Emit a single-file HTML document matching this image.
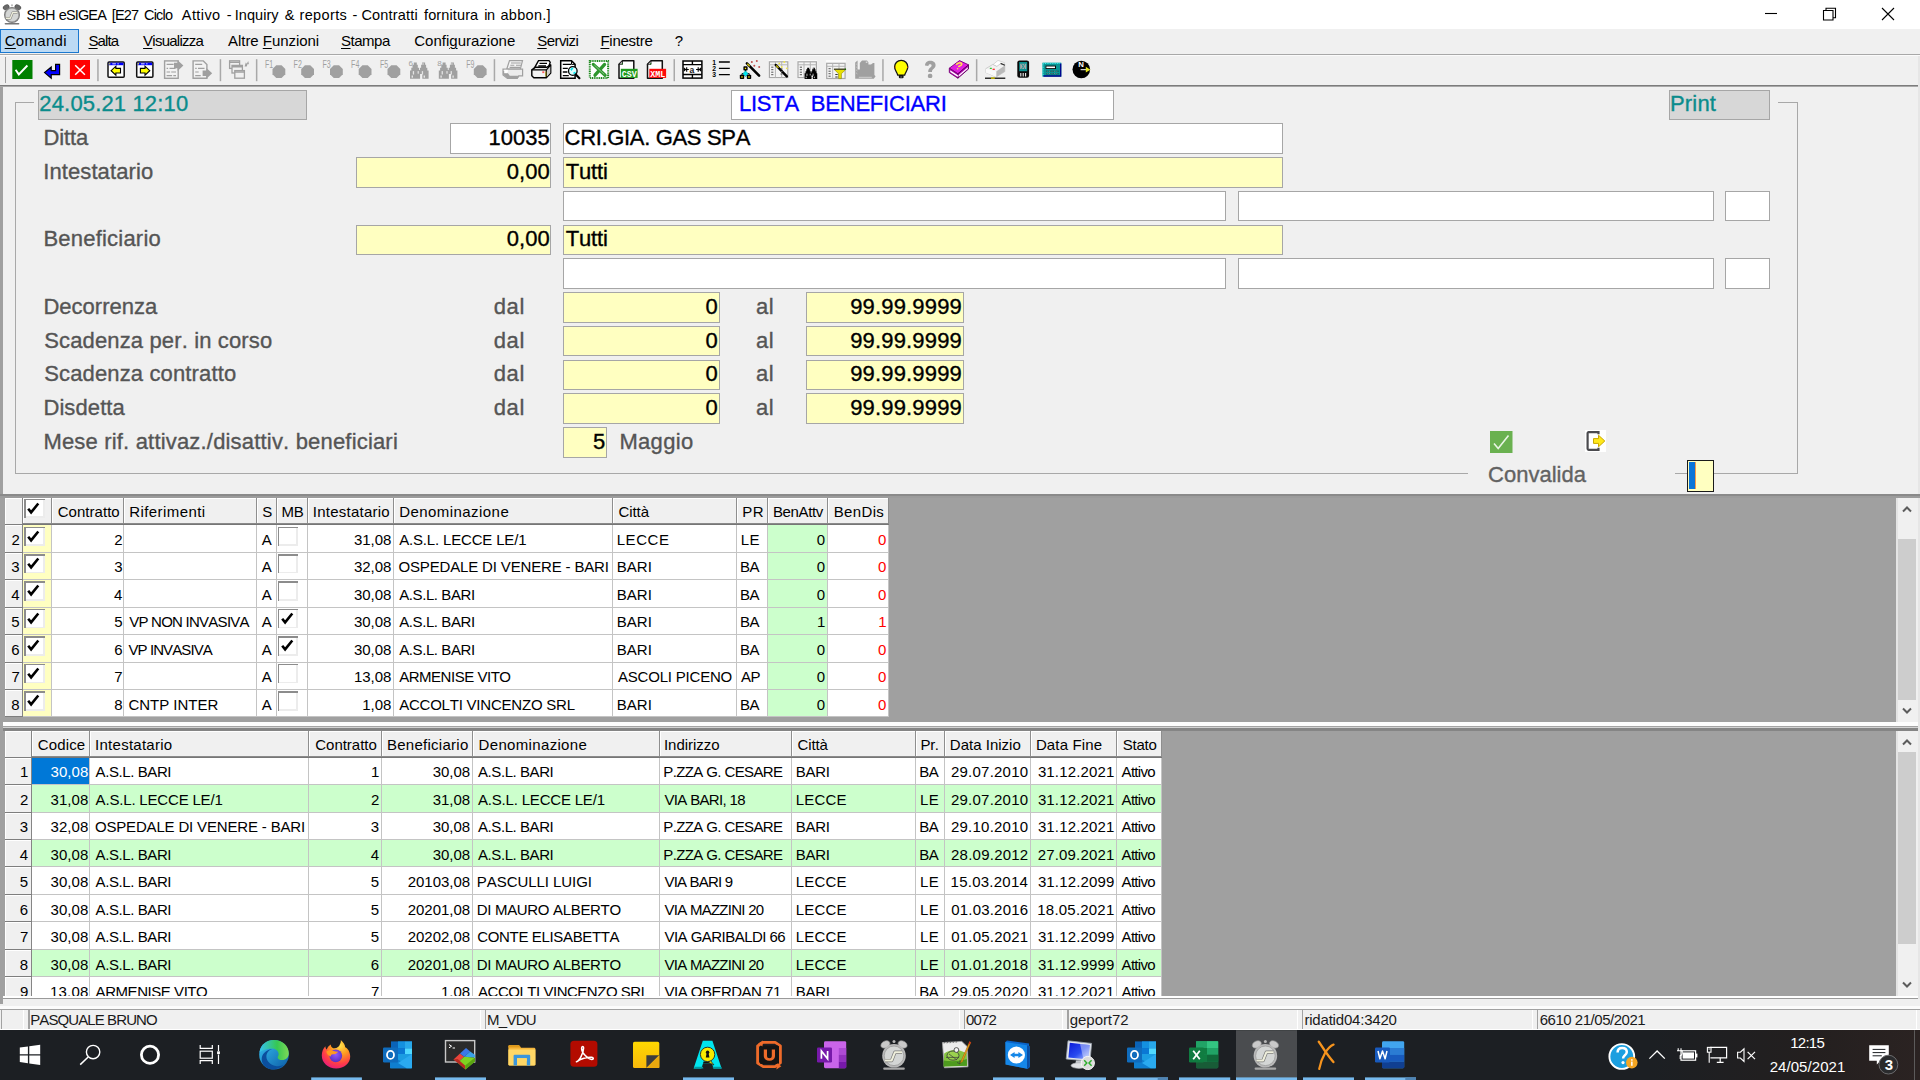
<!DOCTYPE html>
<html><head><meta charset="utf-8"><title>SBH eSIGEA</title><style>
html,body{margin:0;padding:0;}
body{width:1920px;height:1080px;overflow:hidden;background:#f0f0f0;position:relative;font-family:"Liberation Sans",sans-serif;font-kerning:none;}
.a{position:absolute;display:block;}
.t{position:absolute;white-space:pre;font-kerning:none;}
.t u{text-decoration-thickness:1px;text-underline-offset:2px;}
</style></head><body>
<div class="a" style="left:0.00px;top:0.00px;width:1920.00px;height:29.00px;background:#ffffff;"></div>
<div class="a" style="left:0.00px;top:28.60px;width:1920.00px;height:1.00px;background:#dcdcdc;"></div>
<div class="t" style="left:26.41px;top:5.68px;font-size:14.5px;line-height:19px;color:#000;letter-spacing:-0.406px;">SBH</div>
<div class="t" style="left:58.79px;top:5.68px;font-size:14.5px;line-height:19px;color:#000;letter-spacing:-0.870px;">eSIGEA</div>
<div class="t" style="left:111.84px;top:5.68px;font-size:14.5px;line-height:19px;color:#000;letter-spacing:-0.870px;">[E27</div>
<div class="t" style="left:144.01px;top:5.68px;font-size:14.5px;line-height:19px;color:#000;letter-spacing:-0.796px;">Ciclo</div>
<div class="t" style="left:181.82px;top:5.68px;font-size:14.5px;line-height:19px;color:#000;letter-spacing:0.415px;">Attivo</div>
<div class="t" style="left:226.71px;top:5.68px;font-size:14.5px;line-height:19px;color:#000;">-</div>
<div class="t" style="left:234.71px;top:5.68px;font-size:14.5px;line-height:19px;color:#000;letter-spacing:0.058px;">Inquiry</div>
<div class="t" style="left:284.64px;top:5.68px;font-size:14.5px;line-height:19px;color:#000;">&amp;</div>
<div class="t" style="left:299.49px;top:5.68px;font-size:14.5px;line-height:19px;color:#000;letter-spacing:0.360px;">reports</div>
<div class="t" style="left:352.41px;top:5.68px;font-size:14.5px;line-height:19px;color:#000;">-</div>
<div class="t" style="left:361.41px;top:5.68px;font-size:14.5px;line-height:19px;color:#000;letter-spacing:0.189px;">Contratti</div>
<div class="t" style="left:424.04px;top:5.68px;font-size:14.5px;line-height:19px;color:#000;letter-spacing:0.114px;">fornitura</div>
<div class="t" style="left:484.25px;top:5.68px;font-size:14.5px;line-height:19px;color:#000;letter-spacing:-0.406px;">in</div>
<div class="t" style="left:500.53px;top:5.68px;font-size:14.5px;line-height:19px;color:#000;letter-spacing:0.279px;">abbon.]</div>
<svg class="a" style="left:0;top:0" width="26" height="28" viewBox="0 0 26 28"><g transform="translate(2.00 -702.93) scale(0.68)"><ellipse cx="6.1" cy="1044.400" rx="4.800" ry="3.400" fill="#6a6a6a" stroke="#333" stroke-width="0.600" transform="rotate(-28 6.1 1044.400)"/><ellipse cx="23.3" cy="1044.400" rx="4.800" ry="3.400" fill="#6a6a6a" stroke="#333" stroke-width="0.600" transform="rotate(28 23.3 1044.400)"/><circle cx="14.700000000000001" cy="1041.600" r="1.500" fill="#b5b5b5"/><circle cx="14.700000000000001" cy="1055.800" r="11.800" fill="#7c7c7c"/><circle cx="14.700000000000001" cy="1055.800" r="9.800" fill="#d4d6d5" stroke="#9c9c9c" stroke-width="0.800"/><path d="M5.7 1060.600h6.600l3.400-8.400h7" stroke="#7a7a7a" stroke-width="3.400" fill="none" stroke-linejoin="round"/><path d="M5.7 1060.600h6.600l3.400-8.400h7" stroke="#efefdc" stroke-width="2" fill="none" stroke-linejoin="round"/><rect x="3.9" y="1067.400" width="21.600" height="2.400" rx="1" fill="#777"/></g></svg>
<svg class="a" style="left:1750.00px;top:0.00px;" width="170" height="29" viewBox="0 0 170 29"><path d="M15 13.5h12" stroke="#000" stroke-width="1.1" fill="none"/><path d="M73.5 10.5h9.5v9.5h-9.5zM76 10.5v-2.3h9.5v9.5h-2.3" stroke="#000" stroke-width="1.1" fill="none"/><path d="M132 8l12 12M144 8l-12 12" stroke="#000" stroke-width="1.1" fill="none"/></svg>
<div class="a" style="left:0.00px;top:29.00px;width:1920.00px;height:25.00px;background:#f0f0f0;"></div>
<div class="a" style="left:0.00px;top:54.00px;width:1920.00px;height:1.00px;background:#a8a8a8;"></div>
<div class="a" style="left:0.00px;top:55.00px;width:1920.00px;height:1.00px;background:#fbfbfb;"></div>
<div class="a" style="left:0.00px;top:29.40px;width:78.60px;height:23.20px;background:#bcdaf4;border:1px solid #1a78cf;box-sizing:border-box;"></div>
<div class="t" style="left:4.69px;top:31.05px;font-size:15px;line-height:20px;color:#000;letter-spacing:0.307px;"><u>C</u>omandi</div>
<div class="t" style="left:88.51px;top:31.05px;font-size:15px;line-height:20px;color:#000;letter-spacing:-0.900px;"><u>S</u>alta</div>
<div class="t" style="left:143.08px;top:31.05px;font-size:15px;line-height:20px;color:#000;letter-spacing:-0.751px;"><u>V</u>isualizza</div>
<div class="t" style="left:228.12px;top:31.05px;font-size:15px;line-height:20px;color:#000;letter-spacing:-0.059px;">Altre <u>F</u>unzioni</div>
<div class="t" style="left:341.02px;top:31.05px;font-size:15px;line-height:20px;color:#000;letter-spacing:-0.483px;"><u>S</u>tampa</div>
<div class="t" style="left:414.19px;top:31.05px;font-size:15px;line-height:20px;color:#000;letter-spacing:0.010px;">Confi<u>g</u>urazione</div>
<div class="t" style="left:537.27px;top:31.05px;font-size:15px;line-height:20px;color:#000;letter-spacing:-0.578px;"><u>S</u>ervizi</div>
<div class="t" style="left:600.47px;top:31.05px;font-size:15px;line-height:20px;color:#000;letter-spacing:-0.277px;"><u>F</u>inestre</div>
<div class="t" style="left:674.83px;top:31.05px;font-size:15px;line-height:20px;color:#000;">?</div>
<div class="a" style="left:0.00px;top:56.00px;width:1920.00px;height:28.50px;background:#f0f0f0;"></div>
<div class="a" style="left:0.00px;top:84.50px;width:1917.50px;height:1.50px;background:#7c7c7c;"></div>
<div class="a" style="left:0.00px;top:86.00px;width:1917.50px;height:1.00px;background:#a8a8a8;"></div>
<div class="a" style="left:4.80px;top:57.00px;width:1.20px;height:26.00px;background:#a0a0a0;"></div>
<svg class="a" style="left:0;top:56px" width="1100" height="29" viewBox="0 56 1100 29"><rect x="12.3" y="60" width="20.2" height="19" fill="#008000"/><path d="M15.6 69.8l3.2 4.6 8.6-8.9" stroke="#fff" stroke-width="1.9" fill="none"/><path d="M55.6 64.4h4v10.2h-8.4v3.6l-6.6-5.6 6.6-5.6v3.6h4.4z" fill="#0000ff" stroke="#000" stroke-width="1.2" stroke-linejoin="miter"/><rect x="69.9" y="60" width="20.1" height="19" fill="#ff0000"/><path d="M75.2 65.3l9.7 9.5M84.9 65.3l-9.7 9.5" stroke="#fff" stroke-width="1.5" fill="none"/><rect x="97.2" y="59.2" width="1.5" height="22" fill="#a9a9a9"/><rect x="108.0" y="62" width="16.2" height="15.3" rx="1" fill="#fff" stroke="#111" stroke-width="1.5"/><rect x="108.8" y="62.7" width="14.6" height="2.5" fill="#0000ff"/><rect x="112.3" y="63.4" width="3.6" height="0.9" fill="#fff"/><rect x="117.3" y="63.4" width="1.6" height="0.9" fill="#cfcfff"/><rect x="109.1" y="63.2" width="1.2" height="1.2" fill="#ffff00"/><path d="M120.5 68.4h-4.6v-2.2l-4.8 4.5 4.8 4.5v-2.2h4.6z" fill="#ffff00" stroke="#000" stroke-width="1.1"/><rect x="136.7" y="62" width="16.2" height="15.3" rx="1" fill="#fff" stroke="#111" stroke-width="1.5"/><rect x="137.5" y="62.7" width="14.6" height="2.5" fill="#0000ff"/><rect x="141" y="63.4" width="3.6" height="0.9" fill="#fff"/><rect x="146" y="63.4" width="1.6" height="0.9" fill="#cfcfff"/><rect x="137.8" y="63.2" width="1.2" height="1.2" fill="#ffff00"/><path d="M140.4 68.4h4.6v-2.2l4.8 4.5-4.8 4.5v-2.2h-4.6z" fill="#ffff00" stroke="#000" stroke-width="1.1"/><rect x="164.6" y="60.9" width="13.6" height="17.4" fill="#f3f3f3" stroke="#a0a0a0" stroke-width="1.4"/><path d="M166.6 64.3h7M166.6 68.3h1.5M169.5 68.3h6M166.6 72h3.5M171.2 72h4.8M166.6 75.7h5.5M173.3 75.7h2.7" stroke="#a0a0a0" stroke-width="1.2"/><path d="M174 62.8h3.6v-2.6l5.8 5.4-5.8 5.4v-2.7h-3.6z" fill="#a0a0a0"/><path d="M193.1 60.9h10.2l3.6 3.6v13.8h-13.8z" fill="#f3f3f3" stroke="#a0a0a0" stroke-width="1.4"/><path d="M195.2 64.3h7M195.2 68.3h1.5M198 68.3h6.5M195.2 72h3.5M195.2 75.7h5.5" stroke="#a0a0a0" stroke-width="1.2"/><path d="M202.6 70.5h3.8v-2.6l5.8 5.4-5.8 5.4v-2.7h-3.8z" fill="#a0a0a0"/><rect x="219.7" y="59.2" width="1.5" height="22" fill="#a9a9a9"/><g fill="#f0f0f0" stroke="#a0a0a0" stroke-width="1.3"><rect x="229.6" y="60.8" width="10" height="7.6"/><rect x="232" y="65.4" width="10.4" height="7.6"/><rect x="234.8" y="70.6" width="9.6" height="7.6"/></g><path d="M229.6 62.2h10M232 66.8h10.4M234.8 72h9.6" stroke="#a0a0a0" stroke-width="1.6"/><path d="M244.6 66.6l1.2-4 1 1.2 1.4-2.8.8 3.6-1.3-.8-1 2.6z" fill="#a0a0a0"/><rect x="255.89999999999998" y="59.2" width="1.5" height="22" fill="#a9a9a9"/><polygon points="276.25,65.20 281.55,65.20 285.30,68.95 285.30,74.25 281.55,78.00 276.25,78.00 272.50,74.25 272.50,68.95" fill="#a0a0a0"/><text x="264.9" y="67.6" font-family="Liberation Sans" font-size="10" fill="#a0a0a0" textLength="8.2" lengthAdjust="spacingAndGlyphs">F1</text><polygon points="304.95,65.20 310.25,65.20 314.00,68.95 314.00,74.25 310.25,78.00 304.95,78.00 301.20,74.25 301.20,68.95" fill="#a0a0a0"/><text x="293.59999999999997" y="67.6" font-family="Liberation Sans" font-size="10" fill="#a0a0a0" textLength="8.2" lengthAdjust="spacingAndGlyphs">F2</text><polygon points="333.75,65.20 339.05,65.20 342.80,68.95 342.80,74.25 339.05,78.00 333.75,78.00 330.00,74.25 330.00,68.95" fill="#a0a0a0"/><text x="322.4" y="67.6" font-family="Liberation Sans" font-size="10" fill="#a0a0a0" textLength="8.2" lengthAdjust="spacingAndGlyphs">F3</text><polygon points="362.45,65.20 367.75,65.20 371.50,68.95 371.50,74.25 367.75,78.00 362.45,78.00 358.70,74.25 358.70,68.95" fill="#a0a0a0"/><text x="351.09999999999997" y="67.6" font-family="Liberation Sans" font-size="10" fill="#a0a0a0" textLength="8.2" lengthAdjust="spacingAndGlyphs">F4</text><polygon points="391.25,65.20 396.55,65.20 400.30,68.95 400.30,74.25 396.55,78.00 391.25,78.00 387.50,74.25 387.50,68.95" fill="#a0a0a0"/><text x="379.9" y="67.6" font-family="Liberation Sans" font-size="10" fill="#a0a0a0" textLength="8.2" lengthAdjust="spacingAndGlyphs">F5</text><polygon points="477.55,65.20 482.85,65.20 486.60,68.95 486.60,74.25 482.85,78.00 477.55,78.00 473.80,74.25 473.80,68.95" fill="#a0a0a0"/><text x="466.2" y="67.6" font-family="Liberation Sans" font-size="10" fill="#a0a0a0" textLength="8.2" lengthAdjust="spacingAndGlyphs">F9</text><g transform="translate(410 62.5) scale(1.0)" fill="#a0a0a0"><path d="M3.8 0h3v2.2h1v3h1.2v2.2h0.9V5.200h1.2v-3h1V0h3v2.200h1v3h1.2v2.800h1.300v8.300h-6.300v-4.800h-2.200v4.800H0V8h1.300V5.200h1.200v-3h1.300z"/></g><g transform="translate(410 62.5) scale(1.0)" fill="#f0f0f0" opacity="0.85"><rect x="2.8" y="8.6" width="1.3" height="3.4"/><rect x="1.6" y="13" width="1.4" height="2.2"/><rect x="7.600" y="8.6" width="1.2" height="2.6"/><rect x="11.800" y="8.6" width="1.300" height="3.4"/><rect x="13.600" y="13" width="1.400" height="2.200"/><rect x="12.3" y="1" width="1.600" height="1"/></g><text x="408.4" y="66" font-family="Liberation Sans" font-size="8" fill="#a0a0a0">6</text><g transform="translate(438.8 62.5) scale(1.0)" fill="#a0a0a0"><path d="M3.8 0h3v2.2h1v3h1.2v2.2h0.9V5.200h1.2v-3h1V0h3v2.200h1v3h1.2v2.800h1.300v8.300h-6.300v-4.800h-2.200v4.800H0V8h1.300V5.200h1.200v-3h1.300z"/></g><g transform="translate(438.8 62.5) scale(1.0)" fill="#f0f0f0" opacity="0.85"><rect x="2.8" y="8.6" width="1.3" height="3.4"/><rect x="1.6" y="13" width="1.4" height="2.2"/><rect x="7.600" y="8.6" width="1.2" height="2.6"/><rect x="11.800" y="8.6" width="1.300" height="3.4"/><rect x="13.600" y="13" width="1.400" height="2.200"/><rect x="12.3" y="1" width="1.600" height="1"/></g><text x="437.2" y="66" font-family="Liberation Sans" font-size="8" fill="#a0a0a0">8</text><rect x="493.7" y="59.2" width="1.5" height="22" fill="#a9a9a9"/><path d="M509.5 60.6h13l-2.2 8.6h-13.6z" fill="#f4f4f4" stroke="#a0a0a0" stroke-width="1.2"/><path d="M511 63h9.800M510.300 65.2h4M516 65.2h5M509.600 67.400h10.500" stroke="#a0a0a0" stroke-width="1.1"/><path d="M503 69.2h19.600v6.600h-3.800l-1.600 2.600h-9.800l-4.400-3.400z" fill="#ececec" stroke="#a0a0a0" stroke-width="1.2"/><path d="M503 74.5l4.800 4h10l1.800-2.800h-9.800l-3.400-4.800h-3.400z" fill="#a0a0a0"/><rect x="504.200" y="69.800" width="3.600" height="3.400" fill="#fff"/><path d="M538.5 60.600h10.500l1.200 1.800-2.200 6h-13.800z" fill="#fff" stroke="#000" stroke-width="1.4"/><path d="M539.500 63.300h7.500M538.300 66h7.700" stroke="#000" stroke-width="1.300"/><path d="M531.800 69.800l3.800-2.600h11.500l3.600-2.400v8.200l-4.400 4.800h-12.500l-2-2z" fill="#e8e8e8" stroke="#000" stroke-width="1.400" stroke-linejoin="round"/><path d="M533 70.200h13.200v6.600h-12.200z" fill="#f4f4f4"/><path d="M546.300 70l4-3.800v6.600l-4 4.400z" fill="#cfcfcf"/><path d="M531.800 69.800h14.600l4.300-4.600M546.300 70v7.600" stroke="#000" stroke-width="1.200" fill="none"/><rect x="542.300" y="71.300" width="2" height="1.800" fill="#ff5a5a"/><rect x="545.400" y="71.500" width="1" height="5" fill="#a09000"/><path d="M560.700 60.800h10.800l3.600 3.600v13.800h-14.400z" fill="#fff" stroke="#000" stroke-width="1.500"/><path d="M571.500 60.800v3.600h3.600" fill="none" stroke="#000" stroke-width="1"/><path d="M562.800 64.400h8.200M562.800 68.300h5M562.800 72h4.600M562.800 75.700h6" stroke="#000" stroke-width="1.300"/><circle cx="572.800" cy="71" r="4.300" fill="#dff" stroke="#000" stroke-width="1.300"/><path d="M570.200 69.200a3 3 0 0 1 3.400-1.400l-2 3.300z" fill="#00e8f0"/><path d="M573.500 73.500l2-1.200" stroke="#00e8f0" stroke-width="1.600"/><path d="M575.800 74.400l3.600 3.800" stroke="#000" stroke-width="2.200" stroke-linecap="round"/><rect x="589.800" y="61" width="18.300" height="17" fill="#fff" stroke="#1f8a1f" stroke-width="2" stroke-dasharray="1.100 0.700"/><path d="M593.300 64.400l11.800 10.800M604.600 64.400l-9.600 10.800" stroke="#2d962d" stroke-width="3.300" stroke-linecap="round"/><path d="M594.300 65l10 9.400" stroke="#dff0df" stroke-width="0.500"/><path d="M622.5 60.800h11.300v17.400H619.0V64.300z" fill="#fff" stroke="#111" stroke-width="1.500" stroke-linejoin="round"/><path d="M622.5 60.800v3.500h-3.500z" fill="#d0d0d0" stroke="#111" stroke-width="0.800"/><rect x="621.6999999999999" y="63.400" width="1.100" height="1" fill="#008000"/><rect x="620.8" y="68.800" width="16.800" height="9.100" fill="#1f9a1f"/><text x="621.6999999999999" y="76.600" font-family="Liberation Mono" font-weight="bold" font-size="9.600" fill="#fff" textLength="15" lengthAdjust="spacingAndGlyphs">CSV</text><path d="M651.0 60.800h11.300v17.400H647.5V64.300z" fill="#fff" stroke="#111" stroke-width="1.500" stroke-linejoin="round"/><path d="M651.0 60.800v3.500h-3.500z" fill="#d0d0d0" stroke="#111" stroke-width="0.800"/><rect x="650.1999999999999" y="63.400" width="1.100" height="1" fill="#008000"/><rect x="649.3" y="68.800" width="16.800" height="9.100" fill="#ff0a0a"/><text x="650.1999999999999" y="76.600" font-family="Liberation Mono" font-weight="bold" font-size="9.600" fill="#fff" textLength="15" lengthAdjust="spacingAndGlyphs">XML</text><rect x="673.5" y="59.2" width="1.5" height="22" fill="#a9a9a9"/><rect x="683" y="61" width="18.900" height="17.100" fill="#fff" stroke="#000" stroke-width="1.500"/><path d="M683 64.600h18.900M683 74.500h18.900M692.400 61v3.600M692.400 74.500v3.600" stroke="#000" stroke-width="1.400"/><path d="M684.400 69.500h4.400M700.500 69.500h-4.400M686.700 67.300v4.400M698.200 67.300v4.400" stroke="#000" stroke-width="1.100"/><path d="M683.800 67.300l2.600 2.200-2.600 2.200zM701.100 67.300l-2.600 2.200 2.600 2.200z" fill="#000"/><text x="689.600" y="72.600" font-family="Liberation Sans" font-weight="bold" font-size="8.600" fill="#222">a</text><path d="M718.900 62h10.900M718.900 68.300h10.900M718.900 74.600h10.900" stroke="#000" stroke-width="1.300"/><g font-family="Liberation Sans" font-weight="bold" font-size="6.800" fill="#000"><text x="712.200" y="64.800">1</text><text x="712.200" y="71">2</text><text x="712.200" y="77.400">3</text></g><path d="M746.900 63.400l12.200 12.200" stroke="#000" stroke-width="2.600" stroke-linecap="round"/><path d="M747.300 63.800l2.400 2.400" stroke="#d8c800" stroke-width="1.300"/><g fill="#c0504d"><circle cx="751.800" cy="62" r="1"/><circle cx="756.800" cy="60.900" r="1"/><circle cx="754.300" cy="65.700" r="1"/><circle cx="759.200" cy="67" r="1"/></g><path d="M745.500 70v2M742 75.200v-1.600h7.200v1.600" stroke="#000" stroke-width="1" fill="none"/><rect x="743.400" y="66.300" width="4.200" height="4.200" rx="0.800" fill="#000"/><rect x="744.800" y="67.700" width="1.400" height="1.400" fill="#ffe800"/><path d="M745.500 70.800l2.700 2.900-2.700 2.900-2.700-2.900z" fill="#00e5ee" stroke="#008b8b" stroke-width="0.500"/><rect x="739.800" y="74.800" width="4.400" height="4.200" rx="0.800" fill="#000"/><rect x="741.200" y="76.200" width="1.500" height="1.500" fill="#d8c800"/><rect x="746.800" y="74.800" width="4.400" height="4.200" rx="0.800" fill="#000"/><rect x="748.200" y="76.200" width="1.500" height="1.500" fill="#d8c800"/><rect x="768.6" y="60" width="20.0" height="19" fill="#fbfbfb"/><rect x="769.4" y="61.8" width="18.4" height="15.8" fill="#f4f4f4" stroke="#a8a8a8" stroke-width="1.200"/><path d="M769.4 64.8h18.4M775.4 61.8v15.8M781.6999999999999 61.8v15.8" stroke="#b4b4b4" stroke-width="1"/><path d="M771.1999999999999 67.2h2.200M771.1999999999999 69.7h2.200M771.1999999999999 72.2h2.200M771.1999999999999 74.7h2.200" stroke="#555" stroke-width="1"/><path d="M775.800 65l11 11.400" stroke="#000" stroke-width="2.500" stroke-linecap="round"/><path d="M776.300 65.500l2.200 2.300" stroke="#d8c800" stroke-width="1.200"/><g fill="#f2e94e"><circle cx="779.300" cy="63.400" r="0.900"/><circle cx="784.300" cy="62" r="0.900"/><circle cx="781.800" cy="67" r="0.900"/><circle cx="786.800" cy="68.300" r="0.900"/></g><path d="M780.500 69h2M780.500 71.500h2M780.500 74h2" stroke="#555" stroke-width="1"/><rect x="797.2" y="60" width="20.0" height="19" fill="#fbfbfb"/><rect x="798.0" y="61.8" width="18.4" height="15.8" fill="#f4f4f4" stroke="#a8a8a8" stroke-width="1.200"/><path d="M798.0 64.8h18.4M804.0 61.8v15.8M810.3 61.8v15.8" stroke="#b4b4b4" stroke-width="1"/><path d="M799.8 67.2h2.200M799.8 69.7h2.200M799.8 72.2h2.200M799.8 74.7h2.200" stroke="#555" stroke-width="1"/><g transform="translate(804.6 67.8) scale(0.68)" fill="#000"><path d="M3.8 0h3v2.2h1v3h1.2v2.2h0.9V5.200h1.2v-3h1V0h3v2.200h1v3h1.2v2.800h1.300v8.300h-6.300v-4.800h-2.200v4.800H0V8h1.300V5.200h1.200v-3h1.300z"/></g><g transform="translate(804.6 67.8) scale(0.68)" fill="#f0f0f0" opacity="0.85"><rect x="2.8" y="8.6" width="1.3" height="3.4"/><rect x="1.6" y="13" width="1.4" height="2.2"/><rect x="7.600" y="8.6" width="1.2" height="2.6"/><rect x="11.800" y="8.6" width="1.300" height="3.4"/><rect x="13.600" y="13" width="1.400" height="2.200"/><rect x="12.3" y="1" width="1.600" height="1"/></g><rect x="825.9000000000001" y="60" width="20.0" height="19" fill="#fbfbfb"/><rect x="826.7" y="63.3" width="18.4" height="15.2" fill="#f4f4f4" stroke="#a8a8a8" stroke-width="1.200"/><path d="M826.7 66.3h18.4M832.7 63.3v15.2M839.0 63.3v15.2" stroke="#b4b4b4" stroke-width="1"/><path d="M828.5 68.7h2.200M828.5 71.2h2.200M828.5 73.7h2.200M828.5 76.2h2.200" stroke="#555" stroke-width="1"/><path d="M834 69.200h12l-4.600 4.600v4.800h-2.800v-4.800z" fill="#e8e000" stroke="#8a8400" stroke-width="0.600"/><path d="M834 69.200h12" stroke="#222" stroke-width="1"/><rect x="844.800" y="68.700" width="1.200" height="1" fill="#008000"/><path d="M835.300 74.500h2.400M835.300 77h2.400" stroke="#333" stroke-width="1"/><path d="M855.200 62.600l2.400-2.200v9h2.200v-6.400l2.200-2.400h5l1.400 1.600v2.400h2.600l2 -1.600h1.400v12l1.200 1.200-1.800 2.600h-18.600z" fill="#a0a0a0"/><path d="M856.300 64l1 .8M856.300 67l1 .8M856.300 70l1 .8M856.300 73l1 .8M858.800 77.300h13" stroke="#e4e4e4" stroke-width="0.700"/><rect x="865.800" y="61.600" width="1.600" height="1.200" fill="#e4e4e4"/><rect x="882.2" y="59.2" width="1.5" height="22" fill="#a9a9a9"/><path d="M901.200 60.400c3.800 0 6.600 2.800 6.600 6.600 0 3-2.200 5-3.200 8.200h-6.800c-1-3.200-3.200-5.200-3.200-8.200 0-3.800 2.800-6.600 6.600-6.600z" fill="#ffff00" stroke="#111" stroke-width="1.300"/><rect x="898.800" y="75" width="4.800" height="3.200" rx="1.200" fill="#111"/><rect x="900.300" y="76.600" width="1.800" height="0.800" fill="#9a9a9a"/><rect x="894.600" y="66.600" width="0.800" height="1.300" fill="#e04000"/><rect x="907" y="66.600" width="0.800" height="1.300" fill="#e04000"/><path d="M925 65.600c0-3 2.200-4.800 5.200-4.800 3.200 0 5.400 1.800 5.400 4.400 0 2.300-1.600 3.200-2.700 4.200-.7.600-.9 1.300-.9 2.700h-3.800c0-2.400.6-3.400 1.800-4.400.9-.8 1.600-1.300 1.600-2.200 0-.8-.6-1.300-1.500-1.300-1 0-1.700.6-1.700 1.800z" fill="#a0a0a0"/><rect x="927.900" y="73.800" width="4.400" height="4.200" rx="1.600" fill="#a0a0a0"/><path d="M949.300 68.200l10.200-7.600 9 4.200-10.600 9z" fill="#e020e0" stroke="#7a007a" stroke-width="0.900"/><path d="M949.300 68.200l8.600 5.600v4.400l-8.600-5.600z" fill="#a000a0" stroke="#7a007a" stroke-width="0.900"/><path d="M957.900 73.800l10.600-9v4.200l-10.600 9.200z" fill="#b400b4" stroke="#5a005a" stroke-width="0.900"/><path d="M950.200 70.200l7.700 5v1.800l-7.700-5zM958.600 75l9.200-7.800v1.600l-9.200 8z" fill="#fff"/><path d="M956.300 64.800c1-1.800 4-2.600 5.200-1.400 1 1-.6 2.200-2.400 2.800l-.6 1" stroke="#ffe84a" stroke-width="1.500" fill="none"/><circle cx="957.600" cy="68.800" r="0.800" fill="#ffe84a"/><rect x="975.9000000000001" y="59.2" width="1.5" height="22" fill="#a9a9a9"/><path d="M992.800 64.800l5.200-4.400 6.800 2.400-4.600 5.200z" fill="#fff" stroke="#c8c8c8" stroke-width="0.700"/><path d="M985.600 68.800l7.200-4.400 4 2 3.600-2.600 4.400 1.600v6.200l-8.600 5.400-10.600-4.600z" fill="#f2f2f2" stroke="#bdbdbd" stroke-width="0.700"/><path d="M996.200 71.400l8.600-6v6.200l-8.600 5.400z" fill="#b9b9b9"/><path d="M985.600 68.800l10.600 2.600v5.600l-10.600-4.600z" fill="#fafafa"/><path d="M1000.600 63.400l4.400 1.800" stroke="#333" stroke-width="1.200"/><rect x="989.800" y="67.800" width="2" height="1.100" fill="#22c022"/><rect x="992.600" y="68.700" width="2.200" height="1.200" fill="#ff2020"/><path d="M985 78.200h20.300" stroke="#000" stroke-width="1.200"/><rect x="991" y="77.400" width="3.800" height="1.400" fill="#d8c800"/><rect x="1017.300" y="60.400" width="11.800" height="17.400" rx="2.200" fill="#0a0a0a"/><rect x="1019.200" y="62" width="8" height="9.200" fill="#0a9090"/><path d="M1020.200 63.800h6v5.200h-6z" fill="#a8a8a8"/><path d="M1021.600 63.800l1.400 2.600-1.400 2.600M1024.800 63.800l-1.400 2.600 1.400 2.600" stroke="#0a9090" stroke-width="0.800" fill="none"/><path d="M1020.800 73v3.600M1023.200 73v3.600M1025.600 73v3.600" stroke="#f0f0f0" stroke-width="1.100"/><rect x="1042.400" y="62.700" width="18.900" height="13.900" fill="#0a9494"/><path d="M1043 76.600v-13.300h18" stroke="#3fe8e8" stroke-width="1.200" fill="none" stroke-dasharray="1 0.700"/><path d="M1043.400 76h17.300v-12.600" stroke="#000090" stroke-width="1.300" fill="none"/><rect x="1045.600" y="65.600" width="10.400" height="3.400" fill="#0a0a0a"/><rect x="1046.400" y="66.500" width="8.600" height="1.600" fill="#fff"/><path d="M1046.400 71.200h12.400M1046.400 73.700h12.400" stroke="#0a3a3a" stroke-width="1.600" stroke-dasharray="1.500 0.900"/><path d="M1046.800 71.200h12M1046.800 73.700h12" stroke="#d8f4f4" stroke-width="0.700" stroke-dasharray="0.800 1.600"/><circle cx="1081.300" cy="69.500" r="8.800" fill="#000"/><text x="1078.200" y="67.200" font-family="Liberation Sans" font-weight="bold" font-size="7.800" fill="#fff">N</text><path d="M1080.600 69.700h6" stroke="#fff" stroke-width="1"/><path d="M1085.800 66.800l4.600 2.900-4.600 2.900z" fill="#e8e820"/></svg>
<div class="a" style="left:0.00px;top:86.50px;width:1920.00px;height:407.50px;background:#f0f0f0;"></div>
<div class="a" style="left:0.00px;top:86.50px;width:2.50px;height:917.90px;background:#a0a0a0;"></div>
<div class="a" style="left:1917.50px;top:56.00px;width:2.50px;height:954.00px;background:#e6e6e6;"></div>
<div class="a" style="left:15.00px;top:101.50px;width:18.50px;height:1.20px;background:#a8a8a8;"></div>
<div class="a" style="left:15.00px;top:101.50px;width:1.20px;height:372.50px;background:#a8a8a8;"></div>
<div class="a" style="left:15.00px;top:472.80px;width:1453.40px;height:1.20px;background:#a8a8a8;"></div>
<div class="a" style="left:1675.00px;top:472.80px;width:123.00px;height:1.20px;background:#a8a8a8;"></div>
<div class="a" style="left:1796.80px;top:101.50px;width:1.20px;height:372.50px;background:#a8a8a8;"></div>
<div class="a" style="left:1777.50px;top:101.50px;width:20.50px;height:1.20px;background:#a8a8a8;"></div>
<div class="a" style="left:37.50px;top:89.50px;width:269.80px;height:30.50px;background:#d7d7d7;border:1px solid #a6a6a6;box-sizing:border-box;"></div>
<div class="t" style="left:39.34px;top:89.38px;font-size:22px;line-height:29px;color:#0a8c8c;letter-spacing:0.155px;-webkit-text-stroke:0.35px currentColor;">24.05.21 12:10</div>
<div class="a" style="left:731.30px;top:89.50px;width:382.50px;height:30.50px;background:#ffffff;border:1px solid #a6a6a6;box-sizing:border-box;"></div>
<div class="t" style="left:738.90px;top:89.38px;font-size:22px;line-height:29px;color:#0000ff;letter-spacing:-0.209px;-webkit-text-stroke:0.35px currentColor;">LISTA  BENEFICIARI</div>
<div class="a" style="left:1668.80px;top:89.50px;width:101.20px;height:30.50px;background:#d7d7d7;border:1px solid #a6a6a6;box-sizing:border-box;"></div>
<div class="t" style="left:1669.90px;top:89.38px;font-size:22px;line-height:29px;color:#0a8c8c;letter-spacing:0.208px;-webkit-text-stroke:0.35px currentColor;">Print</div>
<div class="t" style="left:43.40px;top:123.13px;font-size:22px;line-height:29px;color:#555555;letter-spacing:-0.083px;-webkit-text-stroke:0.35px currentColor;">Ditta</div>
<div class="a" style="left:450.00px;top:123.25px;width:101.30px;height:30.50px;background:#ffffff;border:1px solid #a6a6a6;box-sizing:border-box;"></div>
<div class="t" style="left:488.55px;top:123.13px;font-size:22px;line-height:29px;color:#000;-webkit-text-stroke:0.35px currentColor;">10035</div>
<div class="a" style="left:562.50px;top:123.25px;width:720.00px;height:30.50px;background:#ffffff;border:1px solid #a6a6a6;box-sizing:border-box;"></div>
<div class="t" style="left:564.58px;top:123.13px;font-size:22px;line-height:29px;color:#000;letter-spacing:-0.330px;-webkit-text-stroke:0.35px currentColor;">CRI.GIA. GAS SPA</div>
<div class="t" style="left:43.17px;top:156.88px;font-size:22px;line-height:29px;color:#555555;letter-spacing:0.110px;-webkit-text-stroke:0.35px currentColor;">Intestatario</div>
<div class="a" style="left:356.30px;top:157.00px;width:195.00px;height:30.50px;background:#ffffc1;border:1px solid #a6a6a6;box-sizing:border-box;"></div>
<div class="t" style="left:506.84px;top:156.88px;font-size:22px;line-height:29px;color:#000;-webkit-text-stroke:0.35px currentColor;">0,00</div>
<div class="a" style="left:562.50px;top:157.00px;width:720.00px;height:30.50px;background:#ffffc1;border:1px solid #a6a6a6;box-sizing:border-box;"></div>
<div class="t" style="left:565.71px;top:156.88px;font-size:22px;line-height:29px;color:#000;letter-spacing:-0.177px;-webkit-text-stroke:0.35px currentColor;">Tutti</div>
<div class="a" style="left:562.50px;top:190.75px;width:663.30px;height:30.50px;background:#ffffff;border:1px solid #a6a6a6;box-sizing:border-box;"></div>
<div class="a" style="left:1237.50px;top:190.75px;width:476.30px;height:30.50px;background:#ffffff;border:1px solid #a6a6a6;box-sizing:border-box;"></div>
<div class="a" style="left:1725.00px;top:190.75px;width:45.00px;height:30.50px;background:#ffffff;border:1px solid #a6a6a6;box-sizing:border-box;"></div>
<div class="t" style="left:43.40px;top:224.38px;font-size:22px;line-height:29px;color:#555555;letter-spacing:0.216px;-webkit-text-stroke:0.35px currentColor;">Beneficiario</div>
<div class="a" style="left:356.30px;top:224.50px;width:195.00px;height:30.50px;background:#ffffc1;border:1px solid #a6a6a6;box-sizing:border-box;"></div>
<div class="t" style="left:506.84px;top:224.38px;font-size:22px;line-height:29px;color:#000;-webkit-text-stroke:0.35px currentColor;">0,00</div>
<div class="a" style="left:562.50px;top:224.50px;width:720.00px;height:30.50px;background:#ffffc1;border:1px solid #a6a6a6;box-sizing:border-box;"></div>
<div class="t" style="left:565.71px;top:224.38px;font-size:22px;line-height:29px;color:#000;letter-spacing:-0.177px;-webkit-text-stroke:0.35px currentColor;">Tutti</div>
<div class="a" style="left:562.50px;top:258.25px;width:663.30px;height:30.50px;background:#ffffff;border:1px solid #a6a6a6;box-sizing:border-box;"></div>
<div class="a" style="left:1237.50px;top:258.25px;width:476.30px;height:30.50px;background:#ffffff;border:1px solid #a6a6a6;box-sizing:border-box;"></div>
<div class="a" style="left:1725.00px;top:258.25px;width:45.00px;height:30.50px;background:#ffffff;border:1px solid #a6a6a6;box-sizing:border-box;"></div>
<div class="t" style="left:43.40px;top:291.88px;font-size:22px;line-height:29px;color:#555555;letter-spacing:0.021px;-webkit-text-stroke:0.35px currentColor;">Decorrenza</div>
<div class="t" style="left:493.73px;top:291.88px;font-size:22px;line-height:29px;color:#555555;letter-spacing:0.616px;-webkit-text-stroke:0.35px currentColor;">dal</div>
<div class="a" style="left:562.50px;top:292.00px;width:157.50px;height:30.50px;background:#ffffc1;border:1px solid #a6a6a6;box-sizing:border-box;"></div>
<div class="t" style="left:705.42px;top:291.88px;font-size:22px;line-height:29px;color:#000;-webkit-text-stroke:0.35px currentColor;">0</div>
<div class="t" style="left:756.02px;top:291.88px;font-size:22px;line-height:29px;color:#555555;letter-spacing:0.616px;-webkit-text-stroke:0.35px currentColor;">al</div>
<div class="a" style="left:806.30px;top:292.00px;width:157.50px;height:30.50px;background:#ffffc1;border:1px solid #a6a6a6;box-sizing:border-box;"></div>
<div class="t" style="left:850.17px;top:291.88px;font-size:22px;line-height:29px;color:#000;letter-spacing:0.174px;-webkit-text-stroke:0.35px currentColor;">99.99.9999</div>
<div class="t" style="left:44.20px;top:325.63px;font-size:22px;line-height:29px;color:#555555;letter-spacing:0.143px;-webkit-text-stroke:0.35px currentColor;">Scadenza per. in corso</div>
<div class="t" style="left:493.73px;top:325.63px;font-size:22px;line-height:29px;color:#555555;letter-spacing:0.616px;-webkit-text-stroke:0.35px currentColor;">dal</div>
<div class="a" style="left:562.50px;top:325.75px;width:157.50px;height:30.50px;background:#ffffc1;border:1px solid #a6a6a6;box-sizing:border-box;"></div>
<div class="t" style="left:705.42px;top:325.63px;font-size:22px;line-height:29px;color:#000;-webkit-text-stroke:0.35px currentColor;">0</div>
<div class="t" style="left:756.02px;top:325.63px;font-size:22px;line-height:29px;color:#555555;letter-spacing:0.616px;-webkit-text-stroke:0.35px currentColor;">al</div>
<div class="a" style="left:806.30px;top:325.75px;width:157.50px;height:30.50px;background:#ffffc1;border:1px solid #a6a6a6;box-sizing:border-box;"></div>
<div class="t" style="left:850.17px;top:325.63px;font-size:22px;line-height:29px;color:#000;letter-spacing:0.174px;-webkit-text-stroke:0.35px currentColor;">99.99.9999</div>
<div class="t" style="left:44.20px;top:359.38px;font-size:22px;line-height:29px;color:#555555;letter-spacing:0.144px;-webkit-text-stroke:0.35px currentColor;">Scadenza contratto</div>
<div class="t" style="left:493.73px;top:359.38px;font-size:22px;line-height:29px;color:#555555;letter-spacing:0.616px;-webkit-text-stroke:0.35px currentColor;">dal</div>
<div class="a" style="left:562.50px;top:359.50px;width:157.50px;height:30.50px;background:#ffffc1;border:1px solid #a6a6a6;box-sizing:border-box;"></div>
<div class="t" style="left:705.42px;top:359.38px;font-size:22px;line-height:29px;color:#000;-webkit-text-stroke:0.35px currentColor;">0</div>
<div class="t" style="left:756.02px;top:359.38px;font-size:22px;line-height:29px;color:#555555;letter-spacing:0.616px;-webkit-text-stroke:0.35px currentColor;">al</div>
<div class="a" style="left:806.30px;top:359.50px;width:157.50px;height:30.50px;background:#ffffc1;border:1px solid #a6a6a6;box-sizing:border-box;"></div>
<div class="t" style="left:850.17px;top:359.38px;font-size:22px;line-height:29px;color:#000;letter-spacing:0.174px;-webkit-text-stroke:0.35px currentColor;">99.99.9999</div>
<div class="t" style="left:43.40px;top:393.13px;font-size:22px;line-height:29px;color:#555555;letter-spacing:0.100px;-webkit-text-stroke:0.35px currentColor;">Disdetta</div>
<div class="t" style="left:493.73px;top:393.13px;font-size:22px;line-height:29px;color:#555555;letter-spacing:0.616px;-webkit-text-stroke:0.35px currentColor;">dal</div>
<div class="a" style="left:562.50px;top:393.25px;width:157.50px;height:30.50px;background:#ffffc1;border:1px solid #a6a6a6;box-sizing:border-box;"></div>
<div class="t" style="left:705.42px;top:393.13px;font-size:22px;line-height:29px;color:#000;-webkit-text-stroke:0.35px currentColor;">0</div>
<div class="t" style="left:756.02px;top:393.13px;font-size:22px;line-height:29px;color:#555555;letter-spacing:0.616px;-webkit-text-stroke:0.35px currentColor;">al</div>
<div class="a" style="left:806.30px;top:393.25px;width:157.50px;height:30.50px;background:#ffffc1;border:1px solid #a6a6a6;box-sizing:border-box;"></div>
<div class="t" style="left:850.17px;top:393.13px;font-size:22px;line-height:29px;color:#000;letter-spacing:0.174px;-webkit-text-stroke:0.35px currentColor;">99.99.9999</div>
<div class="t" style="left:43.40px;top:426.88px;font-size:22px;line-height:29px;color:#555555;letter-spacing:0.183px;-webkit-text-stroke:0.35px currentColor;">Mese rif. attivaz./disattiv. beneficiari</div>
<div class="a" style="left:562.50px;top:427.00px;width:44.80px;height:30.50px;background:#ffffc1;border:1px solid #a6a6a6;box-sizing:border-box;"></div>
<div class="t" style="left:592.99px;top:426.88px;font-size:22px;line-height:29px;color:#000;-webkit-text-stroke:0.35px currentColor;">5</div>
<div class="t" style="left:619.40px;top:426.88px;font-size:22px;line-height:29px;color:#555555;letter-spacing:0.335px;-webkit-text-stroke:0.35px currentColor;">Maggio</div>
<svg class="a" style="left:1490.00px;top:430.70px;" width="22.5" height="22" viewBox="0 0 22.5 22"><rect width="22.5" height="22" fill="#6ab150"/><path d="M4 12.5l4.2 5L18.5 4.5" stroke="#e9f5e4" stroke-width="1.6" fill="none"/></svg>
<svg class="a" style="left:1584.70px;top:430.30px;" width="21.5" height="22" viewBox="0 0 21.5 22"><rect width="21.5" height="22" fill="#fff"/><path d="M13.5 4.2V2.2H3.6a1 1 0 0 0-1 1v15.6a1 1 0 0 0 1 1h9.9v-2" stroke="#4a4a4e" stroke-width="2.2" fill="none"/><path d="M8.5 8.6h5V5.2l6.3 5.8-6.3 5.8v-3.4h-5z" fill="#ffe81a" stroke="#c9a800" stroke-width="1"/></svg>
<div class="t" style="left:1488.08px;top:459.78px;font-size:22px;line-height:29px;color:#626262;-webkit-text-stroke:0.35px currentColor;">Convalida</div>
<div class="a" style="left:1687.40px;top:460.30px;width:26.80px;height:31.50px;background:#ffffc1;border:1.5px solid #1a1a1a;box-sizing:border-box;"></div>
<div class="a" style="left:1689.00px;top:462.00px;width:5.60px;height:26.50px;background:#0a74d8;"></div>
<div class="a" style="left:1694.60px;top:462.00px;width:1.20px;height:26.50px;background:#f59a4a;"></div>
<div class="a" style="left:0.00px;top:494.00px;width:1920.00px;height:2.00px;background:#8a8a8a;"></div>
<div class="a" style="left:0.00px;top:496.00px;width:1920.00px;height:1.60px;background:#9c9c9c;"></div>
<div class="a" style="left:2.50px;top:497.60px;width:1893.50px;height:224.40px;background:#a0a0a0;"></div>
<div class="a" style="left:5.00px;top:498.00px;width:18.00px;height:27.00px;background:#f0f0f0;"></div>
<div class="a" style="left:5.00px;top:498.00px;width:1.00px;height:27.00px;background:#ffffff;"></div>
<div class="a" style="left:5.00px;top:498.00px;width:18.00px;height:1.00px;background:#ffffff;"></div>
<div class="a" style="left:22.00px;top:498.00px;width:1.00px;height:27.00px;background:#858585;"></div>
<div class="a" style="left:5.00px;top:524.00px;width:18.00px;height:1.00px;background:#7e7e7e;"></div>
<div class="a" style="left:23.00px;top:498.00px;width:29.00px;height:27.00px;background:#f0f0f0;"></div>
<div class="a" style="left:23.00px;top:498.00px;width:1.00px;height:27.00px;background:#ffffff;"></div>
<div class="a" style="left:23.00px;top:498.00px;width:29.00px;height:1.00px;background:#ffffff;"></div>
<div class="a" style="left:51.00px;top:498.00px;width:1.00px;height:27.00px;background:#8e8e8e;"></div>
<div class="a" style="left:23.00px;top:523.00px;width:29.00px;height:1.00px;background:#8a8a8a;"></div>
<div class="a" style="left:23.00px;top:524.00px;width:29.00px;height:1.00px;background:#767676;"></div>
<div class="a" style="left:24.40px;top:498.60px;width:20.20px;height:19.40px;background:#ffffff;"></div>
<div class="a" style="left:24.40px;top:498.60px;width:20.20px;height:1.60px;background:#8c8c8c;"></div>
<div class="a" style="left:24.40px;top:498.60px;width:1.60px;height:19.40px;background:#8c8c8c;"></div>
<div class="a" style="left:42.80px;top:500.20px;width:1.80px;height:17.80px;background:#ececec;"></div>
<div class="a" style="left:26.00px;top:516.40px;width:18.60px;height:1.60px;background:#ececec;"></div>
<svg class="a" style="left:24.40px;top:498.60px;" width="21" height="20" viewBox="0 0 21 20"><path d="M4.2 9.8l2.9 3.6 7.2-8.9" stroke="#000" stroke-width="2.6" fill="none" stroke-linejoin="miter"/></svg>
<div class="a" style="left:52.00px;top:498.00px;width:72.00px;height:27.00px;background:#f0f0f0;"></div>
<div class="a" style="left:52.00px;top:498.00px;width:1.00px;height:27.00px;background:#ffffff;"></div>
<div class="a" style="left:52.00px;top:498.00px;width:72.00px;height:1.00px;background:#ffffff;"></div>
<div class="a" style="left:123.00px;top:498.00px;width:1.00px;height:27.00px;background:#8e8e8e;"></div>
<div class="a" style="left:52.00px;top:523.00px;width:72.00px;height:1.00px;background:#8a8a8a;"></div>
<div class="a" style="left:52.00px;top:524.00px;width:72.00px;height:1.00px;background:#767676;"></div>
<div class="t" style="left:57.69px;top:502.40px;font-size:15px;line-height:20px;color:#000;letter-spacing:0.037px;">Contratto</div>
<div class="a" style="left:124.00px;top:498.00px;width:133.00px;height:27.00px;background:#f0f0f0;"></div>
<div class="a" style="left:124.00px;top:498.00px;width:1.00px;height:27.00px;background:#ffffff;"></div>
<div class="a" style="left:124.00px;top:498.00px;width:133.00px;height:1.00px;background:#ffffff;"></div>
<div class="a" style="left:256.00px;top:498.00px;width:1.00px;height:27.00px;background:#8e8e8e;"></div>
<div class="a" style="left:124.00px;top:523.00px;width:133.00px;height:1.00px;background:#8a8a8a;"></div>
<div class="a" style="left:124.00px;top:524.00px;width:133.00px;height:1.00px;background:#767676;"></div>
<div class="t" style="left:129.22px;top:502.40px;font-size:15px;line-height:20px;color:#000;letter-spacing:0.416px;">Riferimenti</div>
<div class="a" style="left:257.00px;top:498.00px;width:20.00px;height:27.00px;background:#f0f0f0;"></div>
<div class="a" style="left:257.00px;top:498.00px;width:1.00px;height:27.00px;background:#ffffff;"></div>
<div class="a" style="left:257.00px;top:498.00px;width:20.00px;height:1.00px;background:#ffffff;"></div>
<div class="a" style="left:276.00px;top:498.00px;width:1.00px;height:27.00px;background:#8e8e8e;"></div>
<div class="a" style="left:257.00px;top:523.00px;width:20.00px;height:1.00px;background:#8a8a8a;"></div>
<div class="a" style="left:257.00px;top:524.00px;width:20.00px;height:1.00px;background:#767676;"></div>
<div class="t" style="left:262.27px;top:502.40px;font-size:15px;line-height:20px;color:#000;">S</div>
<div class="a" style="left:277.00px;top:498.00px;width:31.00px;height:27.00px;background:#f0f0f0;"></div>
<div class="a" style="left:277.00px;top:498.00px;width:1.00px;height:27.00px;background:#ffffff;"></div>
<div class="a" style="left:277.00px;top:498.00px;width:31.00px;height:1.00px;background:#ffffff;"></div>
<div class="a" style="left:307.00px;top:498.00px;width:1.00px;height:27.00px;background:#8e8e8e;"></div>
<div class="a" style="left:277.00px;top:523.00px;width:31.00px;height:1.00px;background:#8a8a8a;"></div>
<div class="a" style="left:277.00px;top:524.00px;width:31.00px;height:1.00px;background:#767676;"></div>
<div class="t" style="left:281.62px;top:502.40px;font-size:15px;line-height:20px;color:#000;letter-spacing:-0.420px;">MB</div>
<div class="a" style="left:308.00px;top:498.00px;width:86.00px;height:27.00px;background:#f0f0f0;"></div>
<div class="a" style="left:308.00px;top:498.00px;width:1.00px;height:27.00px;background:#ffffff;"></div>
<div class="a" style="left:308.00px;top:498.00px;width:86.00px;height:1.00px;background:#ffffff;"></div>
<div class="a" style="left:393.00px;top:498.00px;width:1.00px;height:27.00px;background:#8e8e8e;"></div>
<div class="a" style="left:308.00px;top:523.00px;width:86.00px;height:1.00px;background:#8a8a8a;"></div>
<div class="a" style="left:308.00px;top:524.00px;width:86.00px;height:1.00px;background:#767676;"></div>
<div class="t" style="left:312.82px;top:502.40px;font-size:15px;line-height:20px;color:#000;letter-spacing:0.241px;">Intestatario</div>
<div class="a" style="left:394.00px;top:498.00px;width:219.00px;height:27.00px;background:#f0f0f0;"></div>
<div class="a" style="left:394.00px;top:498.00px;width:1.00px;height:27.00px;background:#ffffff;"></div>
<div class="a" style="left:394.00px;top:498.00px;width:219.00px;height:1.00px;background:#ffffff;"></div>
<div class="a" style="left:612.00px;top:498.00px;width:1.00px;height:27.00px;background:#8e8e8e;"></div>
<div class="a" style="left:394.00px;top:523.00px;width:219.00px;height:1.00px;background:#8a8a8a;"></div>
<div class="a" style="left:394.00px;top:524.00px;width:219.00px;height:1.00px;background:#767676;"></div>
<div class="t" style="left:399.22px;top:502.40px;font-size:15px;line-height:20px;color:#000;letter-spacing:0.439px;">Denominazione</div>
<div class="a" style="left:613.00px;top:498.00px;width:124.00px;height:27.00px;background:#f0f0f0;"></div>
<div class="a" style="left:613.00px;top:498.00px;width:1.00px;height:27.00px;background:#ffffff;"></div>
<div class="a" style="left:613.00px;top:498.00px;width:124.00px;height:1.00px;background:#ffffff;"></div>
<div class="a" style="left:736.00px;top:498.00px;width:1.00px;height:27.00px;background:#8e8e8e;"></div>
<div class="a" style="left:613.00px;top:523.00px;width:124.00px;height:1.00px;background:#8a8a8a;"></div>
<div class="a" style="left:613.00px;top:524.00px;width:124.00px;height:1.00px;background:#767676;"></div>
<div class="t" style="left:618.44px;top:502.40px;font-size:15px;line-height:20px;color:#000;letter-spacing:-0.058px;">Città</div>
<div class="a" style="left:737.00px;top:498.00px;width:31.00px;height:27.00px;background:#f0f0f0;"></div>
<div class="a" style="left:737.00px;top:498.00px;width:1.00px;height:27.00px;background:#ffffff;"></div>
<div class="a" style="left:737.00px;top:498.00px;width:31.00px;height:1.00px;background:#ffffff;"></div>
<div class="a" style="left:767.00px;top:498.00px;width:1.00px;height:27.00px;background:#8e8e8e;"></div>
<div class="a" style="left:737.00px;top:523.00px;width:31.00px;height:1.00px;background:#8a8a8a;"></div>
<div class="a" style="left:737.00px;top:524.00px;width:31.00px;height:1.00px;background:#767676;"></div>
<div class="t" style="left:742.23px;top:502.40px;font-size:15px;line-height:20px;color:#000;letter-spacing:0.420px;">PR</div>
<div class="a" style="left:768.00px;top:498.00px;width:60.00px;height:27.00px;background:#f0f0f0;"></div>
<div class="a" style="left:768.00px;top:498.00px;width:1.00px;height:27.00px;background:#ffffff;"></div>
<div class="a" style="left:768.00px;top:498.00px;width:60.00px;height:1.00px;background:#ffffff;"></div>
<div class="a" style="left:827.00px;top:498.00px;width:1.00px;height:27.00px;background:#8e8e8e;"></div>
<div class="a" style="left:768.00px;top:523.00px;width:60.00px;height:1.00px;background:#8a8a8a;"></div>
<div class="a" style="left:768.00px;top:524.00px;width:60.00px;height:1.00px;background:#767676;"></div>
<div class="t" style="left:772.97px;top:502.40px;font-size:15px;line-height:20px;color:#000;letter-spacing:-0.358px;">BenAttv</div>
<div class="a" style="left:828.00px;top:498.00px;width:61.00px;height:27.00px;background:#f0f0f0;"></div>
<div class="a" style="left:828.00px;top:498.00px;width:1.00px;height:27.00px;background:#ffffff;"></div>
<div class="a" style="left:828.00px;top:498.00px;width:61.00px;height:1.00px;background:#ffffff;"></div>
<div class="a" style="left:888.00px;top:498.00px;width:1.00px;height:27.00px;background:#8e8e8e;"></div>
<div class="a" style="left:828.00px;top:523.00px;width:61.00px;height:1.00px;background:#8a8a8a;"></div>
<div class="a" style="left:828.00px;top:524.00px;width:61.00px;height:1.00px;background:#767676;"></div>
<div class="t" style="left:833.72px;top:502.40px;font-size:15px;line-height:20px;color:#000;letter-spacing:0.354px;">BenDis</div>
<div class="a" style="left:5.00px;top:525.00px;width:18.00px;height:28.00px;background:#f0f0f0;"></div>
<div class="a" style="left:5.00px;top:525.00px;width:1.00px;height:28.00px;background:#ffffff;"></div>
<div class="a" style="left:5.00px;top:525.00px;width:18.00px;height:1.00px;background:#ffffff;"></div>
<div class="a" style="left:22.00px;top:525.00px;width:1.00px;height:28.00px;background:#858585;"></div>
<div class="a" style="left:5.00px;top:552.00px;width:18.00px;height:1.00px;background:#7e7e7e;"></div>
<div class="t" style="left:11.46px;top:529.90px;font-size:15px;line-height:20px;color:#000;">2</div>
<div class="a" style="left:23.00px;top:525.00px;width:29.00px;height:28.00px;background:#ffffc1;"></div>
<div class="a" style="left:51.00px;top:525.00px;width:1.00px;height:28.00px;background:#c4c4c4;"></div>
<div class="a" style="left:23.00px;top:552.00px;width:29.00px;height:1.00px;background:#c4c4c4;"></div>
<div class="a" style="left:24.40px;top:526.50px;width:20.20px;height:19.40px;background:#ffffff;"></div>
<div class="a" style="left:24.40px;top:526.50px;width:20.20px;height:1.60px;background:#8c8c8c;"></div>
<div class="a" style="left:24.40px;top:526.50px;width:1.60px;height:19.40px;background:#8c8c8c;"></div>
<div class="a" style="left:42.80px;top:528.10px;width:1.80px;height:17.80px;background:#ececec;"></div>
<div class="a" style="left:26.00px;top:544.30px;width:18.60px;height:1.60px;background:#ececec;"></div>
<svg class="a" style="left:24.40px;top:526.50px;" width="21" height="20" viewBox="0 0 21 20"><path d="M4.2 9.8l2.9 3.6 7.2-8.9" stroke="#000" stroke-width="2.6" fill="none" stroke-linejoin="miter"/></svg>
<div class="a" style="left:52.00px;top:525.00px;width:72.00px;height:28.00px;background:#ffffff;"></div>
<div class="a" style="left:123.00px;top:525.00px;width:1.00px;height:28.00px;background:#c4c4c4;"></div>
<div class="a" style="left:52.00px;top:552.00px;width:72.00px;height:1.00px;background:#c4c4c4;"></div>
<div class="t" style="left:114.26px;top:529.90px;font-size:15px;line-height:20px;color:#000;">2</div>
<div class="a" style="left:124.00px;top:525.00px;width:133.00px;height:28.00px;background:#ffffff;"></div>
<div class="a" style="left:256.00px;top:525.00px;width:1.00px;height:28.00px;background:#c4c4c4;"></div>
<div class="a" style="left:124.00px;top:552.00px;width:133.00px;height:1.00px;background:#c4c4c4;"></div>
<div class="a" style="left:257.00px;top:525.00px;width:20.00px;height:28.00px;background:#ffffff;"></div>
<div class="a" style="left:276.00px;top:525.00px;width:1.00px;height:28.00px;background:#c4c4c4;"></div>
<div class="a" style="left:257.00px;top:552.00px;width:20.00px;height:1.00px;background:#c4c4c4;"></div>
<div class="t" style="left:261.67px;top:529.90px;font-size:15px;line-height:20px;color:#000;">A</div>
<div class="a" style="left:277.00px;top:525.00px;width:31.00px;height:28.00px;background:#ffffff;"></div>
<div class="a" style="left:307.00px;top:525.00px;width:1.00px;height:28.00px;background:#c4c4c4;"></div>
<div class="a" style="left:277.00px;top:552.00px;width:31.00px;height:1.00px;background:#c4c4c4;"></div>
<div class="a" style="left:277.60px;top:526.50px;width:20.20px;height:19.40px;background:#ffffff;"></div>
<div class="a" style="left:277.60px;top:526.50px;width:20.20px;height:1.60px;background:#8c8c8c;"></div>
<div class="a" style="left:277.60px;top:526.50px;width:1.60px;height:19.40px;background:#8c8c8c;"></div>
<div class="a" style="left:296.00px;top:528.10px;width:1.80px;height:17.80px;background:#ececec;"></div>
<div class="a" style="left:279.20px;top:544.30px;width:18.60px;height:1.60px;background:#ececec;"></div>
<div class="a" style="left:308.00px;top:525.00px;width:86.00px;height:28.00px;background:#ffffff;"></div>
<div class="a" style="left:393.00px;top:525.00px;width:1.00px;height:28.00px;background:#c4c4c4;"></div>
<div class="a" style="left:308.00px;top:552.00px;width:86.00px;height:1.00px;background:#c4c4c4;"></div>
<div class="t" style="left:353.92px;top:529.90px;font-size:15px;line-height:20px;color:#000;">31,08</div>
<div class="a" style="left:394.00px;top:525.00px;width:219.00px;height:28.00px;background:#ffffff;"></div>
<div class="a" style="left:612.00px;top:525.00px;width:1.00px;height:28.00px;background:#c4c4c4;"></div>
<div class="a" style="left:394.00px;top:552.00px;width:219.00px;height:1.00px;background:#c4c4c4;"></div>
<div class="t" style="left:399.17px;top:529.90px;font-size:15px;line-height:20px;color:#000;letter-spacing:-0.169px;">A.S.L. LECCE LE/1</div>
<div class="a" style="left:613.00px;top:525.00px;width:124.00px;height:28.00px;background:#ffffff;"></div>
<div class="a" style="left:736.00px;top:525.00px;width:1.00px;height:28.00px;background:#c4c4c4;"></div>
<div class="a" style="left:613.00px;top:552.00px;width:124.00px;height:1.00px;background:#c4c4c4;"></div>
<div class="t" style="left:616.72px;top:529.90px;font-size:15px;line-height:20px;color:#000;letter-spacing:0.552px;">LECCE</div>
<div class="a" style="left:737.00px;top:525.00px;width:31.00px;height:28.00px;background:#ffffff;"></div>
<div class="a" style="left:767.00px;top:525.00px;width:1.00px;height:28.00px;background:#c4c4c4;"></div>
<div class="a" style="left:737.00px;top:552.00px;width:31.00px;height:1.00px;background:#c4c4c4;"></div>
<div class="t" style="left:740.70px;top:529.90px;font-size:15px;line-height:20px;color:#000;letter-spacing:0.420px;">LE</div>
<div class="a" style="left:768.00px;top:525.00px;width:60.00px;height:28.00px;background:#ccffcc;"></div>
<div class="a" style="left:827.00px;top:525.00px;width:1.00px;height:28.00px;background:#c4c4c4;"></div>
<div class="a" style="left:768.00px;top:552.00px;width:60.00px;height:1.00px;background:#c4c4c4;"></div>
<div class="t" style="left:816.79px;top:529.90px;font-size:15px;line-height:20px;color:#000;">0</div>
<div class="a" style="left:828.00px;top:525.00px;width:61.00px;height:28.00px;background:#ffffff;"></div>
<div class="a" style="left:888.00px;top:525.00px;width:1.00px;height:28.00px;background:#c4c4c4;"></div>
<div class="a" style="left:828.00px;top:552.00px;width:61.00px;height:1.00px;background:#c4c4c4;"></div>
<div class="t" style="left:878.04px;top:529.90px;font-size:15px;line-height:20px;color:#ff0000;">0</div>
<div class="a" style="left:5.00px;top:553.00px;width:18.00px;height:27.00px;background:#f0f0f0;"></div>
<div class="a" style="left:5.00px;top:553.00px;width:1.00px;height:27.00px;background:#ffffff;"></div>
<div class="a" style="left:5.00px;top:553.00px;width:18.00px;height:1.00px;background:#ffffff;"></div>
<div class="a" style="left:22.00px;top:553.00px;width:1.00px;height:27.00px;background:#858585;"></div>
<div class="a" style="left:5.00px;top:579.00px;width:18.00px;height:1.00px;background:#7e7e7e;"></div>
<div class="t" style="left:11.37px;top:557.35px;font-size:15px;line-height:20px;color:#000;">3</div>
<div class="a" style="left:23.00px;top:553.00px;width:29.00px;height:27.00px;background:#ffffc1;"></div>
<div class="a" style="left:51.00px;top:553.00px;width:1.00px;height:27.00px;background:#c4c4c4;"></div>
<div class="a" style="left:23.00px;top:579.00px;width:29.00px;height:1.00px;background:#c4c4c4;"></div>
<div class="a" style="left:24.40px;top:553.95px;width:20.20px;height:19.40px;background:#ffffff;"></div>
<div class="a" style="left:24.40px;top:553.95px;width:20.20px;height:1.60px;background:#8c8c8c;"></div>
<div class="a" style="left:24.40px;top:553.95px;width:1.60px;height:19.40px;background:#8c8c8c;"></div>
<div class="a" style="left:42.80px;top:555.55px;width:1.80px;height:17.80px;background:#ececec;"></div>
<div class="a" style="left:26.00px;top:571.75px;width:18.60px;height:1.60px;background:#ececec;"></div>
<svg class="a" style="left:24.40px;top:553.95px;" width="21" height="20" viewBox="0 0 21 20"><path d="M4.2 9.8l2.9 3.6 7.2-8.9" stroke="#000" stroke-width="2.6" fill="none" stroke-linejoin="miter"/></svg>
<div class="a" style="left:52.00px;top:553.00px;width:72.00px;height:27.00px;background:#ffffff;"></div>
<div class="a" style="left:123.00px;top:553.00px;width:1.00px;height:27.00px;background:#c4c4c4;"></div>
<div class="a" style="left:52.00px;top:579.00px;width:72.00px;height:1.00px;background:#c4c4c4;"></div>
<div class="t" style="left:114.17px;top:557.35px;font-size:15px;line-height:20px;color:#000;">3</div>
<div class="a" style="left:124.00px;top:553.00px;width:133.00px;height:27.00px;background:#ffffff;"></div>
<div class="a" style="left:256.00px;top:553.00px;width:1.00px;height:27.00px;background:#c4c4c4;"></div>
<div class="a" style="left:124.00px;top:579.00px;width:133.00px;height:1.00px;background:#c4c4c4;"></div>
<div class="a" style="left:257.00px;top:553.00px;width:20.00px;height:27.00px;background:#ffffff;"></div>
<div class="a" style="left:276.00px;top:553.00px;width:1.00px;height:27.00px;background:#c4c4c4;"></div>
<div class="a" style="left:257.00px;top:579.00px;width:20.00px;height:1.00px;background:#c4c4c4;"></div>
<div class="t" style="left:261.67px;top:557.35px;font-size:15px;line-height:20px;color:#000;">A</div>
<div class="a" style="left:277.00px;top:553.00px;width:31.00px;height:27.00px;background:#ffffff;"></div>
<div class="a" style="left:307.00px;top:553.00px;width:1.00px;height:27.00px;background:#c4c4c4;"></div>
<div class="a" style="left:277.00px;top:579.00px;width:31.00px;height:1.00px;background:#c4c4c4;"></div>
<div class="a" style="left:277.60px;top:553.95px;width:20.20px;height:19.40px;background:#ffffff;"></div>
<div class="a" style="left:277.60px;top:553.95px;width:20.20px;height:1.60px;background:#8c8c8c;"></div>
<div class="a" style="left:277.60px;top:553.95px;width:1.60px;height:19.40px;background:#8c8c8c;"></div>
<div class="a" style="left:296.00px;top:555.55px;width:1.80px;height:17.80px;background:#ececec;"></div>
<div class="a" style="left:279.20px;top:571.75px;width:18.60px;height:1.60px;background:#ececec;"></div>
<div class="a" style="left:308.00px;top:553.00px;width:86.00px;height:27.00px;background:#ffffff;"></div>
<div class="a" style="left:393.00px;top:553.00px;width:1.00px;height:27.00px;background:#c4c4c4;"></div>
<div class="a" style="left:308.00px;top:579.00px;width:86.00px;height:1.00px;background:#c4c4c4;"></div>
<div class="t" style="left:353.92px;top:557.35px;font-size:15px;line-height:20px;color:#000;">32,08</div>
<div class="a" style="left:394.00px;top:553.00px;width:219.00px;height:27.00px;background:#ffffff;"></div>
<div class="a" style="left:612.00px;top:553.00px;width:1.00px;height:27.00px;background:#c4c4c4;"></div>
<div class="a" style="left:394.00px;top:579.00px;width:219.00px;height:1.00px;background:#c4c4c4;"></div>
<div class="t" style="left:398.49px;top:557.35px;font-size:15px;line-height:20px;color:#000;letter-spacing:-0.158px;">OSPEDALE DI VENERE - BARI</div>
<div class="a" style="left:613.00px;top:553.00px;width:124.00px;height:27.00px;background:#ffffff;"></div>
<div class="a" style="left:736.00px;top:553.00px;width:1.00px;height:27.00px;background:#c4c4c4;"></div>
<div class="a" style="left:613.00px;top:579.00px;width:124.00px;height:1.00px;background:#c4c4c4;"></div>
<div class="t" style="left:616.72px;top:557.35px;font-size:15px;line-height:20px;color:#000;letter-spacing:0.068px;">BARI</div>
<div class="a" style="left:737.00px;top:553.00px;width:31.00px;height:27.00px;background:#ffffff;"></div>
<div class="a" style="left:767.00px;top:553.00px;width:1.00px;height:27.00px;background:#c4c4c4;"></div>
<div class="a" style="left:737.00px;top:579.00px;width:31.00px;height:1.00px;background:#c4c4c4;"></div>
<div class="t" style="left:739.98px;top:557.35px;font-size:15px;line-height:20px;color:#000;letter-spacing:-0.420px;">BA</div>
<div class="a" style="left:768.00px;top:553.00px;width:60.00px;height:27.00px;background:#ccffcc;"></div>
<div class="a" style="left:827.00px;top:553.00px;width:1.00px;height:27.00px;background:#c4c4c4;"></div>
<div class="a" style="left:768.00px;top:579.00px;width:60.00px;height:1.00px;background:#c4c4c4;"></div>
<div class="t" style="left:816.79px;top:557.35px;font-size:15px;line-height:20px;color:#000;">0</div>
<div class="a" style="left:828.00px;top:553.00px;width:61.00px;height:27.00px;background:#ffffff;"></div>
<div class="a" style="left:888.00px;top:553.00px;width:1.00px;height:27.00px;background:#c4c4c4;"></div>
<div class="a" style="left:828.00px;top:579.00px;width:61.00px;height:1.00px;background:#c4c4c4;"></div>
<div class="t" style="left:878.04px;top:557.35px;font-size:15px;line-height:20px;color:#ff0000;">0</div>
<div class="a" style="left:5.00px;top:580.00px;width:18.00px;height:28.00px;background:#f0f0f0;"></div>
<div class="a" style="left:5.00px;top:580.00px;width:1.00px;height:28.00px;background:#ffffff;"></div>
<div class="a" style="left:5.00px;top:580.00px;width:18.00px;height:1.00px;background:#ffffff;"></div>
<div class="a" style="left:22.00px;top:580.00px;width:1.00px;height:28.00px;background:#858585;"></div>
<div class="a" style="left:5.00px;top:607.00px;width:18.00px;height:1.00px;background:#7e7e7e;"></div>
<div class="t" style="left:11.15px;top:584.80px;font-size:15px;line-height:20px;color:#000;">4</div>
<div class="a" style="left:23.00px;top:580.00px;width:29.00px;height:28.00px;background:#ffffc1;"></div>
<div class="a" style="left:51.00px;top:580.00px;width:1.00px;height:28.00px;background:#c4c4c4;"></div>
<div class="a" style="left:23.00px;top:607.00px;width:29.00px;height:1.00px;background:#c4c4c4;"></div>
<div class="a" style="left:24.40px;top:581.40px;width:20.20px;height:19.40px;background:#ffffff;"></div>
<div class="a" style="left:24.40px;top:581.40px;width:20.20px;height:1.60px;background:#8c8c8c;"></div>
<div class="a" style="left:24.40px;top:581.40px;width:1.60px;height:19.40px;background:#8c8c8c;"></div>
<div class="a" style="left:42.80px;top:583.00px;width:1.80px;height:17.80px;background:#ececec;"></div>
<div class="a" style="left:26.00px;top:599.20px;width:18.60px;height:1.60px;background:#ececec;"></div>
<svg class="a" style="left:24.40px;top:581.40px;" width="21" height="20" viewBox="0 0 21 20"><path d="M4.2 9.8l2.9 3.6 7.2-8.9" stroke="#000" stroke-width="2.6" fill="none" stroke-linejoin="miter"/></svg>
<div class="a" style="left:52.00px;top:580.00px;width:72.00px;height:28.00px;background:#ffffff;"></div>
<div class="a" style="left:123.00px;top:580.00px;width:1.00px;height:28.00px;background:#c4c4c4;"></div>
<div class="a" style="left:52.00px;top:607.00px;width:72.00px;height:1.00px;background:#c4c4c4;"></div>
<div class="t" style="left:113.95px;top:584.80px;font-size:15px;line-height:20px;color:#000;">4</div>
<div class="a" style="left:124.00px;top:580.00px;width:133.00px;height:28.00px;background:#ffffff;"></div>
<div class="a" style="left:256.00px;top:580.00px;width:1.00px;height:28.00px;background:#c4c4c4;"></div>
<div class="a" style="left:124.00px;top:607.00px;width:133.00px;height:1.00px;background:#c4c4c4;"></div>
<div class="a" style="left:257.00px;top:580.00px;width:20.00px;height:28.00px;background:#ffffff;"></div>
<div class="a" style="left:276.00px;top:580.00px;width:1.00px;height:28.00px;background:#c4c4c4;"></div>
<div class="a" style="left:257.00px;top:607.00px;width:20.00px;height:1.00px;background:#c4c4c4;"></div>
<div class="t" style="left:261.67px;top:584.80px;font-size:15px;line-height:20px;color:#000;">A</div>
<div class="a" style="left:277.00px;top:580.00px;width:31.00px;height:28.00px;background:#ffffff;"></div>
<div class="a" style="left:307.00px;top:580.00px;width:1.00px;height:28.00px;background:#c4c4c4;"></div>
<div class="a" style="left:277.00px;top:607.00px;width:31.00px;height:1.00px;background:#c4c4c4;"></div>
<div class="a" style="left:277.60px;top:581.40px;width:20.20px;height:19.40px;background:#ffffff;"></div>
<div class="a" style="left:277.60px;top:581.40px;width:20.20px;height:1.60px;background:#8c8c8c;"></div>
<div class="a" style="left:277.60px;top:581.40px;width:1.60px;height:19.40px;background:#8c8c8c;"></div>
<div class="a" style="left:296.00px;top:583.00px;width:1.80px;height:17.80px;background:#ececec;"></div>
<div class="a" style="left:279.20px;top:599.20px;width:18.60px;height:1.60px;background:#ececec;"></div>
<div class="a" style="left:308.00px;top:580.00px;width:86.00px;height:28.00px;background:#ffffff;"></div>
<div class="a" style="left:393.00px;top:580.00px;width:1.00px;height:28.00px;background:#c4c4c4;"></div>
<div class="a" style="left:308.00px;top:607.00px;width:86.00px;height:1.00px;background:#c4c4c4;"></div>
<div class="t" style="left:353.92px;top:584.80px;font-size:15px;line-height:20px;color:#000;">30,08</div>
<div class="a" style="left:394.00px;top:580.00px;width:219.00px;height:28.00px;background:#ffffff;"></div>
<div class="a" style="left:612.00px;top:580.00px;width:1.00px;height:28.00px;background:#c4c4c4;"></div>
<div class="a" style="left:394.00px;top:607.00px;width:219.00px;height:1.00px;background:#c4c4c4;"></div>
<div class="t" style="left:399.17px;top:584.80px;font-size:15px;line-height:20px;color:#000;letter-spacing:-0.402px;">A.S.L. BARI</div>
<div class="a" style="left:613.00px;top:580.00px;width:124.00px;height:28.00px;background:#ffffff;"></div>
<div class="a" style="left:736.00px;top:580.00px;width:1.00px;height:28.00px;background:#c4c4c4;"></div>
<div class="a" style="left:613.00px;top:607.00px;width:124.00px;height:1.00px;background:#c4c4c4;"></div>
<div class="t" style="left:616.72px;top:584.80px;font-size:15px;line-height:20px;color:#000;letter-spacing:0.068px;">BARI</div>
<div class="a" style="left:737.00px;top:580.00px;width:31.00px;height:28.00px;background:#ffffff;"></div>
<div class="a" style="left:767.00px;top:580.00px;width:1.00px;height:28.00px;background:#c4c4c4;"></div>
<div class="a" style="left:737.00px;top:607.00px;width:31.00px;height:1.00px;background:#c4c4c4;"></div>
<div class="t" style="left:739.98px;top:584.80px;font-size:15px;line-height:20px;color:#000;letter-spacing:-0.420px;">BA</div>
<div class="a" style="left:768.00px;top:580.00px;width:60.00px;height:28.00px;background:#ccffcc;"></div>
<div class="a" style="left:827.00px;top:580.00px;width:1.00px;height:28.00px;background:#c4c4c4;"></div>
<div class="a" style="left:768.00px;top:607.00px;width:60.00px;height:1.00px;background:#c4c4c4;"></div>
<div class="t" style="left:816.79px;top:584.80px;font-size:15px;line-height:20px;color:#000;">0</div>
<div class="a" style="left:828.00px;top:580.00px;width:61.00px;height:28.00px;background:#ffffff;"></div>
<div class="a" style="left:888.00px;top:580.00px;width:1.00px;height:28.00px;background:#c4c4c4;"></div>
<div class="a" style="left:828.00px;top:607.00px;width:61.00px;height:1.00px;background:#c4c4c4;"></div>
<div class="t" style="left:878.04px;top:584.80px;font-size:15px;line-height:20px;color:#ff0000;">0</div>
<div class="a" style="left:5.00px;top:608.00px;width:18.00px;height:27.00px;background:#f0f0f0;"></div>
<div class="a" style="left:5.00px;top:608.00px;width:1.00px;height:27.00px;background:#ffffff;"></div>
<div class="a" style="left:5.00px;top:608.00px;width:18.00px;height:1.00px;background:#ffffff;"></div>
<div class="a" style="left:22.00px;top:608.00px;width:1.00px;height:27.00px;background:#858585;"></div>
<div class="a" style="left:5.00px;top:634.00px;width:18.00px;height:1.00px;background:#7e7e7e;"></div>
<div class="t" style="left:11.34px;top:612.25px;font-size:15px;line-height:20px;color:#000;">5</div>
<div class="a" style="left:23.00px;top:608.00px;width:29.00px;height:27.00px;background:#ffffc1;"></div>
<div class="a" style="left:51.00px;top:608.00px;width:1.00px;height:27.00px;background:#c4c4c4;"></div>
<div class="a" style="left:23.00px;top:634.00px;width:29.00px;height:1.00px;background:#c4c4c4;"></div>
<div class="a" style="left:24.40px;top:608.85px;width:20.20px;height:19.40px;background:#ffffff;"></div>
<div class="a" style="left:24.40px;top:608.85px;width:20.20px;height:1.60px;background:#8c8c8c;"></div>
<div class="a" style="left:24.40px;top:608.85px;width:1.60px;height:19.40px;background:#8c8c8c;"></div>
<div class="a" style="left:42.80px;top:610.45px;width:1.80px;height:17.80px;background:#ececec;"></div>
<div class="a" style="left:26.00px;top:626.65px;width:18.60px;height:1.60px;background:#ececec;"></div>
<svg class="a" style="left:24.40px;top:608.85px;" width="21" height="20" viewBox="0 0 21 20"><path d="M4.2 9.8l2.9 3.6 7.2-8.9" stroke="#000" stroke-width="2.6" fill="none" stroke-linejoin="miter"/></svg>
<div class="a" style="left:52.00px;top:608.00px;width:72.00px;height:27.00px;background:#ffffff;"></div>
<div class="a" style="left:123.00px;top:608.00px;width:1.00px;height:27.00px;background:#c4c4c4;"></div>
<div class="a" style="left:52.00px;top:634.00px;width:72.00px;height:1.00px;background:#c4c4c4;"></div>
<div class="t" style="left:114.14px;top:612.25px;font-size:15px;line-height:20px;color:#000;">5</div>
<div class="a" style="left:124.00px;top:608.00px;width:133.00px;height:27.00px;background:#ffffff;"></div>
<div class="a" style="left:256.00px;top:608.00px;width:1.00px;height:27.00px;background:#c4c4c4;"></div>
<div class="a" style="left:124.00px;top:634.00px;width:133.00px;height:1.00px;background:#c4c4c4;"></div>
<div class="t" style="left:129.13px;top:612.25px;font-size:15px;line-height:20px;color:#000;letter-spacing:-0.745px;">VP NON INVASIVA</div>
<div class="a" style="left:257.00px;top:608.00px;width:20.00px;height:27.00px;background:#ffffff;"></div>
<div class="a" style="left:276.00px;top:608.00px;width:1.00px;height:27.00px;background:#c4c4c4;"></div>
<div class="a" style="left:257.00px;top:634.00px;width:20.00px;height:1.00px;background:#c4c4c4;"></div>
<div class="t" style="left:261.67px;top:612.25px;font-size:15px;line-height:20px;color:#000;">A</div>
<div class="a" style="left:277.00px;top:608.00px;width:31.00px;height:27.00px;background:#ffffff;"></div>
<div class="a" style="left:307.00px;top:608.00px;width:1.00px;height:27.00px;background:#c4c4c4;"></div>
<div class="a" style="left:277.00px;top:634.00px;width:31.00px;height:1.00px;background:#c4c4c4;"></div>
<div class="a" style="left:277.60px;top:608.85px;width:20.20px;height:19.40px;background:#ffffff;"></div>
<div class="a" style="left:277.60px;top:608.85px;width:20.20px;height:1.60px;background:#8c8c8c;"></div>
<div class="a" style="left:277.60px;top:608.85px;width:1.60px;height:19.40px;background:#8c8c8c;"></div>
<div class="a" style="left:296.00px;top:610.45px;width:1.80px;height:17.80px;background:#ececec;"></div>
<div class="a" style="left:279.20px;top:626.65px;width:18.60px;height:1.60px;background:#ececec;"></div>
<svg class="a" style="left:277.60px;top:608.85px;" width="21" height="20" viewBox="0 0 21 20"><path d="M4.2 9.8l2.9 3.6 7.2-8.9" stroke="#000" stroke-width="2.6" fill="none" stroke-linejoin="miter"/></svg>
<div class="a" style="left:308.00px;top:608.00px;width:86.00px;height:27.00px;background:#ffffff;"></div>
<div class="a" style="left:393.00px;top:608.00px;width:1.00px;height:27.00px;background:#c4c4c4;"></div>
<div class="a" style="left:308.00px;top:634.00px;width:86.00px;height:1.00px;background:#c4c4c4;"></div>
<div class="t" style="left:353.92px;top:612.25px;font-size:15px;line-height:20px;color:#000;">30,08</div>
<div class="a" style="left:394.00px;top:608.00px;width:219.00px;height:27.00px;background:#ffffff;"></div>
<div class="a" style="left:612.00px;top:608.00px;width:1.00px;height:27.00px;background:#c4c4c4;"></div>
<div class="a" style="left:394.00px;top:634.00px;width:219.00px;height:1.00px;background:#c4c4c4;"></div>
<div class="t" style="left:399.17px;top:612.25px;font-size:15px;line-height:20px;color:#000;letter-spacing:-0.402px;">A.S.L. BARI</div>
<div class="a" style="left:613.00px;top:608.00px;width:124.00px;height:27.00px;background:#ffffff;"></div>
<div class="a" style="left:736.00px;top:608.00px;width:1.00px;height:27.00px;background:#c4c4c4;"></div>
<div class="a" style="left:613.00px;top:634.00px;width:124.00px;height:1.00px;background:#c4c4c4;"></div>
<div class="t" style="left:616.72px;top:612.25px;font-size:15px;line-height:20px;color:#000;letter-spacing:0.068px;">BARI</div>
<div class="a" style="left:737.00px;top:608.00px;width:31.00px;height:27.00px;background:#ffffff;"></div>
<div class="a" style="left:767.00px;top:608.00px;width:1.00px;height:27.00px;background:#c4c4c4;"></div>
<div class="a" style="left:737.00px;top:634.00px;width:31.00px;height:1.00px;background:#c4c4c4;"></div>
<div class="t" style="left:739.98px;top:612.25px;font-size:15px;line-height:20px;color:#000;letter-spacing:-0.420px;">BA</div>
<div class="a" style="left:768.00px;top:608.00px;width:60.00px;height:27.00px;background:#ccffcc;"></div>
<div class="a" style="left:827.00px;top:608.00px;width:1.00px;height:27.00px;background:#c4c4c4;"></div>
<div class="a" style="left:768.00px;top:634.00px;width:60.00px;height:1.00px;background:#c4c4c4;"></div>
<div class="t" style="left:816.94px;top:612.25px;font-size:15px;line-height:20px;color:#000;">1</div>
<div class="a" style="left:828.00px;top:608.00px;width:61.00px;height:27.00px;background:#ffffff;"></div>
<div class="a" style="left:888.00px;top:608.00px;width:1.00px;height:27.00px;background:#c4c4c4;"></div>
<div class="a" style="left:828.00px;top:634.00px;width:61.00px;height:1.00px;background:#c4c4c4;"></div>
<div class="t" style="left:878.19px;top:612.25px;font-size:15px;line-height:20px;color:#ff0000;">1</div>
<div class="a" style="left:5.00px;top:635.00px;width:18.00px;height:28.00px;background:#f0f0f0;"></div>
<div class="a" style="left:5.00px;top:635.00px;width:1.00px;height:28.00px;background:#ffffff;"></div>
<div class="a" style="left:5.00px;top:635.00px;width:18.00px;height:1.00px;background:#ffffff;"></div>
<div class="a" style="left:22.00px;top:635.00px;width:1.00px;height:28.00px;background:#858585;"></div>
<div class="a" style="left:5.00px;top:662.00px;width:18.00px;height:1.00px;background:#7e7e7e;"></div>
<div class="t" style="left:11.37px;top:639.70px;font-size:15px;line-height:20px;color:#000;">6</div>
<div class="a" style="left:23.00px;top:635.00px;width:29.00px;height:28.00px;background:#ffffc1;"></div>
<div class="a" style="left:51.00px;top:635.00px;width:1.00px;height:28.00px;background:#c4c4c4;"></div>
<div class="a" style="left:23.00px;top:662.00px;width:29.00px;height:1.00px;background:#c4c4c4;"></div>
<div class="a" style="left:24.40px;top:636.30px;width:20.20px;height:19.40px;background:#ffffff;"></div>
<div class="a" style="left:24.40px;top:636.30px;width:20.20px;height:1.60px;background:#8c8c8c;"></div>
<div class="a" style="left:24.40px;top:636.30px;width:1.60px;height:19.40px;background:#8c8c8c;"></div>
<div class="a" style="left:42.80px;top:637.90px;width:1.80px;height:17.80px;background:#ececec;"></div>
<div class="a" style="left:26.00px;top:654.10px;width:18.60px;height:1.60px;background:#ececec;"></div>
<svg class="a" style="left:24.40px;top:636.30px;" width="21" height="20" viewBox="0 0 21 20"><path d="M4.2 9.8l2.9 3.6 7.2-8.9" stroke="#000" stroke-width="2.6" fill="none" stroke-linejoin="miter"/></svg>
<div class="a" style="left:52.00px;top:635.00px;width:72.00px;height:28.00px;background:#ffffff;"></div>
<div class="a" style="left:123.00px;top:635.00px;width:1.00px;height:28.00px;background:#c4c4c4;"></div>
<div class="a" style="left:52.00px;top:662.00px;width:72.00px;height:1.00px;background:#c4c4c4;"></div>
<div class="t" style="left:114.17px;top:639.70px;font-size:15px;line-height:20px;color:#000;">6</div>
<div class="a" style="left:124.00px;top:635.00px;width:133.00px;height:28.00px;background:#ffffff;"></div>
<div class="a" style="left:256.00px;top:635.00px;width:1.00px;height:28.00px;background:#c4c4c4;"></div>
<div class="a" style="left:124.00px;top:662.00px;width:133.00px;height:1.00px;background:#c4c4c4;"></div>
<div class="t" style="left:128.42px;top:639.70px;font-size:15px;line-height:20px;color:#000;letter-spacing:-0.900px;">VP INVASIVA</div>
<div class="a" style="left:257.00px;top:635.00px;width:20.00px;height:28.00px;background:#ffffff;"></div>
<div class="a" style="left:276.00px;top:635.00px;width:1.00px;height:28.00px;background:#c4c4c4;"></div>
<div class="a" style="left:257.00px;top:662.00px;width:20.00px;height:1.00px;background:#c4c4c4;"></div>
<div class="t" style="left:261.67px;top:639.70px;font-size:15px;line-height:20px;color:#000;">A</div>
<div class="a" style="left:277.00px;top:635.00px;width:31.00px;height:28.00px;background:#ffffff;"></div>
<div class="a" style="left:307.00px;top:635.00px;width:1.00px;height:28.00px;background:#c4c4c4;"></div>
<div class="a" style="left:277.00px;top:662.00px;width:31.00px;height:1.00px;background:#c4c4c4;"></div>
<div class="a" style="left:277.60px;top:636.30px;width:20.20px;height:19.40px;background:#ffffff;"></div>
<div class="a" style="left:277.60px;top:636.30px;width:20.20px;height:1.60px;background:#8c8c8c;"></div>
<div class="a" style="left:277.60px;top:636.30px;width:1.60px;height:19.40px;background:#8c8c8c;"></div>
<div class="a" style="left:296.00px;top:637.90px;width:1.80px;height:17.80px;background:#ececec;"></div>
<div class="a" style="left:279.20px;top:654.10px;width:18.60px;height:1.60px;background:#ececec;"></div>
<svg class="a" style="left:277.60px;top:636.30px;" width="21" height="20" viewBox="0 0 21 20"><path d="M4.2 9.8l2.9 3.6 7.2-8.9" stroke="#000" stroke-width="2.6" fill="none" stroke-linejoin="miter"/></svg>
<div class="a" style="left:308.00px;top:635.00px;width:86.00px;height:28.00px;background:#ffffff;"></div>
<div class="a" style="left:393.00px;top:635.00px;width:1.00px;height:28.00px;background:#c4c4c4;"></div>
<div class="a" style="left:308.00px;top:662.00px;width:86.00px;height:1.00px;background:#c4c4c4;"></div>
<div class="t" style="left:353.92px;top:639.70px;font-size:15px;line-height:20px;color:#000;">30,08</div>
<div class="a" style="left:394.00px;top:635.00px;width:219.00px;height:28.00px;background:#ffffff;"></div>
<div class="a" style="left:612.00px;top:635.00px;width:1.00px;height:28.00px;background:#c4c4c4;"></div>
<div class="a" style="left:394.00px;top:662.00px;width:219.00px;height:1.00px;background:#c4c4c4;"></div>
<div class="t" style="left:399.17px;top:639.70px;font-size:15px;line-height:20px;color:#000;letter-spacing:-0.402px;">A.S.L. BARI</div>
<div class="a" style="left:613.00px;top:635.00px;width:124.00px;height:28.00px;background:#ffffff;"></div>
<div class="a" style="left:736.00px;top:635.00px;width:1.00px;height:28.00px;background:#c4c4c4;"></div>
<div class="a" style="left:613.00px;top:662.00px;width:124.00px;height:1.00px;background:#c4c4c4;"></div>
<div class="t" style="left:616.72px;top:639.70px;font-size:15px;line-height:20px;color:#000;letter-spacing:0.068px;">BARI</div>
<div class="a" style="left:737.00px;top:635.00px;width:31.00px;height:28.00px;background:#ffffff;"></div>
<div class="a" style="left:767.00px;top:635.00px;width:1.00px;height:28.00px;background:#c4c4c4;"></div>
<div class="a" style="left:737.00px;top:662.00px;width:31.00px;height:1.00px;background:#c4c4c4;"></div>
<div class="t" style="left:739.98px;top:639.70px;font-size:15px;line-height:20px;color:#000;letter-spacing:-0.420px;">BA</div>
<div class="a" style="left:768.00px;top:635.00px;width:60.00px;height:28.00px;background:#ccffcc;"></div>
<div class="a" style="left:827.00px;top:635.00px;width:1.00px;height:28.00px;background:#c4c4c4;"></div>
<div class="a" style="left:768.00px;top:662.00px;width:60.00px;height:1.00px;background:#c4c4c4;"></div>
<div class="t" style="left:816.79px;top:639.70px;font-size:15px;line-height:20px;color:#000;">0</div>
<div class="a" style="left:828.00px;top:635.00px;width:61.00px;height:28.00px;background:#ffffff;"></div>
<div class="a" style="left:888.00px;top:635.00px;width:1.00px;height:28.00px;background:#c4c4c4;"></div>
<div class="a" style="left:828.00px;top:662.00px;width:61.00px;height:1.00px;background:#c4c4c4;"></div>
<div class="t" style="left:878.04px;top:639.70px;font-size:15px;line-height:20px;color:#ff0000;">0</div>
<div class="a" style="left:5.00px;top:663.00px;width:18.00px;height:27.00px;background:#f0f0f0;"></div>
<div class="a" style="left:5.00px;top:663.00px;width:1.00px;height:27.00px;background:#ffffff;"></div>
<div class="a" style="left:5.00px;top:663.00px;width:18.00px;height:1.00px;background:#ffffff;"></div>
<div class="a" style="left:22.00px;top:663.00px;width:1.00px;height:27.00px;background:#858585;"></div>
<div class="a" style="left:5.00px;top:689.00px;width:18.00px;height:1.00px;background:#7e7e7e;"></div>
<div class="t" style="left:11.46px;top:667.15px;font-size:15px;line-height:20px;color:#000;">7</div>
<div class="a" style="left:23.00px;top:663.00px;width:29.00px;height:27.00px;background:#ffffc1;"></div>
<div class="a" style="left:51.00px;top:663.00px;width:1.00px;height:27.00px;background:#c4c4c4;"></div>
<div class="a" style="left:23.00px;top:689.00px;width:29.00px;height:1.00px;background:#c4c4c4;"></div>
<div class="a" style="left:24.40px;top:663.75px;width:20.20px;height:19.40px;background:#ffffff;"></div>
<div class="a" style="left:24.40px;top:663.75px;width:20.20px;height:1.60px;background:#8c8c8c;"></div>
<div class="a" style="left:24.40px;top:663.75px;width:1.60px;height:19.40px;background:#8c8c8c;"></div>
<div class="a" style="left:42.80px;top:665.35px;width:1.80px;height:17.80px;background:#ececec;"></div>
<div class="a" style="left:26.00px;top:681.55px;width:18.60px;height:1.60px;background:#ececec;"></div>
<svg class="a" style="left:24.40px;top:663.75px;" width="21" height="20" viewBox="0 0 21 20"><path d="M4.2 9.8l2.9 3.6 7.2-8.9" stroke="#000" stroke-width="2.6" fill="none" stroke-linejoin="miter"/></svg>
<div class="a" style="left:52.00px;top:663.00px;width:72.00px;height:27.00px;background:#ffffff;"></div>
<div class="a" style="left:123.00px;top:663.00px;width:1.00px;height:27.00px;background:#c4c4c4;"></div>
<div class="a" style="left:52.00px;top:689.00px;width:72.00px;height:1.00px;background:#c4c4c4;"></div>
<div class="t" style="left:114.26px;top:667.15px;font-size:15px;line-height:20px;color:#000;">7</div>
<div class="a" style="left:124.00px;top:663.00px;width:133.00px;height:27.00px;background:#ffffff;"></div>
<div class="a" style="left:256.00px;top:663.00px;width:1.00px;height:27.00px;background:#c4c4c4;"></div>
<div class="a" style="left:124.00px;top:689.00px;width:133.00px;height:1.00px;background:#c4c4c4;"></div>
<div class="a" style="left:257.00px;top:663.00px;width:20.00px;height:27.00px;background:#ffffff;"></div>
<div class="a" style="left:276.00px;top:663.00px;width:1.00px;height:27.00px;background:#c4c4c4;"></div>
<div class="a" style="left:257.00px;top:689.00px;width:20.00px;height:1.00px;background:#c4c4c4;"></div>
<div class="t" style="left:261.67px;top:667.15px;font-size:15px;line-height:20px;color:#000;">A</div>
<div class="a" style="left:277.00px;top:663.00px;width:31.00px;height:27.00px;background:#ffffff;"></div>
<div class="a" style="left:307.00px;top:663.00px;width:1.00px;height:27.00px;background:#c4c4c4;"></div>
<div class="a" style="left:277.00px;top:689.00px;width:31.00px;height:1.00px;background:#c4c4c4;"></div>
<div class="a" style="left:277.60px;top:663.75px;width:20.20px;height:19.40px;background:#ffffff;"></div>
<div class="a" style="left:277.60px;top:663.75px;width:20.20px;height:1.60px;background:#8c8c8c;"></div>
<div class="a" style="left:277.60px;top:663.75px;width:1.60px;height:19.40px;background:#8c8c8c;"></div>
<div class="a" style="left:296.00px;top:665.35px;width:1.80px;height:17.80px;background:#ececec;"></div>
<div class="a" style="left:279.20px;top:681.55px;width:18.60px;height:1.60px;background:#ececec;"></div>
<div class="a" style="left:308.00px;top:663.00px;width:86.00px;height:27.00px;background:#ffffff;"></div>
<div class="a" style="left:393.00px;top:663.00px;width:1.00px;height:27.00px;background:#c4c4c4;"></div>
<div class="a" style="left:308.00px;top:689.00px;width:86.00px;height:1.00px;background:#c4c4c4;"></div>
<div class="t" style="left:353.92px;top:667.15px;font-size:15px;line-height:20px;color:#000;">13,08</div>
<div class="a" style="left:394.00px;top:663.00px;width:219.00px;height:27.00px;background:#ffffff;"></div>
<div class="a" style="left:612.00px;top:663.00px;width:1.00px;height:27.00px;background:#c4c4c4;"></div>
<div class="a" style="left:394.00px;top:689.00px;width:219.00px;height:1.00px;background:#c4c4c4;"></div>
<div class="t" style="left:399.17px;top:667.15px;font-size:15px;line-height:20px;color:#000;letter-spacing:-0.473px;">ARMENISE VITO</div>
<div class="a" style="left:613.00px;top:663.00px;width:124.00px;height:27.00px;background:#ffffff;"></div>
<div class="a" style="left:736.00px;top:663.00px;width:1.00px;height:27.00px;background:#c4c4c4;"></div>
<div class="a" style="left:613.00px;top:689.00px;width:124.00px;height:1.00px;background:#c4c4c4;"></div>
<div class="t" style="left:617.92px;top:667.15px;font-size:15px;line-height:20px;color:#000;letter-spacing:-0.196px;">ASCOLI PICENO</div>
<div class="a" style="left:737.00px;top:663.00px;width:31.00px;height:27.00px;background:#ffffff;"></div>
<div class="a" style="left:767.00px;top:663.00px;width:1.00px;height:27.00px;background:#c4c4c4;"></div>
<div class="a" style="left:737.00px;top:689.00px;width:31.00px;height:1.00px;background:#c4c4c4;"></div>
<div class="t" style="left:740.96px;top:667.15px;font-size:15px;line-height:20px;color:#000;letter-spacing:-0.420px;">AP</div>
<div class="a" style="left:768.00px;top:663.00px;width:60.00px;height:27.00px;background:#ccffcc;"></div>
<div class="a" style="left:827.00px;top:663.00px;width:1.00px;height:27.00px;background:#c4c4c4;"></div>
<div class="a" style="left:768.00px;top:689.00px;width:60.00px;height:1.00px;background:#c4c4c4;"></div>
<div class="t" style="left:816.79px;top:667.15px;font-size:15px;line-height:20px;color:#000;">0</div>
<div class="a" style="left:828.00px;top:663.00px;width:61.00px;height:27.00px;background:#ffffff;"></div>
<div class="a" style="left:888.00px;top:663.00px;width:1.00px;height:27.00px;background:#c4c4c4;"></div>
<div class="a" style="left:828.00px;top:689.00px;width:61.00px;height:1.00px;background:#c4c4c4;"></div>
<div class="t" style="left:878.04px;top:667.15px;font-size:15px;line-height:20px;color:#ff0000;">0</div>
<div class="a" style="left:5.00px;top:690.00px;width:18.00px;height:27.00px;background:#f0f0f0;"></div>
<div class="a" style="left:5.00px;top:690.00px;width:1.00px;height:27.00px;background:#ffffff;"></div>
<div class="a" style="left:5.00px;top:690.00px;width:18.00px;height:1.00px;background:#ffffff;"></div>
<div class="a" style="left:22.00px;top:690.00px;width:1.00px;height:27.00px;background:#858585;"></div>
<div class="a" style="left:5.00px;top:716.00px;width:18.00px;height:1.00px;background:#7e7e7e;"></div>
<div class="t" style="left:11.36px;top:694.60px;font-size:15px;line-height:20px;color:#000;">8</div>
<div class="a" style="left:23.00px;top:690.00px;width:29.00px;height:27.00px;background:#ffffc1;"></div>
<div class="a" style="left:51.00px;top:690.00px;width:1.00px;height:27.00px;background:#c4c4c4;"></div>
<div class="a" style="left:23.00px;top:716.00px;width:29.00px;height:1.00px;background:#c4c4c4;"></div>
<div class="a" style="left:24.40px;top:691.20px;width:20.20px;height:19.40px;background:#ffffff;"></div>
<div class="a" style="left:24.40px;top:691.20px;width:20.20px;height:1.60px;background:#8c8c8c;"></div>
<div class="a" style="left:24.40px;top:691.20px;width:1.60px;height:19.40px;background:#8c8c8c;"></div>
<div class="a" style="left:42.80px;top:692.80px;width:1.80px;height:17.80px;background:#ececec;"></div>
<div class="a" style="left:26.00px;top:709.00px;width:18.60px;height:1.60px;background:#ececec;"></div>
<svg class="a" style="left:24.40px;top:691.20px;" width="21" height="20" viewBox="0 0 21 20"><path d="M4.2 9.8l2.9 3.6 7.2-8.9" stroke="#000" stroke-width="2.6" fill="none" stroke-linejoin="miter"/></svg>
<div class="a" style="left:52.00px;top:690.00px;width:72.00px;height:27.00px;background:#ffffff;"></div>
<div class="a" style="left:123.00px;top:690.00px;width:1.00px;height:27.00px;background:#c4c4c4;"></div>
<div class="a" style="left:52.00px;top:716.00px;width:72.00px;height:1.00px;background:#c4c4c4;"></div>
<div class="t" style="left:114.16px;top:694.60px;font-size:15px;line-height:20px;color:#000;">8</div>
<div class="a" style="left:124.00px;top:690.00px;width:133.00px;height:27.00px;background:#ffffff;"></div>
<div class="a" style="left:256.00px;top:690.00px;width:1.00px;height:27.00px;background:#c4c4c4;"></div>
<div class="a" style="left:124.00px;top:716.00px;width:133.00px;height:1.00px;background:#c4c4c4;"></div>
<div class="t" style="left:128.44px;top:694.60px;font-size:15px;line-height:20px;color:#000;letter-spacing:-0.021px;">CNTP INTER</div>
<div class="a" style="left:257.00px;top:690.00px;width:20.00px;height:27.00px;background:#ffffff;"></div>
<div class="a" style="left:276.00px;top:690.00px;width:1.00px;height:27.00px;background:#c4c4c4;"></div>
<div class="a" style="left:257.00px;top:716.00px;width:20.00px;height:1.00px;background:#c4c4c4;"></div>
<div class="t" style="left:261.67px;top:694.60px;font-size:15px;line-height:20px;color:#000;">A</div>
<div class="a" style="left:277.00px;top:690.00px;width:31.00px;height:27.00px;background:#ffffff;"></div>
<div class="a" style="left:307.00px;top:690.00px;width:1.00px;height:27.00px;background:#c4c4c4;"></div>
<div class="a" style="left:277.00px;top:716.00px;width:31.00px;height:1.00px;background:#c4c4c4;"></div>
<div class="a" style="left:277.60px;top:691.20px;width:20.20px;height:19.40px;background:#ffffff;"></div>
<div class="a" style="left:277.60px;top:691.20px;width:20.20px;height:1.60px;background:#8c8c8c;"></div>
<div class="a" style="left:277.60px;top:691.20px;width:1.60px;height:19.40px;background:#8c8c8c;"></div>
<div class="a" style="left:296.00px;top:692.80px;width:1.80px;height:17.80px;background:#ececec;"></div>
<div class="a" style="left:279.20px;top:709.00px;width:18.60px;height:1.60px;background:#ececec;"></div>
<div class="a" style="left:308.00px;top:690.00px;width:86.00px;height:27.00px;background:#ffffff;"></div>
<div class="a" style="left:393.00px;top:690.00px;width:1.00px;height:27.00px;background:#c4c4c4;"></div>
<div class="a" style="left:308.00px;top:716.00px;width:86.00px;height:1.00px;background:#c4c4c4;"></div>
<div class="t" style="left:362.26px;top:694.60px;font-size:15px;line-height:20px;color:#000;">1,08</div>
<div class="a" style="left:394.00px;top:690.00px;width:219.00px;height:27.00px;background:#ffffff;"></div>
<div class="a" style="left:612.00px;top:690.00px;width:1.00px;height:27.00px;background:#c4c4c4;"></div>
<div class="a" style="left:394.00px;top:716.00px;width:219.00px;height:1.00px;background:#c4c4c4;"></div>
<div class="t" style="left:399.17px;top:694.60px;font-size:15px;line-height:20px;color:#000;letter-spacing:-0.219px;">ACCOLTI VINCENZO SRL</div>
<div class="a" style="left:613.00px;top:690.00px;width:124.00px;height:27.00px;background:#ffffff;"></div>
<div class="a" style="left:736.00px;top:690.00px;width:1.00px;height:27.00px;background:#c4c4c4;"></div>
<div class="a" style="left:613.00px;top:716.00px;width:124.00px;height:1.00px;background:#c4c4c4;"></div>
<div class="t" style="left:616.72px;top:694.60px;font-size:15px;line-height:20px;color:#000;letter-spacing:0.068px;">BARI</div>
<div class="a" style="left:737.00px;top:690.00px;width:31.00px;height:27.00px;background:#ffffff;"></div>
<div class="a" style="left:767.00px;top:690.00px;width:1.00px;height:27.00px;background:#c4c4c4;"></div>
<div class="a" style="left:737.00px;top:716.00px;width:31.00px;height:1.00px;background:#c4c4c4;"></div>
<div class="t" style="left:739.98px;top:694.60px;font-size:15px;line-height:20px;color:#000;letter-spacing:-0.420px;">BA</div>
<div class="a" style="left:768.00px;top:690.00px;width:60.00px;height:27.00px;background:#ccffcc;"></div>
<div class="a" style="left:827.00px;top:690.00px;width:1.00px;height:27.00px;background:#c4c4c4;"></div>
<div class="a" style="left:768.00px;top:716.00px;width:60.00px;height:1.00px;background:#c4c4c4;"></div>
<div class="t" style="left:816.79px;top:694.60px;font-size:15px;line-height:20px;color:#000;">0</div>
<div class="a" style="left:828.00px;top:690.00px;width:61.00px;height:27.00px;background:#ffffff;"></div>
<div class="a" style="left:888.00px;top:690.00px;width:1.00px;height:27.00px;background:#c4c4c4;"></div>
<div class="a" style="left:828.00px;top:716.00px;width:61.00px;height:1.00px;background:#c4c4c4;"></div>
<div class="t" style="left:878.04px;top:694.60px;font-size:15px;line-height:20px;color:#ff0000;">0</div>
<div class="a" style="left:1896.00px;top:497.60px;width:2.00px;height:224.40px;background:#e4e4e4;"></div>
<div class="a" style="left:1898.00px;top:497.60px;width:19.50px;height:224.40px;background:#f0f0f0;"></div>
<div class="a" style="left:1898.00px;top:539.00px;width:18.00px;height:161.00px;background:#cdcdcd;"></div>
<svg class="a" style="left:1902.00px;top:505.10px;" width="10" height="8" viewBox="0 0 10 8"><path d="M1 6.5l4-4 4 4" stroke="#5c5c5c" stroke-width="2" fill="none"/></svg>
<svg class="a" style="left:1902.00px;top:707.00px;" width="10" height="8" viewBox="0 0 10 8"><path d="M1 1.5l4 4 4-4" stroke="#5c5c5c" stroke-width="2" fill="none"/></svg>
<div class="a" style="left:2.50px;top:722.00px;width:1915.00px;height:3.50px;background:#fdfdfd;"></div>
<div class="a" style="left:2.50px;top:725.50px;width:1915.00px;height:1.50px;background:#a4a4a4;"></div>
<div class="a" style="left:2.50px;top:727.00px;width:1915.00px;height:1.00px;background:#d4d4d4;"></div>
<div class="a" style="left:2.50px;top:728.00px;width:1915.00px;height:2.60px;background:#858585;"></div>
<div class="a" style="left:0.00px;top:717.50px;width:2.50px;height:4.50px;background:#a0a0a0;"></div>
<div class="a" style="left:0;top:730.6px;width:1920px;height:265.20px;overflow:hidden;"><div class="a" style="left:0;top:-730.6px;width:1920px;height:1080px;">
<div class="a" style="left:0.00px;top:730.60px;width:2.50px;height:265.20px;background:#a0a0a0;"></div>
<div class="a" style="left:2.50px;top:730.60px;width:1893.50px;height:265.20px;background:#a0a0a0;"></div>
<div class="a" style="left:5.00px;top:731.00px;width:27.00px;height:27.00px;background:#f0f0f0;"></div>
<div class="a" style="left:5.00px;top:731.00px;width:1.00px;height:27.00px;background:#ffffff;"></div>
<div class="a" style="left:5.00px;top:731.00px;width:27.00px;height:1.00px;background:#ffffff;"></div>
<div class="a" style="left:31.00px;top:731.00px;width:1.00px;height:27.00px;background:#858585;"></div>
<div class="a" style="left:5.00px;top:757.00px;width:27.00px;height:1.00px;background:#7e7e7e;"></div>
<div class="a" style="left:32.00px;top:731.00px;width:58.00px;height:27.00px;background:#f0f0f0;"></div>
<div class="a" style="left:32.00px;top:731.00px;width:1.00px;height:27.00px;background:#ffffff;"></div>
<div class="a" style="left:32.00px;top:731.00px;width:58.00px;height:1.00px;background:#ffffff;"></div>
<div class="a" style="left:89.00px;top:731.00px;width:1.00px;height:27.00px;background:#8e8e8e;"></div>
<div class="a" style="left:32.00px;top:756.00px;width:58.00px;height:1.00px;background:#8a8a8a;"></div>
<div class="a" style="left:32.00px;top:757.00px;width:58.00px;height:1.00px;background:#767676;"></div>
<div class="t" style="left:37.79px;top:735.40px;font-size:15px;line-height:20px;color:#000;letter-spacing:0.147px;">Codice</div>
<div class="a" style="left:90.00px;top:731.00px;width:219.00px;height:27.00px;background:#f0f0f0;"></div>
<div class="a" style="left:90.00px;top:731.00px;width:1.00px;height:27.00px;background:#ffffff;"></div>
<div class="a" style="left:90.00px;top:731.00px;width:219.00px;height:1.00px;background:#ffffff;"></div>
<div class="a" style="left:308.00px;top:731.00px;width:1.00px;height:27.00px;background:#8e8e8e;"></div>
<div class="a" style="left:90.00px;top:756.00px;width:219.00px;height:1.00px;background:#8a8a8a;"></div>
<div class="a" style="left:90.00px;top:757.00px;width:219.00px;height:1.00px;background:#767676;"></div>
<div class="t" style="left:95.07px;top:735.40px;font-size:15px;line-height:20px;color:#000;letter-spacing:0.264px;">Intestatario</div>
<div class="a" style="left:309.00px;top:731.00px;width:73.00px;height:27.00px;background:#f0f0f0;"></div>
<div class="a" style="left:309.00px;top:731.00px;width:1.00px;height:27.00px;background:#ffffff;"></div>
<div class="a" style="left:309.00px;top:731.00px;width:73.00px;height:1.00px;background:#ffffff;"></div>
<div class="a" style="left:381.00px;top:731.00px;width:1.00px;height:27.00px;background:#8e8e8e;"></div>
<div class="a" style="left:309.00px;top:756.00px;width:73.00px;height:1.00px;background:#8a8a8a;"></div>
<div class="a" style="left:309.00px;top:757.00px;width:73.00px;height:1.00px;background:#767676;"></div>
<div class="t" style="left:315.29px;top:735.40px;font-size:15px;line-height:20px;color:#000;letter-spacing:-0.026px;">Contratto</div>
<div class="a" style="left:382.00px;top:731.00px;width:91.00px;height:27.00px;background:#f0f0f0;"></div>
<div class="a" style="left:382.00px;top:731.00px;width:1.00px;height:27.00px;background:#ffffff;"></div>
<div class="a" style="left:382.00px;top:731.00px;width:91.00px;height:1.00px;background:#ffffff;"></div>
<div class="a" style="left:472.00px;top:731.00px;width:1.00px;height:27.00px;background:#8e8e8e;"></div>
<div class="a" style="left:382.00px;top:756.00px;width:91.00px;height:1.00px;background:#8a8a8a;"></div>
<div class="a" style="left:382.00px;top:757.00px;width:91.00px;height:1.00px;background:#767676;"></div>
<div class="t" style="left:386.92px;top:735.40px;font-size:15px;line-height:20px;color:#000;letter-spacing:0.271px;">Beneficiario</div>
<div class="a" style="left:473.00px;top:731.00px;width:187.00px;height:27.00px;background:#f0f0f0;"></div>
<div class="a" style="left:473.00px;top:731.00px;width:1.00px;height:27.00px;background:#ffffff;"></div>
<div class="a" style="left:473.00px;top:731.00px;width:187.00px;height:1.00px;background:#ffffff;"></div>
<div class="a" style="left:659.00px;top:731.00px;width:1.00px;height:27.00px;background:#8e8e8e;"></div>
<div class="a" style="left:473.00px;top:756.00px;width:187.00px;height:1.00px;background:#8a8a8a;"></div>
<div class="a" style="left:473.00px;top:757.00px;width:187.00px;height:1.00px;background:#767676;"></div>
<div class="t" style="left:478.62px;top:735.40px;font-size:15px;line-height:20px;color:#000;letter-spacing:0.331px;">Denominazione</div>
<div class="a" style="left:660.00px;top:731.00px;width:132.00px;height:27.00px;background:#f0f0f0;"></div>
<div class="a" style="left:660.00px;top:731.00px;width:1.00px;height:27.00px;background:#ffffff;"></div>
<div class="a" style="left:660.00px;top:731.00px;width:132.00px;height:1.00px;background:#ffffff;"></div>
<div class="a" style="left:791.00px;top:731.00px;width:1.00px;height:27.00px;background:#8e8e8e;"></div>
<div class="a" style="left:660.00px;top:756.00px;width:132.00px;height:1.00px;background:#8a8a8a;"></div>
<div class="a" style="left:660.00px;top:757.00px;width:132.00px;height:1.00px;background:#767676;"></div>
<div class="t" style="left:663.97px;top:735.40px;font-size:15px;line-height:20px;color:#000;letter-spacing:-0.043px;">Indirizzo</div>
<div class="a" style="left:792.00px;top:731.00px;width:124.00px;height:27.00px;background:#f0f0f0;"></div>
<div class="a" style="left:792.00px;top:731.00px;width:1.00px;height:27.00px;background:#ffffff;"></div>
<div class="a" style="left:792.00px;top:731.00px;width:124.00px;height:1.00px;background:#ffffff;"></div>
<div class="a" style="left:915.00px;top:731.00px;width:1.00px;height:27.00px;background:#8e8e8e;"></div>
<div class="a" style="left:792.00px;top:756.00px;width:124.00px;height:1.00px;background:#8a8a8a;"></div>
<div class="a" style="left:792.00px;top:757.00px;width:124.00px;height:1.00px;background:#767676;"></div>
<div class="t" style="left:797.59px;top:735.40px;font-size:15px;line-height:20px;color:#000;letter-spacing:-0.145px;">Città</div>
<div class="a" style="left:916.00px;top:731.00px;width:29.00px;height:27.00px;background:#f0f0f0;"></div>
<div class="a" style="left:916.00px;top:731.00px;width:1.00px;height:27.00px;background:#ffffff;"></div>
<div class="a" style="left:916.00px;top:731.00px;width:29.00px;height:1.00px;background:#ffffff;"></div>
<div class="a" style="left:944.00px;top:731.00px;width:1.00px;height:27.00px;background:#8e8e8e;"></div>
<div class="a" style="left:916.00px;top:756.00px;width:29.00px;height:1.00px;background:#8a8a8a;"></div>
<div class="a" style="left:916.00px;top:757.00px;width:29.00px;height:1.00px;background:#767676;"></div>
<div class="t" style="left:920.52px;top:735.40px;font-size:15px;line-height:20px;color:#000;letter-spacing:-0.384px;">Pr.</div>
<div class="a" style="left:945.00px;top:731.00px;width:86.00px;height:27.00px;background:#f0f0f0;"></div>
<div class="a" style="left:945.00px;top:731.00px;width:1.00px;height:27.00px;background:#ffffff;"></div>
<div class="a" style="left:945.00px;top:731.00px;width:86.00px;height:1.00px;background:#ffffff;"></div>
<div class="a" style="left:1030.00px;top:731.00px;width:1.00px;height:27.00px;background:#8e8e8e;"></div>
<div class="a" style="left:945.00px;top:756.00px;width:86.00px;height:1.00px;background:#8a8a8a;"></div>
<div class="a" style="left:945.00px;top:757.00px;width:86.00px;height:1.00px;background:#767676;"></div>
<div class="t" style="left:949.82px;top:735.40px;font-size:15px;line-height:20px;color:#000;letter-spacing:0.009px;">Data Inizio</div>
<div class="a" style="left:1031.00px;top:731.00px;width:86.00px;height:27.00px;background:#f0f0f0;"></div>
<div class="a" style="left:1031.00px;top:731.00px;width:1.00px;height:27.00px;background:#ffffff;"></div>
<div class="a" style="left:1031.00px;top:731.00px;width:86.00px;height:1.00px;background:#ffffff;"></div>
<div class="a" style="left:1116.00px;top:731.00px;width:1.00px;height:27.00px;background:#8e8e8e;"></div>
<div class="a" style="left:1031.00px;top:756.00px;width:86.00px;height:1.00px;background:#8a8a8a;"></div>
<div class="a" style="left:1031.00px;top:757.00px;width:86.00px;height:1.00px;background:#767676;"></div>
<div class="t" style="left:1035.92px;top:735.40px;font-size:15px;line-height:20px;color:#000;letter-spacing:0.133px;">Data Fine</div>
<div class="a" style="left:1117.00px;top:731.00px;width:45.00px;height:27.00px;background:#f0f0f0;"></div>
<div class="a" style="left:1117.00px;top:731.00px;width:1.00px;height:27.00px;background:#ffffff;"></div>
<div class="a" style="left:1117.00px;top:731.00px;width:45.00px;height:1.00px;background:#ffffff;"></div>
<div class="a" style="left:1161.00px;top:731.00px;width:1.00px;height:27.00px;background:#8e8e8e;"></div>
<div class="a" style="left:1117.00px;top:756.00px;width:45.00px;height:1.00px;background:#8a8a8a;"></div>
<div class="a" style="left:1117.00px;top:757.00px;width:45.00px;height:1.00px;background:#767676;"></div>
<div class="t" style="left:1122.77px;top:735.40px;font-size:15px;line-height:20px;color:#000;letter-spacing:-0.228px;">Stato</div>
<div class="a" style="left:5.00px;top:758.00px;width:27.00px;height:27.00px;background:#f0f0f0;"></div>
<div class="a" style="left:5.00px;top:758.00px;width:1.00px;height:27.00px;background:#ffffff;"></div>
<div class="a" style="left:5.00px;top:758.00px;width:27.00px;height:1.00px;background:#ffffff;"></div>
<div class="a" style="left:31.00px;top:758.00px;width:1.00px;height:27.00px;background:#858585;"></div>
<div class="a" style="left:5.00px;top:784.00px;width:27.00px;height:1.00px;background:#7e7e7e;"></div>
<div class="t" style="left:19.94px;top:762.30px;font-size:15px;line-height:20px;color:#000;">1</div>
<div class="a" style="left:32.00px;top:758.00px;width:58.00px;height:27.00px;background:#0078d7;"></div>
<div class="a" style="left:89.00px;top:758.00px;width:1.00px;height:27.00px;background:#c4c4c4;"></div>
<div class="a" style="left:32.00px;top:784.00px;width:58.00px;height:1.00px;background:#c4c4c4;"></div>
<div class="t" style="left:50.48px;top:762.30px;font-size:15px;line-height:20px;color:#fff;letter-spacing:0.097px;">30,08</div>
<div class="a" style="left:90.00px;top:758.00px;width:219.00px;height:27.00px;background:#ffffff;"></div>
<div class="a" style="left:308.00px;top:758.00px;width:1.00px;height:27.00px;background:#c4c4c4;"></div>
<div class="a" style="left:90.00px;top:784.00px;width:219.00px;height:1.00px;background:#c4c4c4;"></div>
<div class="t" style="left:95.62px;top:762.30px;font-size:15px;line-height:20px;color:#000;letter-spacing:-0.412px;">A.S.L. BARI</div>
<div class="a" style="left:309.00px;top:758.00px;width:73.00px;height:27.00px;background:#ffffff;"></div>
<div class="a" style="left:381.00px;top:758.00px;width:1.00px;height:27.00px;background:#c4c4c4;"></div>
<div class="a" style="left:309.00px;top:784.00px;width:73.00px;height:1.00px;background:#c4c4c4;"></div>
<div class="t" style="left:370.94px;top:762.30px;font-size:15px;line-height:20px;color:#000;">1</div>
<div class="a" style="left:382.00px;top:758.00px;width:91.00px;height:27.00px;background:#ffffff;"></div>
<div class="a" style="left:472.00px;top:758.00px;width:1.00px;height:27.00px;background:#c4c4c4;"></div>
<div class="a" style="left:382.00px;top:784.00px;width:91.00px;height:1.00px;background:#c4c4c4;"></div>
<div class="t" style="left:432.67px;top:762.30px;font-size:15px;line-height:20px;color:#000;">30,08</div>
<div class="a" style="left:473.00px;top:758.00px;width:187.00px;height:27.00px;background:#ffffff;"></div>
<div class="a" style="left:659.00px;top:758.00px;width:1.00px;height:27.00px;background:#c4c4c4;"></div>
<div class="a" style="left:473.00px;top:784.00px;width:187.00px;height:1.00px;background:#c4c4c4;"></div>
<div class="t" style="left:478.02px;top:762.30px;font-size:15px;line-height:20px;color:#000;letter-spacing:-0.432px;">A.S.L. BARI</div>
<div class="a" style="left:660.00px;top:758.00px;width:132.00px;height:27.00px;background:#ffffff;"></div>
<div class="a" style="left:791.00px;top:758.00px;width:1.00px;height:27.00px;background:#c4c4c4;"></div>
<div class="a" style="left:660.00px;top:784.00px;width:132.00px;height:1.00px;background:#c4c4c4;"></div>
<div class="t" style="left:663.32px;top:762.30px;font-size:15px;line-height:20px;color:#000;letter-spacing:-0.613px;">P.ZZA G. CESARE</div>
<div class="a" style="left:792.00px;top:758.00px;width:124.00px;height:27.00px;background:#ffffff;"></div>
<div class="a" style="left:915.00px;top:758.00px;width:1.00px;height:27.00px;background:#c4c4c4;"></div>
<div class="a" style="left:792.00px;top:784.00px;width:124.00px;height:1.00px;background:#c4c4c4;"></div>
<div class="t" style="left:795.82px;top:762.30px;font-size:15px;line-height:20px;color:#000;letter-spacing:-0.298px;">BARI</div>
<div class="a" style="left:916.00px;top:758.00px;width:29.00px;height:27.00px;background:#ffffff;"></div>
<div class="a" style="left:944.00px;top:758.00px;width:1.00px;height:27.00px;background:#c4c4c4;"></div>
<div class="a" style="left:916.00px;top:784.00px;width:29.00px;height:1.00px;background:#c4c4c4;"></div>
<div class="t" style="left:919.20px;top:762.30px;font-size:15px;line-height:20px;color:#000;letter-spacing:-0.420px;">BA</div>
<div class="a" style="left:945.00px;top:758.00px;width:86.00px;height:27.00px;background:#ffffff;"></div>
<div class="a" style="left:1030.00px;top:758.00px;width:1.00px;height:27.00px;background:#c4c4c4;"></div>
<div class="a" style="left:945.00px;top:784.00px;width:86.00px;height:1.00px;background:#c4c4c4;"></div>
<div class="t" style="left:951.00px;top:762.30px;font-size:15px;line-height:20px;color:#000;letter-spacing:0.219px;">29.07.2010</div>
<div class="a" style="left:1031.00px;top:758.00px;width:86.00px;height:27.00px;background:#ffffff;"></div>
<div class="a" style="left:1116.00px;top:758.00px;width:1.00px;height:27.00px;background:#c4c4c4;"></div>
<div class="a" style="left:1031.00px;top:784.00px;width:86.00px;height:1.00px;background:#c4c4c4;"></div>
<div class="t" style="left:1037.88px;top:762.30px;font-size:15px;line-height:20px;color:#000;letter-spacing:0.148px;">31.12.2021</div>
<div class="a" style="left:1117.00px;top:758.00px;width:45.00px;height:27.00px;background:#ffffff;"></div>
<div class="a" style="left:1161.00px;top:758.00px;width:1.00px;height:27.00px;background:#c4c4c4;"></div>
<div class="a" style="left:1117.00px;top:784.00px;width:45.00px;height:1.00px;background:#c4c4c4;"></div>
<div class="t" style="left:1121.62px;top:762.30px;font-size:15px;line-height:20px;color:#000;letter-spacing:-0.711px;">Attivo</div>
<div class="a" style="left:5.00px;top:785.00px;width:27.00px;height:28.00px;background:#f0f0f0;"></div>
<div class="a" style="left:5.00px;top:785.00px;width:1.00px;height:28.00px;background:#ffffff;"></div>
<div class="a" style="left:5.00px;top:785.00px;width:27.00px;height:1.00px;background:#ffffff;"></div>
<div class="a" style="left:31.00px;top:785.00px;width:1.00px;height:28.00px;background:#858585;"></div>
<div class="a" style="left:5.00px;top:812.00px;width:27.00px;height:1.00px;background:#7e7e7e;"></div>
<div class="t" style="left:19.96px;top:789.77px;font-size:15px;line-height:20px;color:#000;">2</div>
<div class="a" style="left:32.00px;top:785.00px;width:58.00px;height:28.00px;background:#ccffcc;"></div>
<div class="a" style="left:89.00px;top:785.00px;width:1.00px;height:28.00px;background:#c4c4c4;"></div>
<div class="a" style="left:32.00px;top:812.00px;width:58.00px;height:1.00px;background:#c4c4c4;"></div>
<div class="t" style="left:50.48px;top:789.77px;font-size:15px;line-height:20px;color:#000;letter-spacing:0.097px;">31,08</div>
<div class="a" style="left:90.00px;top:785.00px;width:219.00px;height:28.00px;background:#ccffcc;"></div>
<div class="a" style="left:308.00px;top:785.00px;width:1.00px;height:28.00px;background:#c4c4c4;"></div>
<div class="a" style="left:90.00px;top:812.00px;width:219.00px;height:1.00px;background:#c4c4c4;"></div>
<div class="t" style="left:95.62px;top:789.77px;font-size:15px;line-height:20px;color:#000;letter-spacing:-0.181px;">A.S.L. LECCE LE/1</div>
<div class="a" style="left:309.00px;top:785.00px;width:73.00px;height:28.00px;background:#ccffcc;"></div>
<div class="a" style="left:381.00px;top:785.00px;width:1.00px;height:28.00px;background:#c4c4c4;"></div>
<div class="a" style="left:309.00px;top:812.00px;width:73.00px;height:1.00px;background:#c4c4c4;"></div>
<div class="t" style="left:370.96px;top:789.77px;font-size:15px;line-height:20px;color:#000;">2</div>
<div class="a" style="left:382.00px;top:785.00px;width:91.00px;height:28.00px;background:#ccffcc;"></div>
<div class="a" style="left:472.00px;top:785.00px;width:1.00px;height:28.00px;background:#c4c4c4;"></div>
<div class="a" style="left:382.00px;top:812.00px;width:91.00px;height:1.00px;background:#c4c4c4;"></div>
<div class="t" style="left:432.67px;top:789.77px;font-size:15px;line-height:20px;color:#000;">31,08</div>
<div class="a" style="left:473.00px;top:785.00px;width:187.00px;height:28.00px;background:#ccffcc;"></div>
<div class="a" style="left:659.00px;top:785.00px;width:1.00px;height:28.00px;background:#c4c4c4;"></div>
<div class="a" style="left:473.00px;top:812.00px;width:187.00px;height:1.00px;background:#c4c4c4;"></div>
<div class="t" style="left:478.02px;top:789.77px;font-size:15px;line-height:20px;color:#000;letter-spacing:-0.194px;">A.S.L. LECCE LE/1</div>
<div class="a" style="left:660.00px;top:785.00px;width:132.00px;height:28.00px;background:#ccffcc;"></div>
<div class="a" style="left:791.00px;top:785.00px;width:1.00px;height:28.00px;background:#c4c4c4;"></div>
<div class="a" style="left:660.00px;top:812.00px;width:132.00px;height:1.00px;background:#c4c4c4;"></div>
<div class="t" style="left:664.48px;top:789.77px;font-size:15px;line-height:20px;color:#000;letter-spacing:-0.669px;">VIA BARI, 18</div>
<div class="a" style="left:792.00px;top:785.00px;width:124.00px;height:28.00px;background:#ccffcc;"></div>
<div class="a" style="left:915.00px;top:785.00px;width:1.00px;height:28.00px;background:#c4c4c4;"></div>
<div class="a" style="left:792.00px;top:812.00px;width:124.00px;height:1.00px;background:#c4c4c4;"></div>
<div class="t" style="left:795.82px;top:789.77px;font-size:15px;line-height:20px;color:#000;letter-spacing:0.189px;">LECCE</div>
<div class="a" style="left:916.00px;top:785.00px;width:29.00px;height:28.00px;background:#ccffcc;"></div>
<div class="a" style="left:944.00px;top:785.00px;width:1.00px;height:28.00px;background:#c4c4c4;"></div>
<div class="a" style="left:916.00px;top:812.00px;width:29.00px;height:1.00px;background:#c4c4c4;"></div>
<div class="t" style="left:919.92px;top:789.77px;font-size:15px;line-height:20px;color:#000;letter-spacing:0.420px;">LE</div>
<div class="a" style="left:945.00px;top:785.00px;width:86.00px;height:28.00px;background:#ccffcc;"></div>
<div class="a" style="left:1030.00px;top:785.00px;width:1.00px;height:28.00px;background:#c4c4c4;"></div>
<div class="a" style="left:945.00px;top:812.00px;width:86.00px;height:1.00px;background:#c4c4c4;"></div>
<div class="t" style="left:951.00px;top:789.77px;font-size:15px;line-height:20px;color:#000;letter-spacing:0.219px;">29.07.2010</div>
<div class="a" style="left:1031.00px;top:785.00px;width:86.00px;height:28.00px;background:#ccffcc;"></div>
<div class="a" style="left:1116.00px;top:785.00px;width:1.00px;height:28.00px;background:#c4c4c4;"></div>
<div class="a" style="left:1031.00px;top:812.00px;width:86.00px;height:1.00px;background:#c4c4c4;"></div>
<div class="t" style="left:1037.88px;top:789.77px;font-size:15px;line-height:20px;color:#000;letter-spacing:0.148px;">31.12.2021</div>
<div class="a" style="left:1117.00px;top:785.00px;width:45.00px;height:28.00px;background:#ccffcc;"></div>
<div class="a" style="left:1161.00px;top:785.00px;width:1.00px;height:28.00px;background:#c4c4c4;"></div>
<div class="a" style="left:1117.00px;top:812.00px;width:45.00px;height:1.00px;background:#c4c4c4;"></div>
<div class="t" style="left:1121.62px;top:789.77px;font-size:15px;line-height:20px;color:#000;letter-spacing:-0.711px;">Attivo</div>
<div class="a" style="left:5.00px;top:813.00px;width:27.00px;height:27.00px;background:#f0f0f0;"></div>
<div class="a" style="left:5.00px;top:813.00px;width:1.00px;height:27.00px;background:#ffffff;"></div>
<div class="a" style="left:5.00px;top:813.00px;width:27.00px;height:1.00px;background:#ffffff;"></div>
<div class="a" style="left:31.00px;top:813.00px;width:1.00px;height:27.00px;background:#858585;"></div>
<div class="a" style="left:5.00px;top:839.00px;width:27.00px;height:1.00px;background:#7e7e7e;"></div>
<div class="t" style="left:19.87px;top:817.24px;font-size:15px;line-height:20px;color:#000;">3</div>
<div class="a" style="left:32.00px;top:813.00px;width:58.00px;height:27.00px;background:#ffffff;"></div>
<div class="a" style="left:89.00px;top:813.00px;width:1.00px;height:27.00px;background:#c4c4c4;"></div>
<div class="a" style="left:32.00px;top:839.00px;width:58.00px;height:1.00px;background:#c4c4c4;"></div>
<div class="t" style="left:50.48px;top:817.24px;font-size:15px;line-height:20px;color:#000;letter-spacing:0.097px;">32,08</div>
<div class="a" style="left:90.00px;top:813.00px;width:219.00px;height:27.00px;background:#ffffff;"></div>
<div class="a" style="left:308.00px;top:813.00px;width:1.00px;height:27.00px;background:#c4c4c4;"></div>
<div class="a" style="left:90.00px;top:839.00px;width:219.00px;height:1.00px;background:#c4c4c4;"></div>
<div class="t" style="left:94.94px;top:817.24px;font-size:15px;line-height:20px;color:#000;letter-spacing:-0.168px;">OSPEDALE DI VENERE - BARI</div>
<div class="a" style="left:309.00px;top:813.00px;width:73.00px;height:27.00px;background:#ffffff;"></div>
<div class="a" style="left:381.00px;top:813.00px;width:1.00px;height:27.00px;background:#c4c4c4;"></div>
<div class="a" style="left:309.00px;top:839.00px;width:73.00px;height:1.00px;background:#c4c4c4;"></div>
<div class="t" style="left:370.87px;top:817.24px;font-size:15px;line-height:20px;color:#000;">3</div>
<div class="a" style="left:382.00px;top:813.00px;width:91.00px;height:27.00px;background:#ffffff;"></div>
<div class="a" style="left:472.00px;top:813.00px;width:1.00px;height:27.00px;background:#c4c4c4;"></div>
<div class="a" style="left:382.00px;top:839.00px;width:91.00px;height:1.00px;background:#c4c4c4;"></div>
<div class="t" style="left:432.67px;top:817.24px;font-size:15px;line-height:20px;color:#000;">30,08</div>
<div class="a" style="left:473.00px;top:813.00px;width:187.00px;height:27.00px;background:#ffffff;"></div>
<div class="a" style="left:659.00px;top:813.00px;width:1.00px;height:27.00px;background:#c4c4c4;"></div>
<div class="a" style="left:473.00px;top:839.00px;width:187.00px;height:1.00px;background:#c4c4c4;"></div>
<div class="t" style="left:478.02px;top:817.24px;font-size:15px;line-height:20px;color:#000;letter-spacing:-0.432px;">A.S.L. BARI</div>
<div class="a" style="left:660.00px;top:813.00px;width:132.00px;height:27.00px;background:#ffffff;"></div>
<div class="a" style="left:791.00px;top:813.00px;width:1.00px;height:27.00px;background:#c4c4c4;"></div>
<div class="a" style="left:660.00px;top:839.00px;width:132.00px;height:1.00px;background:#c4c4c4;"></div>
<div class="t" style="left:663.32px;top:817.24px;font-size:15px;line-height:20px;color:#000;letter-spacing:-0.613px;">P.ZZA G. CESARE</div>
<div class="a" style="left:792.00px;top:813.00px;width:124.00px;height:27.00px;background:#ffffff;"></div>
<div class="a" style="left:915.00px;top:813.00px;width:1.00px;height:27.00px;background:#c4c4c4;"></div>
<div class="a" style="left:792.00px;top:839.00px;width:124.00px;height:1.00px;background:#c4c4c4;"></div>
<div class="t" style="left:795.82px;top:817.24px;font-size:15px;line-height:20px;color:#000;letter-spacing:-0.298px;">BARI</div>
<div class="a" style="left:916.00px;top:813.00px;width:29.00px;height:27.00px;background:#ffffff;"></div>
<div class="a" style="left:944.00px;top:813.00px;width:1.00px;height:27.00px;background:#c4c4c4;"></div>
<div class="a" style="left:916.00px;top:839.00px;width:29.00px;height:1.00px;background:#c4c4c4;"></div>
<div class="t" style="left:919.20px;top:817.24px;font-size:15px;line-height:20px;color:#000;letter-spacing:-0.420px;">BA</div>
<div class="a" style="left:945.00px;top:813.00px;width:86.00px;height:27.00px;background:#ffffff;"></div>
<div class="a" style="left:1030.00px;top:813.00px;width:1.00px;height:27.00px;background:#c4c4c4;"></div>
<div class="a" style="left:945.00px;top:839.00px;width:86.00px;height:1.00px;background:#c4c4c4;"></div>
<div class="t" style="left:951.00px;top:817.24px;font-size:15px;line-height:20px;color:#000;letter-spacing:0.219px;">29.10.2010</div>
<div class="a" style="left:1031.00px;top:813.00px;width:86.00px;height:27.00px;background:#ffffff;"></div>
<div class="a" style="left:1116.00px;top:813.00px;width:1.00px;height:27.00px;background:#c4c4c4;"></div>
<div class="a" style="left:1031.00px;top:839.00px;width:86.00px;height:1.00px;background:#c4c4c4;"></div>
<div class="t" style="left:1037.88px;top:817.24px;font-size:15px;line-height:20px;color:#000;letter-spacing:0.148px;">31.12.2021</div>
<div class="a" style="left:1117.00px;top:813.00px;width:45.00px;height:27.00px;background:#ffffff;"></div>
<div class="a" style="left:1161.00px;top:813.00px;width:1.00px;height:27.00px;background:#c4c4c4;"></div>
<div class="a" style="left:1117.00px;top:839.00px;width:45.00px;height:1.00px;background:#c4c4c4;"></div>
<div class="t" style="left:1121.62px;top:817.24px;font-size:15px;line-height:20px;color:#000;letter-spacing:-0.711px;">Attivo</div>
<div class="a" style="left:5.00px;top:840.00px;width:27.00px;height:27.00px;background:#f0f0f0;"></div>
<div class="a" style="left:5.00px;top:840.00px;width:1.00px;height:27.00px;background:#ffffff;"></div>
<div class="a" style="left:5.00px;top:840.00px;width:27.00px;height:1.00px;background:#ffffff;"></div>
<div class="a" style="left:31.00px;top:840.00px;width:1.00px;height:27.00px;background:#858585;"></div>
<div class="a" style="left:5.00px;top:866.00px;width:27.00px;height:1.00px;background:#7e7e7e;"></div>
<div class="t" style="left:19.65px;top:844.71px;font-size:15px;line-height:20px;color:#000;">4</div>
<div class="a" style="left:32.00px;top:840.00px;width:58.00px;height:27.00px;background:#ccffcc;"></div>
<div class="a" style="left:89.00px;top:840.00px;width:1.00px;height:27.00px;background:#c4c4c4;"></div>
<div class="a" style="left:32.00px;top:866.00px;width:58.00px;height:1.00px;background:#c4c4c4;"></div>
<div class="t" style="left:50.48px;top:844.71px;font-size:15px;line-height:20px;color:#000;letter-spacing:0.097px;">30,08</div>
<div class="a" style="left:90.00px;top:840.00px;width:219.00px;height:27.00px;background:#ccffcc;"></div>
<div class="a" style="left:308.00px;top:840.00px;width:1.00px;height:27.00px;background:#c4c4c4;"></div>
<div class="a" style="left:90.00px;top:866.00px;width:219.00px;height:1.00px;background:#c4c4c4;"></div>
<div class="t" style="left:95.62px;top:844.71px;font-size:15px;line-height:20px;color:#000;letter-spacing:-0.412px;">A.S.L. BARI</div>
<div class="a" style="left:309.00px;top:840.00px;width:73.00px;height:27.00px;background:#ccffcc;"></div>
<div class="a" style="left:381.00px;top:840.00px;width:1.00px;height:27.00px;background:#c4c4c4;"></div>
<div class="a" style="left:309.00px;top:866.00px;width:73.00px;height:1.00px;background:#c4c4c4;"></div>
<div class="t" style="left:370.65px;top:844.71px;font-size:15px;line-height:20px;color:#000;">4</div>
<div class="a" style="left:382.00px;top:840.00px;width:91.00px;height:27.00px;background:#ccffcc;"></div>
<div class="a" style="left:472.00px;top:840.00px;width:1.00px;height:27.00px;background:#c4c4c4;"></div>
<div class="a" style="left:382.00px;top:866.00px;width:91.00px;height:1.00px;background:#c4c4c4;"></div>
<div class="t" style="left:432.67px;top:844.71px;font-size:15px;line-height:20px;color:#000;">30,08</div>
<div class="a" style="left:473.00px;top:840.00px;width:187.00px;height:27.00px;background:#ccffcc;"></div>
<div class="a" style="left:659.00px;top:840.00px;width:1.00px;height:27.00px;background:#c4c4c4;"></div>
<div class="a" style="left:473.00px;top:866.00px;width:187.00px;height:1.00px;background:#c4c4c4;"></div>
<div class="t" style="left:478.02px;top:844.71px;font-size:15px;line-height:20px;color:#000;letter-spacing:-0.432px;">A.S.L. BARI</div>
<div class="a" style="left:660.00px;top:840.00px;width:132.00px;height:27.00px;background:#ccffcc;"></div>
<div class="a" style="left:791.00px;top:840.00px;width:1.00px;height:27.00px;background:#c4c4c4;"></div>
<div class="a" style="left:660.00px;top:866.00px;width:132.00px;height:1.00px;background:#c4c4c4;"></div>
<div class="t" style="left:663.32px;top:844.71px;font-size:15px;line-height:20px;color:#000;letter-spacing:-0.613px;">P.ZZA G. CESARE</div>
<div class="a" style="left:792.00px;top:840.00px;width:124.00px;height:27.00px;background:#ccffcc;"></div>
<div class="a" style="left:915.00px;top:840.00px;width:1.00px;height:27.00px;background:#c4c4c4;"></div>
<div class="a" style="left:792.00px;top:866.00px;width:124.00px;height:1.00px;background:#c4c4c4;"></div>
<div class="t" style="left:795.82px;top:844.71px;font-size:15px;line-height:20px;color:#000;letter-spacing:-0.298px;">BARI</div>
<div class="a" style="left:916.00px;top:840.00px;width:29.00px;height:27.00px;background:#ccffcc;"></div>
<div class="a" style="left:944.00px;top:840.00px;width:1.00px;height:27.00px;background:#c4c4c4;"></div>
<div class="a" style="left:916.00px;top:866.00px;width:29.00px;height:1.00px;background:#c4c4c4;"></div>
<div class="t" style="left:919.20px;top:844.71px;font-size:15px;line-height:20px;color:#000;letter-spacing:-0.420px;">BA</div>
<div class="a" style="left:945.00px;top:840.00px;width:86.00px;height:27.00px;background:#ccffcc;"></div>
<div class="a" style="left:1030.00px;top:840.00px;width:1.00px;height:27.00px;background:#c4c4c4;"></div>
<div class="a" style="left:945.00px;top:866.00px;width:86.00px;height:1.00px;background:#c4c4c4;"></div>
<div class="t" style="left:951.00px;top:844.71px;font-size:15px;line-height:20px;color:#000;letter-spacing:0.237px;">28.09.2012</div>
<div class="a" style="left:1031.00px;top:840.00px;width:86.00px;height:27.00px;background:#ccffcc;"></div>
<div class="a" style="left:1116.00px;top:840.00px;width:1.00px;height:27.00px;background:#c4c4c4;"></div>
<div class="a" style="left:1031.00px;top:866.00px;width:86.00px;height:1.00px;background:#c4c4c4;"></div>
<div class="t" style="left:1037.70px;top:844.71px;font-size:15px;line-height:20px;color:#000;letter-spacing:0.168px;">27.09.2021</div>
<div class="a" style="left:1117.00px;top:840.00px;width:45.00px;height:27.00px;background:#ccffcc;"></div>
<div class="a" style="left:1161.00px;top:840.00px;width:1.00px;height:27.00px;background:#c4c4c4;"></div>
<div class="a" style="left:1117.00px;top:866.00px;width:45.00px;height:1.00px;background:#c4c4c4;"></div>
<div class="t" style="left:1121.62px;top:844.71px;font-size:15px;line-height:20px;color:#000;letter-spacing:-0.711px;">Attivo</div>
<div class="a" style="left:5.00px;top:867.00px;width:27.00px;height:28.00px;background:#f0f0f0;"></div>
<div class="a" style="left:5.00px;top:867.00px;width:1.00px;height:28.00px;background:#ffffff;"></div>
<div class="a" style="left:5.00px;top:867.00px;width:27.00px;height:1.00px;background:#ffffff;"></div>
<div class="a" style="left:31.00px;top:867.00px;width:1.00px;height:28.00px;background:#858585;"></div>
<div class="a" style="left:5.00px;top:894.00px;width:27.00px;height:1.00px;background:#7e7e7e;"></div>
<div class="t" style="left:19.84px;top:872.18px;font-size:15px;line-height:20px;color:#000;">5</div>
<div class="a" style="left:32.00px;top:867.00px;width:58.00px;height:28.00px;background:#ffffff;"></div>
<div class="a" style="left:89.00px;top:867.00px;width:1.00px;height:28.00px;background:#c4c4c4;"></div>
<div class="a" style="left:32.00px;top:894.00px;width:58.00px;height:1.00px;background:#c4c4c4;"></div>
<div class="t" style="left:50.48px;top:872.18px;font-size:15px;line-height:20px;color:#000;letter-spacing:0.097px;">30,08</div>
<div class="a" style="left:90.00px;top:867.00px;width:219.00px;height:28.00px;background:#ffffff;"></div>
<div class="a" style="left:308.00px;top:867.00px;width:1.00px;height:28.00px;background:#c4c4c4;"></div>
<div class="a" style="left:90.00px;top:894.00px;width:219.00px;height:1.00px;background:#c4c4c4;"></div>
<div class="t" style="left:95.62px;top:872.18px;font-size:15px;line-height:20px;color:#000;letter-spacing:-0.412px;">A.S.L. BARI</div>
<div class="a" style="left:309.00px;top:867.00px;width:73.00px;height:28.00px;background:#ffffff;"></div>
<div class="a" style="left:381.00px;top:867.00px;width:1.00px;height:28.00px;background:#c4c4c4;"></div>
<div class="a" style="left:309.00px;top:894.00px;width:73.00px;height:1.00px;background:#c4c4c4;"></div>
<div class="t" style="left:370.84px;top:872.18px;font-size:15px;line-height:20px;color:#000;">5</div>
<div class="a" style="left:382.00px;top:867.00px;width:91.00px;height:28.00px;background:#ffffff;"></div>
<div class="a" style="left:472.00px;top:867.00px;width:1.00px;height:28.00px;background:#c4c4c4;"></div>
<div class="a" style="left:382.00px;top:894.00px;width:91.00px;height:1.00px;background:#c4c4c4;"></div>
<div class="t" style="left:407.64px;top:872.18px;font-size:15px;line-height:20px;color:#000;">20103,08</div>
<div class="a" style="left:473.00px;top:867.00px;width:187.00px;height:28.00px;background:#ffffff;"></div>
<div class="a" style="left:659.00px;top:867.00px;width:1.00px;height:28.00px;background:#c4c4c4;"></div>
<div class="a" style="left:473.00px;top:894.00px;width:187.00px;height:1.00px;background:#c4c4c4;"></div>
<div class="t" style="left:476.82px;top:872.18px;font-size:15px;line-height:20px;color:#000;letter-spacing:-0.059px;">PASCULLI LUIGI</div>
<div class="a" style="left:660.00px;top:867.00px;width:132.00px;height:28.00px;background:#ffffff;"></div>
<div class="a" style="left:791.00px;top:867.00px;width:1.00px;height:28.00px;background:#c4c4c4;"></div>
<div class="a" style="left:660.00px;top:894.00px;width:132.00px;height:1.00px;background:#c4c4c4;"></div>
<div class="t" style="left:664.48px;top:872.18px;font-size:15px;line-height:20px;color:#000;letter-spacing:-0.810px;">VIA BARI 9</div>
<div class="a" style="left:792.00px;top:867.00px;width:124.00px;height:28.00px;background:#ffffff;"></div>
<div class="a" style="left:915.00px;top:867.00px;width:1.00px;height:28.00px;background:#c4c4c4;"></div>
<div class="a" style="left:792.00px;top:894.00px;width:124.00px;height:1.00px;background:#c4c4c4;"></div>
<div class="t" style="left:795.82px;top:872.18px;font-size:15px;line-height:20px;color:#000;letter-spacing:0.189px;">LECCE</div>
<div class="a" style="left:916.00px;top:867.00px;width:29.00px;height:28.00px;background:#ffffff;"></div>
<div class="a" style="left:944.00px;top:867.00px;width:1.00px;height:28.00px;background:#c4c4c4;"></div>
<div class="a" style="left:916.00px;top:894.00px;width:29.00px;height:1.00px;background:#c4c4c4;"></div>
<div class="t" style="left:919.92px;top:872.18px;font-size:15px;line-height:20px;color:#000;letter-spacing:0.420px;">LE</div>
<div class="a" style="left:945.00px;top:867.00px;width:86.00px;height:28.00px;background:#ffffff;"></div>
<div class="a" style="left:1030.00px;top:867.00px;width:1.00px;height:28.00px;background:#c4c4c4;"></div>
<div class="a" style="left:945.00px;top:894.00px;width:86.00px;height:1.00px;background:#c4c4c4;"></div>
<div class="t" style="left:950.61px;top:872.18px;font-size:15px;line-height:20px;color:#000;letter-spacing:0.245px;">15.03.2014</div>
<div class="a" style="left:1031.00px;top:867.00px;width:86.00px;height:28.00px;background:#ffffff;"></div>
<div class="a" style="left:1116.00px;top:867.00px;width:1.00px;height:28.00px;background:#c4c4c4;"></div>
<div class="a" style="left:1031.00px;top:894.00px;width:86.00px;height:1.00px;background:#c4c4c4;"></div>
<div class="t" style="left:1037.88px;top:872.18px;font-size:15px;line-height:20px;color:#000;letter-spacing:0.145px;">31.12.2099</div>
<div class="a" style="left:1117.00px;top:867.00px;width:45.00px;height:28.00px;background:#ffffff;"></div>
<div class="a" style="left:1161.00px;top:867.00px;width:1.00px;height:28.00px;background:#c4c4c4;"></div>
<div class="a" style="left:1117.00px;top:894.00px;width:45.00px;height:1.00px;background:#c4c4c4;"></div>
<div class="t" style="left:1121.62px;top:872.18px;font-size:15px;line-height:20px;color:#000;letter-spacing:-0.711px;">Attivo</div>
<div class="a" style="left:5.00px;top:895.00px;width:27.00px;height:27.00px;background:#f0f0f0;"></div>
<div class="a" style="left:5.00px;top:895.00px;width:1.00px;height:27.00px;background:#ffffff;"></div>
<div class="a" style="left:5.00px;top:895.00px;width:27.00px;height:1.00px;background:#ffffff;"></div>
<div class="a" style="left:31.00px;top:895.00px;width:1.00px;height:27.00px;background:#858585;"></div>
<div class="a" style="left:5.00px;top:921.00px;width:27.00px;height:1.00px;background:#7e7e7e;"></div>
<div class="t" style="left:19.87px;top:899.65px;font-size:15px;line-height:20px;color:#000;">6</div>
<div class="a" style="left:32.00px;top:895.00px;width:58.00px;height:27.00px;background:#ffffff;"></div>
<div class="a" style="left:89.00px;top:895.00px;width:1.00px;height:27.00px;background:#c4c4c4;"></div>
<div class="a" style="left:32.00px;top:921.00px;width:58.00px;height:1.00px;background:#c4c4c4;"></div>
<div class="t" style="left:50.48px;top:899.65px;font-size:15px;line-height:20px;color:#000;letter-spacing:0.097px;">30,08</div>
<div class="a" style="left:90.00px;top:895.00px;width:219.00px;height:27.00px;background:#ffffff;"></div>
<div class="a" style="left:308.00px;top:895.00px;width:1.00px;height:27.00px;background:#c4c4c4;"></div>
<div class="a" style="left:90.00px;top:921.00px;width:219.00px;height:1.00px;background:#c4c4c4;"></div>
<div class="t" style="left:95.62px;top:899.65px;font-size:15px;line-height:20px;color:#000;letter-spacing:-0.412px;">A.S.L. BARI</div>
<div class="a" style="left:309.00px;top:895.00px;width:73.00px;height:27.00px;background:#ffffff;"></div>
<div class="a" style="left:381.00px;top:895.00px;width:1.00px;height:27.00px;background:#c4c4c4;"></div>
<div class="a" style="left:309.00px;top:921.00px;width:73.00px;height:1.00px;background:#c4c4c4;"></div>
<div class="t" style="left:370.84px;top:899.65px;font-size:15px;line-height:20px;color:#000;">5</div>
<div class="a" style="left:382.00px;top:895.00px;width:91.00px;height:27.00px;background:#ffffff;"></div>
<div class="a" style="left:472.00px;top:895.00px;width:1.00px;height:27.00px;background:#c4c4c4;"></div>
<div class="a" style="left:382.00px;top:921.00px;width:91.00px;height:1.00px;background:#c4c4c4;"></div>
<div class="t" style="left:407.64px;top:899.65px;font-size:15px;line-height:20px;color:#000;">20201,08</div>
<div class="a" style="left:473.00px;top:895.00px;width:187.00px;height:27.00px;background:#ffffff;"></div>
<div class="a" style="left:659.00px;top:895.00px;width:1.00px;height:27.00px;background:#c4c4c4;"></div>
<div class="a" style="left:473.00px;top:921.00px;width:187.00px;height:1.00px;background:#c4c4c4;"></div>
<div class="t" style="left:476.82px;top:899.65px;font-size:15px;line-height:20px;color:#000;letter-spacing:-0.329px;">DI MAURO ALBERTO</div>
<div class="a" style="left:660.00px;top:895.00px;width:132.00px;height:27.00px;background:#ffffff;"></div>
<div class="a" style="left:791.00px;top:895.00px;width:1.00px;height:27.00px;background:#c4c4c4;"></div>
<div class="a" style="left:660.00px;top:921.00px;width:132.00px;height:1.00px;background:#c4c4c4;"></div>
<div class="t" style="left:664.48px;top:899.65px;font-size:15px;line-height:20px;color:#000;letter-spacing:-0.734px;">VIA MAZZINI 20</div>
<div class="a" style="left:792.00px;top:895.00px;width:124.00px;height:27.00px;background:#ffffff;"></div>
<div class="a" style="left:915.00px;top:895.00px;width:1.00px;height:27.00px;background:#c4c4c4;"></div>
<div class="a" style="left:792.00px;top:921.00px;width:124.00px;height:1.00px;background:#c4c4c4;"></div>
<div class="t" style="left:795.82px;top:899.65px;font-size:15px;line-height:20px;color:#000;letter-spacing:0.189px;">LECCE</div>
<div class="a" style="left:916.00px;top:895.00px;width:29.00px;height:27.00px;background:#ffffff;"></div>
<div class="a" style="left:944.00px;top:895.00px;width:1.00px;height:27.00px;background:#c4c4c4;"></div>
<div class="a" style="left:916.00px;top:921.00px;width:29.00px;height:1.00px;background:#c4c4c4;"></div>
<div class="t" style="left:919.92px;top:899.65px;font-size:15px;line-height:20px;color:#000;letter-spacing:0.420px;">LE</div>
<div class="a" style="left:945.00px;top:895.00px;width:86.00px;height:27.00px;background:#ffffff;"></div>
<div class="a" style="left:1030.00px;top:895.00px;width:1.00px;height:27.00px;background:#c4c4c4;"></div>
<div class="a" style="left:945.00px;top:921.00px;width:86.00px;height:1.00px;background:#c4c4c4;"></div>
<div class="t" style="left:951.16px;top:899.65px;font-size:15px;line-height:20px;color:#000;letter-spacing:0.208px;">01.03.2016</div>
<div class="a" style="left:1031.00px;top:895.00px;width:86.00px;height:27.00px;background:#ffffff;"></div>
<div class="a" style="left:1116.00px;top:895.00px;width:1.00px;height:27.00px;background:#c4c4c4;"></div>
<div class="a" style="left:1031.00px;top:921.00px;width:86.00px;height:1.00px;background:#c4c4c4;"></div>
<div class="t" style="left:1037.31px;top:899.65px;font-size:15px;line-height:20px;color:#000;letter-spacing:0.211px;">18.05.2021</div>
<div class="a" style="left:1117.00px;top:895.00px;width:45.00px;height:27.00px;background:#ffffff;"></div>
<div class="a" style="left:1161.00px;top:895.00px;width:1.00px;height:27.00px;background:#c4c4c4;"></div>
<div class="a" style="left:1117.00px;top:921.00px;width:45.00px;height:1.00px;background:#c4c4c4;"></div>
<div class="t" style="left:1121.62px;top:899.65px;font-size:15px;line-height:20px;color:#000;letter-spacing:-0.711px;">Attivo</div>
<div class="a" style="left:5.00px;top:922.00px;width:27.00px;height:28.00px;background:#f0f0f0;"></div>
<div class="a" style="left:5.00px;top:922.00px;width:1.00px;height:28.00px;background:#ffffff;"></div>
<div class="a" style="left:5.00px;top:922.00px;width:27.00px;height:1.00px;background:#ffffff;"></div>
<div class="a" style="left:31.00px;top:922.00px;width:1.00px;height:28.00px;background:#858585;"></div>
<div class="a" style="left:5.00px;top:949.00px;width:27.00px;height:1.00px;background:#7e7e7e;"></div>
<div class="t" style="left:19.96px;top:927.12px;font-size:15px;line-height:20px;color:#000;">7</div>
<div class="a" style="left:32.00px;top:922.00px;width:58.00px;height:28.00px;background:#ffffff;"></div>
<div class="a" style="left:89.00px;top:922.00px;width:1.00px;height:28.00px;background:#c4c4c4;"></div>
<div class="a" style="left:32.00px;top:949.00px;width:58.00px;height:1.00px;background:#c4c4c4;"></div>
<div class="t" style="left:50.48px;top:927.12px;font-size:15px;line-height:20px;color:#000;letter-spacing:0.097px;">30,08</div>
<div class="a" style="left:90.00px;top:922.00px;width:219.00px;height:28.00px;background:#ffffff;"></div>
<div class="a" style="left:308.00px;top:922.00px;width:1.00px;height:28.00px;background:#c4c4c4;"></div>
<div class="a" style="left:90.00px;top:949.00px;width:219.00px;height:1.00px;background:#c4c4c4;"></div>
<div class="t" style="left:95.62px;top:927.12px;font-size:15px;line-height:20px;color:#000;letter-spacing:-0.412px;">A.S.L. BARI</div>
<div class="a" style="left:309.00px;top:922.00px;width:73.00px;height:28.00px;background:#ffffff;"></div>
<div class="a" style="left:381.00px;top:922.00px;width:1.00px;height:28.00px;background:#c4c4c4;"></div>
<div class="a" style="left:309.00px;top:949.00px;width:73.00px;height:1.00px;background:#c4c4c4;"></div>
<div class="t" style="left:370.84px;top:927.12px;font-size:15px;line-height:20px;color:#000;">5</div>
<div class="a" style="left:382.00px;top:922.00px;width:91.00px;height:28.00px;background:#ffffff;"></div>
<div class="a" style="left:472.00px;top:922.00px;width:1.00px;height:28.00px;background:#c4c4c4;"></div>
<div class="a" style="left:382.00px;top:949.00px;width:91.00px;height:1.00px;background:#c4c4c4;"></div>
<div class="t" style="left:407.64px;top:927.12px;font-size:15px;line-height:20px;color:#000;">20202,08</div>
<div class="a" style="left:473.00px;top:922.00px;width:187.00px;height:28.00px;background:#ffffff;"></div>
<div class="a" style="left:659.00px;top:922.00px;width:1.00px;height:28.00px;background:#c4c4c4;"></div>
<div class="a" style="left:473.00px;top:949.00px;width:187.00px;height:1.00px;background:#c4c4c4;"></div>
<div class="t" style="left:477.29px;top:927.12px;font-size:15px;line-height:20px;color:#000;letter-spacing:-0.349px;">CONTE ELISABETTA</div>
<div class="a" style="left:660.00px;top:922.00px;width:132.00px;height:28.00px;background:#ffffff;"></div>
<div class="a" style="left:791.00px;top:922.00px;width:1.00px;height:28.00px;background:#c4c4c4;"></div>
<div class="a" style="left:660.00px;top:949.00px;width:132.00px;height:1.00px;background:#c4c4c4;"></div>
<div class="t" style="left:664.48px;top:927.12px;font-size:15px;line-height:20px;color:#000;letter-spacing:-0.533px;">VIA GARIBALDI 66</div>
<div class="a" style="left:792.00px;top:922.00px;width:124.00px;height:28.00px;background:#ffffff;"></div>
<div class="a" style="left:915.00px;top:922.00px;width:1.00px;height:28.00px;background:#c4c4c4;"></div>
<div class="a" style="left:792.00px;top:949.00px;width:124.00px;height:1.00px;background:#c4c4c4;"></div>
<div class="t" style="left:795.82px;top:927.12px;font-size:15px;line-height:20px;color:#000;letter-spacing:0.189px;">LECCE</div>
<div class="a" style="left:916.00px;top:922.00px;width:29.00px;height:28.00px;background:#ffffff;"></div>
<div class="a" style="left:944.00px;top:922.00px;width:1.00px;height:28.00px;background:#c4c4c4;"></div>
<div class="a" style="left:916.00px;top:949.00px;width:29.00px;height:1.00px;background:#c4c4c4;"></div>
<div class="t" style="left:919.92px;top:927.12px;font-size:15px;line-height:20px;color:#000;letter-spacing:0.420px;">LE</div>
<div class="a" style="left:945.00px;top:922.00px;width:86.00px;height:28.00px;background:#ffffff;"></div>
<div class="a" style="left:1030.00px;top:922.00px;width:1.00px;height:28.00px;background:#c4c4c4;"></div>
<div class="a" style="left:945.00px;top:949.00px;width:86.00px;height:1.00px;background:#c4c4c4;"></div>
<div class="t" style="left:951.16px;top:927.12px;font-size:15px;line-height:20px;color:#000;letter-spacing:0.216px;">01.05.2021</div>
<div class="a" style="left:1031.00px;top:922.00px;width:86.00px;height:28.00px;background:#ffffff;"></div>
<div class="a" style="left:1116.00px;top:922.00px;width:1.00px;height:28.00px;background:#c4c4c4;"></div>
<div class="a" style="left:1031.00px;top:949.00px;width:86.00px;height:1.00px;background:#c4c4c4;"></div>
<div class="t" style="left:1037.88px;top:927.12px;font-size:15px;line-height:20px;color:#000;letter-spacing:0.145px;">31.12.2099</div>
<div class="a" style="left:1117.00px;top:922.00px;width:45.00px;height:28.00px;background:#ffffff;"></div>
<div class="a" style="left:1161.00px;top:922.00px;width:1.00px;height:28.00px;background:#c4c4c4;"></div>
<div class="a" style="left:1117.00px;top:949.00px;width:45.00px;height:1.00px;background:#c4c4c4;"></div>
<div class="t" style="left:1121.62px;top:927.12px;font-size:15px;line-height:20px;color:#000;letter-spacing:-0.711px;">Attivo</div>
<div class="a" style="left:5.00px;top:950.00px;width:27.00px;height:27.00px;background:#f0f0f0;"></div>
<div class="a" style="left:5.00px;top:950.00px;width:1.00px;height:27.00px;background:#ffffff;"></div>
<div class="a" style="left:5.00px;top:950.00px;width:27.00px;height:1.00px;background:#ffffff;"></div>
<div class="a" style="left:31.00px;top:950.00px;width:1.00px;height:27.00px;background:#858585;"></div>
<div class="a" style="left:5.00px;top:976.00px;width:27.00px;height:1.00px;background:#7e7e7e;"></div>
<div class="t" style="left:19.86px;top:954.59px;font-size:15px;line-height:20px;color:#000;">8</div>
<div class="a" style="left:32.00px;top:950.00px;width:58.00px;height:27.00px;background:#ccffcc;"></div>
<div class="a" style="left:89.00px;top:950.00px;width:1.00px;height:27.00px;background:#c4c4c4;"></div>
<div class="a" style="left:32.00px;top:976.00px;width:58.00px;height:1.00px;background:#c4c4c4;"></div>
<div class="t" style="left:50.48px;top:954.59px;font-size:15px;line-height:20px;color:#000;letter-spacing:0.097px;">30,08</div>
<div class="a" style="left:90.00px;top:950.00px;width:219.00px;height:27.00px;background:#ccffcc;"></div>
<div class="a" style="left:308.00px;top:950.00px;width:1.00px;height:27.00px;background:#c4c4c4;"></div>
<div class="a" style="left:90.00px;top:976.00px;width:219.00px;height:1.00px;background:#c4c4c4;"></div>
<div class="t" style="left:95.62px;top:954.59px;font-size:15px;line-height:20px;color:#000;letter-spacing:-0.412px;">A.S.L. BARI</div>
<div class="a" style="left:309.00px;top:950.00px;width:73.00px;height:27.00px;background:#ccffcc;"></div>
<div class="a" style="left:381.00px;top:950.00px;width:1.00px;height:27.00px;background:#c4c4c4;"></div>
<div class="a" style="left:309.00px;top:976.00px;width:73.00px;height:1.00px;background:#c4c4c4;"></div>
<div class="t" style="left:370.87px;top:954.59px;font-size:15px;line-height:20px;color:#000;">6</div>
<div class="a" style="left:382.00px;top:950.00px;width:91.00px;height:27.00px;background:#ccffcc;"></div>
<div class="a" style="left:472.00px;top:950.00px;width:1.00px;height:27.00px;background:#c4c4c4;"></div>
<div class="a" style="left:382.00px;top:976.00px;width:91.00px;height:1.00px;background:#c4c4c4;"></div>
<div class="t" style="left:407.64px;top:954.59px;font-size:15px;line-height:20px;color:#000;">20201,08</div>
<div class="a" style="left:473.00px;top:950.00px;width:187.00px;height:27.00px;background:#ccffcc;"></div>
<div class="a" style="left:659.00px;top:950.00px;width:1.00px;height:27.00px;background:#c4c4c4;"></div>
<div class="a" style="left:473.00px;top:976.00px;width:187.00px;height:1.00px;background:#c4c4c4;"></div>
<div class="t" style="left:476.82px;top:954.59px;font-size:15px;line-height:20px;color:#000;letter-spacing:-0.329px;">DI MAURO ALBERTO</div>
<div class="a" style="left:660.00px;top:950.00px;width:132.00px;height:27.00px;background:#ccffcc;"></div>
<div class="a" style="left:791.00px;top:950.00px;width:1.00px;height:27.00px;background:#c4c4c4;"></div>
<div class="a" style="left:660.00px;top:976.00px;width:132.00px;height:1.00px;background:#c4c4c4;"></div>
<div class="t" style="left:664.48px;top:954.59px;font-size:15px;line-height:20px;color:#000;letter-spacing:-0.734px;">VIA MAZZINI 20</div>
<div class="a" style="left:792.00px;top:950.00px;width:124.00px;height:27.00px;background:#ccffcc;"></div>
<div class="a" style="left:915.00px;top:950.00px;width:1.00px;height:27.00px;background:#c4c4c4;"></div>
<div class="a" style="left:792.00px;top:976.00px;width:124.00px;height:1.00px;background:#c4c4c4;"></div>
<div class="t" style="left:795.82px;top:954.59px;font-size:15px;line-height:20px;color:#000;letter-spacing:0.189px;">LECCE</div>
<div class="a" style="left:916.00px;top:950.00px;width:29.00px;height:27.00px;background:#ccffcc;"></div>
<div class="a" style="left:944.00px;top:950.00px;width:1.00px;height:27.00px;background:#c4c4c4;"></div>
<div class="a" style="left:916.00px;top:976.00px;width:29.00px;height:1.00px;background:#c4c4c4;"></div>
<div class="t" style="left:919.92px;top:954.59px;font-size:15px;line-height:20px;color:#000;letter-spacing:0.420px;">LE</div>
<div class="a" style="left:945.00px;top:950.00px;width:86.00px;height:27.00px;background:#ccffcc;"></div>
<div class="a" style="left:1030.00px;top:950.00px;width:1.00px;height:27.00px;background:#c4c4c4;"></div>
<div class="a" style="left:945.00px;top:976.00px;width:86.00px;height:1.00px;background:#c4c4c4;"></div>
<div class="t" style="left:951.16px;top:954.59px;font-size:15px;line-height:20px;color:#000;letter-spacing:0.207px;">01.01.2018</div>
<div class="a" style="left:1031.00px;top:950.00px;width:86.00px;height:27.00px;background:#ccffcc;"></div>
<div class="a" style="left:1116.00px;top:950.00px;width:1.00px;height:27.00px;background:#c4c4c4;"></div>
<div class="a" style="left:1031.00px;top:976.00px;width:86.00px;height:1.00px;background:#c4c4c4;"></div>
<div class="t" style="left:1037.88px;top:954.59px;font-size:15px;line-height:20px;color:#000;letter-spacing:0.145px;">31.12.9999</div>
<div class="a" style="left:1117.00px;top:950.00px;width:45.00px;height:27.00px;background:#ccffcc;"></div>
<div class="a" style="left:1161.00px;top:950.00px;width:1.00px;height:27.00px;background:#c4c4c4;"></div>
<div class="a" style="left:1117.00px;top:976.00px;width:45.00px;height:1.00px;background:#c4c4c4;"></div>
<div class="t" style="left:1121.62px;top:954.59px;font-size:15px;line-height:20px;color:#000;letter-spacing:-0.711px;">Attivo</div>
<div class="a" style="left:5.00px;top:977.00px;width:27.00px;height:28.00px;background:#f0f0f0;"></div>
<div class="a" style="left:5.00px;top:977.00px;width:1.00px;height:28.00px;background:#ffffff;"></div>
<div class="a" style="left:5.00px;top:977.00px;width:27.00px;height:1.00px;background:#ffffff;"></div>
<div class="a" style="left:31.00px;top:977.00px;width:1.00px;height:28.00px;background:#858585;"></div>
<div class="a" style="left:5.00px;top:1004.00px;width:27.00px;height:1.00px;background:#7e7e7e;"></div>
<div class="t" style="left:19.92px;top:982.06px;font-size:15px;line-height:20px;color:#000;">9</div>
<div class="a" style="left:32.00px;top:977.00px;width:58.00px;height:28.00px;background:#ffffff;"></div>
<div class="a" style="left:89.00px;top:977.00px;width:1.00px;height:28.00px;background:#c4c4c4;"></div>
<div class="a" style="left:32.00px;top:1004.00px;width:58.00px;height:1.00px;background:#c4c4c4;"></div>
<div class="t" style="left:49.91px;top:982.06px;font-size:15px;line-height:20px;color:#000;letter-spacing:0.239px;">13,08</div>
<div class="a" style="left:90.00px;top:977.00px;width:219.00px;height:28.00px;background:#ffffff;"></div>
<div class="a" style="left:308.00px;top:977.00px;width:1.00px;height:28.00px;background:#c4c4c4;"></div>
<div class="a" style="left:90.00px;top:1004.00px;width:219.00px;height:1.00px;background:#c4c4c4;"></div>
<div class="t" style="left:95.62px;top:982.06px;font-size:15px;line-height:20px;color:#000;letter-spacing:-0.448px;">ARMENISE VITO</div>
<div class="a" style="left:309.00px;top:977.00px;width:73.00px;height:28.00px;background:#ffffff;"></div>
<div class="a" style="left:381.00px;top:977.00px;width:1.00px;height:28.00px;background:#c4c4c4;"></div>
<div class="a" style="left:309.00px;top:1004.00px;width:73.00px;height:1.00px;background:#c4c4c4;"></div>
<div class="t" style="left:370.96px;top:982.06px;font-size:15px;line-height:20px;color:#000;">7</div>
<div class="a" style="left:382.00px;top:977.00px;width:91.00px;height:28.00px;background:#ffffff;"></div>
<div class="a" style="left:472.00px;top:977.00px;width:1.00px;height:28.00px;background:#c4c4c4;"></div>
<div class="a" style="left:382.00px;top:1004.00px;width:91.00px;height:1.00px;background:#c4c4c4;"></div>
<div class="t" style="left:441.01px;top:982.06px;font-size:15px;line-height:20px;color:#000;">1,08</div>
<div class="a" style="left:473.00px;top:977.00px;width:187.00px;height:28.00px;background:#ffffff;"></div>
<div class="a" style="left:659.00px;top:977.00px;width:1.00px;height:28.00px;background:#c4c4c4;"></div>
<div class="a" style="left:473.00px;top:1004.00px;width:187.00px;height:1.00px;background:#c4c4c4;"></div>
<div class="t" style="left:478.02px;top:982.06px;font-size:15px;line-height:20px;color:#000;letter-spacing:-0.474px;">ACCOLTI VINCENZO SRL</div>
<div class="a" style="left:660.00px;top:977.00px;width:132.00px;height:28.00px;background:#ffffff;"></div>
<div class="a" style="left:791.00px;top:977.00px;width:1.00px;height:28.00px;background:#c4c4c4;"></div>
<div class="a" style="left:660.00px;top:1004.00px;width:132.00px;height:1.00px;background:#c4c4c4;"></div>
<div class="t" style="left:664.48px;top:982.06px;font-size:15px;line-height:20px;color:#000;letter-spacing:-0.506px;">VIA OBERDAN 71</div>
<div class="a" style="left:792.00px;top:977.00px;width:124.00px;height:28.00px;background:#ffffff;"></div>
<div class="a" style="left:915.00px;top:977.00px;width:1.00px;height:28.00px;background:#c4c4c4;"></div>
<div class="a" style="left:792.00px;top:1004.00px;width:124.00px;height:1.00px;background:#c4c4c4;"></div>
<div class="t" style="left:795.82px;top:982.06px;font-size:15px;line-height:20px;color:#000;letter-spacing:-0.298px;">BARI</div>
<div class="a" style="left:916.00px;top:977.00px;width:29.00px;height:28.00px;background:#ffffff;"></div>
<div class="a" style="left:944.00px;top:977.00px;width:1.00px;height:28.00px;background:#c4c4c4;"></div>
<div class="a" style="left:916.00px;top:1004.00px;width:29.00px;height:1.00px;background:#c4c4c4;"></div>
<div class="t" style="left:919.20px;top:982.06px;font-size:15px;line-height:20px;color:#000;letter-spacing:-0.420px;">BA</div>
<div class="a" style="left:945.00px;top:977.00px;width:86.00px;height:28.00px;background:#ffffff;"></div>
<div class="a" style="left:1030.00px;top:977.00px;width:1.00px;height:28.00px;background:#c4c4c4;"></div>
<div class="a" style="left:945.00px;top:1004.00px;width:86.00px;height:1.00px;background:#c4c4c4;"></div>
<div class="t" style="left:951.00px;top:982.06px;font-size:15px;line-height:20px;color:#000;letter-spacing:0.219px;">29.05.2020</div>
<div class="a" style="left:1031.00px;top:977.00px;width:86.00px;height:28.00px;background:#ffffff;"></div>
<div class="a" style="left:1116.00px;top:977.00px;width:1.00px;height:28.00px;background:#c4c4c4;"></div>
<div class="a" style="left:1031.00px;top:1004.00px;width:86.00px;height:1.00px;background:#c4c4c4;"></div>
<div class="t" style="left:1037.88px;top:982.06px;font-size:15px;line-height:20px;color:#000;letter-spacing:0.148px;">31.12.2021</div>
<div class="a" style="left:1117.00px;top:977.00px;width:45.00px;height:28.00px;background:#ffffff;"></div>
<div class="a" style="left:1161.00px;top:977.00px;width:1.00px;height:28.00px;background:#c4c4c4;"></div>
<div class="a" style="left:1117.00px;top:1004.00px;width:45.00px;height:1.00px;background:#c4c4c4;"></div>
<div class="t" style="left:1121.62px;top:982.06px;font-size:15px;line-height:20px;color:#000;letter-spacing:-0.711px;">Attivo</div>
</div></div>
<div class="a" style="left:1896.00px;top:730.60px;width:2.00px;height:265.20px;background:#e4e4e4;"></div>
<div class="a" style="left:1898.00px;top:730.60px;width:19.50px;height:265.20px;background:#f0f0f0;"></div>
<div class="a" style="left:1898.00px;top:752.00px;width:18.00px;height:192.00px;background:#cdcdcd;"></div>
<svg class="a" style="left:1902.00px;top:738.10px;" width="10" height="8" viewBox="0 0 10 8"><path d="M1 6.5l4-4 4 4" stroke="#5c5c5c" stroke-width="2" fill="none"/></svg>
<svg class="a" style="left:1902.00px;top:980.80px;" width="10" height="8" viewBox="0 0 10 8"><path d="M1 1.5l4 4 4-4" stroke="#5c5c5c" stroke-width="2" fill="none"/></svg>
<div class="a" style="left:2.50px;top:995.80px;width:1915.00px;height:1.80px;background:#ffffff;"></div>
<div class="a" style="left:2.50px;top:997.60px;width:1915.00px;height:1.20px;background:#9a9a9a;"></div>
<div class="a" style="left:2.50px;top:998.80px;width:1917.50px;height:7.20px;background:#f0f0f0;"></div>
<div class="a" style="left:0.00px;top:1004.40px;width:2.50px;height:1.60px;background:#f0f0f0;"></div>
<div class="a" style="left:0.00px;top:1006.00px;width:1920.00px;height:2.60px;background:#fcfcfc;"></div>
<div class="a" style="left:0.00px;top:1008.60px;width:1920.00px;height:1.40px;background:#a2a2a2;"></div>
<div class="a" style="left:0.00px;top:1010.00px;width:1920.00px;height:18.80px;background:#f0f0f0;"></div>
<div class="a" style="left:0.00px;top:1028.80px;width:1920.00px;height:1.40px;background:#ffffff;"></div>
<div class="a" style="left:0.50px;top:1010.00px;width:1.30px;height:18.80px;background:#a2a2a2;"></div>
<div class="a" style="left:23.20px;top:1010.00px;width:1.30px;height:18.80px;background:#ffffff;"></div>
<div class="a" style="left:28.30px;top:1010.00px;width:1.30px;height:18.80px;background:#a2a2a2;"></div>
<div class="a" style="left:480.00px;top:1010.00px;width:1.30px;height:18.80px;background:#ffffff;"></div>
<div class="a" style="left:485.00px;top:1010.00px;width:1.30px;height:18.80px;background:#a2a2a2;"></div>
<div class="a" style="left:958.70px;top:1010.00px;width:1.30px;height:18.80px;background:#ffffff;"></div>
<div class="a" style="left:964.00px;top:1010.00px;width:1.30px;height:18.80px;background:#a2a2a2;"></div>
<div class="a" style="left:1061.70px;top:1010.00px;width:1.30px;height:18.80px;background:#ffffff;"></div>
<div class="a" style="left:1067.30px;top:1010.00px;width:1.30px;height:18.80px;background:#a2a2a2;"></div>
<div class="a" style="left:1297.10px;top:1010.00px;width:1.30px;height:18.80px;background:#ffffff;"></div>
<div class="a" style="left:1302.00px;top:1010.00px;width:1.30px;height:18.80px;background:#a2a2a2;"></div>
<div class="a" style="left:1532.20px;top:1010.00px;width:1.30px;height:18.80px;background:#ffffff;"></div>
<div class="a" style="left:1537.00px;top:1010.00px;width:1.30px;height:18.80px;background:#a2a2a2;"></div>
<div class="a" style="left:1915.70px;top:1010.00px;width:1.30px;height:18.80px;background:#ffffff;"></div>
<div class="t" style="left:30.19px;top:1010.10px;font-size:15px;line-height:20px;color:#1a1a1a;letter-spacing:-0.900px;">PASQUALE BRUNO</div>
<div class="t" style="left:486.92px;top:1010.10px;font-size:15px;line-height:20px;color:#1a1a1a;letter-spacing:-0.680px;">M_VDU</div>
<div class="t" style="left:966.10px;top:1010.10px;font-size:15px;line-height:20px;color:#1a1a1a;letter-spacing:-0.900px;">0072</div>
<div class="t" style="left:1069.82px;top:1010.10px;font-size:15px;line-height:20px;color:#1a1a1a;letter-spacing:-0.062px;">geport72</div>
<div class="t" style="left:1304.45px;top:1010.10px;font-size:15px;line-height:20px;color:#1a1a1a;letter-spacing:-0.200px;">ridatid04:3420</div>
<div class="t" style="left:1539.69px;top:1010.10px;font-size:15px;line-height:20px;color:#1a1a1a;letter-spacing:-0.473px;">6610 21/05/2021</div>
<div class="a" style="left:0;top:1030.2px;width:1920px;height:49.8px;background:linear-gradient(90deg,#1c1f23 0,#1c1f23 86%,#231f1f 94%,#2b2322 100%);"></div>
<svg class="a" style="left:0;top:1030px" width="1920" height="50" viewBox="0 1030 1920 50"><rect x="1236" y="1030.2" width="61" height="49.800" fill="#4a4c4f"/><path d="M19.800 1047.600l8.100-1.200v7.800h-8.100zM29.300 1046.200l10.900-1.500v9.500h-10.900zM19.800 1055.500h8.100v7.800l-8.100-1.200zM29.300 1055.500h10.900v9.600l-10.900-1.600z" fill="#fff"/><circle cx="93.100" cy="1052.100" r="6.700" fill="none" stroke="#fff" stroke-width="1.400"/><path d="M88.200 1057l-8 7.600" stroke="#fff" stroke-width="1.500"/><circle cx="150" cy="1054.800" r="8.600" fill="none" stroke="#fff" stroke-width="2.800"/><g fill="none" stroke="#fff" stroke-width="1.200"><rect x="200.200" y="1051.200" width="12.100" height="7"/><path d="M200.200 1045v3.400h12.100v-3.400M200.200 1064v-3.400h12.100v3.400M218.500 1045v6M218.500 1054.600v9.400"/></g><rect x="217.100" y="1051.300" width="2.800" height="2.800" fill="#fff"/><defs><linearGradient id="eg1" x1="0" y1="0" x2="1" y2="1"><stop offset="0" stop-color="#35c1f1"/><stop offset="1" stop-color="#0c59a4"/></linearGradient><linearGradient id="eg2" x1="0" y1="0" x2="1" y2="0"><stop offset="0" stop-color="#35c1f1"/><stop offset="0.600" stop-color="#36c752"/><stop offset="1" stop-color="#7ed957"/></linearGradient></defs><circle cx="274" cy="1054.800" r="14.800" fill="url(#eg1)"/><path d="M259.600 1052c1-7.600 7-12 14.400-12 8.200 0 14.800 5.800 14.800 13.200 0 4.200-3 6.800-6.600 6.800-3 0-4.600-1.200-4.600-2.600 0-1 1-1.600 1-3.200 0-3-2.800-5.600-6.800-5.600-5 0-9 2.200-12.200 3.400z" fill="url(#eg2)"/><path d="M266.400 1056.600c0-3.800 2.600-6.600 5.800-7.600-4 .4-9.400 3.200-10.400 8.800-.8 5 2.600 10.200 8.400 11.400 4.800.9 10-.6 13.600-4.400-2 1.200-5 1.800-8.200 1.200-5.200-1-9.200-4.800-9.200-9.400z" fill="#0b4f9e"/><defs><radialGradient id="ff1" cx="0.650" cy="0.200" r="0.900"><stop offset="0" stop-color="#ffe14a"/><stop offset="0.350" stop-color="#ff9a1f"/><stop offset="0.700" stop-color="#ff3d47"/><stop offset="1" stop-color="#e31587"/></radialGradient><radialGradient id="ff2" cx="0.500" cy="0.400" r="0.600"><stop offset="0" stop-color="#9059ff"/><stop offset="1" stop-color="#5b2ec2"/></radialGradient></defs><path d="M340.800 1040c3 2.600 4.200 5.200 4.400 7.200 2.600 1 5 4.800 5 9.400 0 6.800-6 12-14 12-8.200 0-14.400-5.600-14.400-13 0-4 1.600-7.600 3.600-9.400 0 1.600.6 2.800 1.400 3.400.6-2.200 2.200-4 4-5 0 1.600.8 3 2.400 3.600 3.400.6 6-1.400 6.600-3.600 1-2 1.200-3.200 1-4.600z" fill="url(#ff1)"/><circle cx="335.800" cy="1055.800" r="6.400" fill="url(#ff2)"/><path d="M326.400 1051.600c2-1.600 5-1.800 7.400-.6 1.600.8 3.400.8 4.400.4-1 2-3.600 2.800-5.400 2.800-1.600 0-2.200 1-1.800 2.200-2.400-.4-4.400-2.200-4.600-4.800z" fill="#ff9a1f"/><rect x="311.2" y="1077.4" width="50.69999999999999" height="2.6" fill="#76b9ed"/><rect x="391" y="1041.400" width="21" height="14.600" fill="#0a63b8"/><rect x="398" y="1041.400" width="7" height="7" fill="#1490df"/><rect x="405" y="1041.400" width="7" height="7" fill="#28a8ea"/><rect x="398" y="1048.400" width="7" height="7.600" fill="#0a78d4"/><rect x="405" y="1048.400" width="7" height="7.600" fill="#50d9ff"/><rect x="390" y="1054" width="22" height="14.200" rx="0.600" fill="#1b9de2"/><path d="M390 1054.600l22 13.600h-21.400a.6.600 0 0 1-.6-.6z" fill="#0f7fd0"/><path d="M412 1054l-14 9 8.600 5.200h4.800a.6.600 0 0 0 .6-.6z" fill="#2aaaf0"/><rect x="383" y="1047.400" width="15" height="15" rx="1.200" fill="#0f6cbd"/><ellipse cx="390.5" cy="1054.900" rx="3.500" ry="4" fill="none" stroke="#fff" stroke-width="1.800"/><rect x="445.500" y="1040.600" width="29.200" height="21.400" fill="#2b2b2b" stroke="#c8c8c8" stroke-width="1.400"/><path d="M449 1044.600l2.600 1.600-2.600 1.600M452.600 1048h2.400" stroke="#fff" stroke-width="1" fill="none"/><path d="M453.500 1059.400l6.500-6 4.200 3.400-6.600 6z" fill="#e8443a"/><path d="M460 1053.400l6-5.400 4.200 3.400-6 5.400z" fill="#3b78e7"/><path d="M457.600 1062.800l6.600-6 10 .6.800 4-9.600 8z" fill="#7ed321"/><path d="M464.200 1056.800l6-5.400 4.600 3.400.2 2.600z" fill="#3aa0e8"/><path d="M465.400 1069.400l9.600-8v-4l-9.800 8z" fill="#5aa312"/><path d="M453.500 1059.400l4.100 3.400 7.600 6.600-.2-3.800-7.400-6.600z" fill="#b52a22"/><rect x="435" y="1077.4" width="51" height="2.6" fill="#76b9ed"/><path d="M508.400 1046.600a1.400 1.400 0 0 1 1.400-1.400h9l2.200 2.600h13a1.400 1.400 0 0 1 1.400 1.400v15a1.400 1.400 0 0 1-1.400 1.400h-24.200a1.400 1.400 0 0 1-1.400-1.400z" fill="#f6b73c"/><path d="M508.400 1049.400h27v14.800a1.400 1.400 0 0 1-1.400 1.400h-24.200a1.400 1.400 0 0 1-1.400-1.400z" fill="#ffd766"/><path d="M508.400 1045.800a.8.800 0 0 1 .8-.6h10l1.800 2.400h-12.600z" fill="#e09a1a"/><path d="M513.600 1065.600v-9.800a1 1 0 0 1 1-1h14.600a1 1 0 0 1 1 1v9.800h-3.400v-7.400h-9.800v7.400z" fill="#3a96dd"/><rect x="517" y="1058.200" width="9.800" height="3" fill="#ffd766"/><rect x="570.400" y="1040.800" width="27" height="26" rx="3.600" fill="#b30b00"/><path d="M577 1061.600c2.400-1 6.400-8.600 6.600-13.400.1-2.400-2-2.400-2 0 0 5 6.400 11 10.200 11.200 2 .1 2-2-.2-2.200-4.400-.4-11.400 2-13.800 3.600-1.600 1-1.800 1.300-.8.800z" fill="none" stroke="#fff" stroke-width="1.500"/><defs><linearGradient id="sn" x1="0" y1="0" x2="0" y2="1"><stop offset="0" stop-color="#ffd800"/><stop offset="1" stop-color="#f8b90c"/></linearGradient></defs><rect x="633" y="1041.800" width="26.300" height="26.200" rx="1.600" fill="url(#sn)"/><path d="M646.400 1055.200h12.900l-12.900 12.800z" fill="#3c3c3c"/><path d="M659.300 1055.200v12.800h-12.900z" fill="#eaa90e"/><path d="M702.800 1040.800h9.600l9.200 27.600h-8l-1.600-5h-9l-1.600 5h-7.800z" fill="#00e5ee"/><path d="M694.600 1066.800h8.200l.6 1.600h-9.400zM712.600 1066.800h8.600l.6 1.600h-8.600z" fill="#009aa2"/><path d="M703.600 1061.600h8l.6 1.800h-9.200z" fill="#111"/><circle cx="707.600" cy="1054.400" r="7.200" fill="#f7ea00" stroke="#222" stroke-width="0.900"/><path d="M710.600 1060.800l3.400 4.200-5.400-2.600z" fill="#f7ea00" stroke="#222" stroke-width="0.700"/><circle cx="707.600" cy="1052.200" r="1.700" fill="#111"/><path d="M706.600 1053h2l.8 4.600h-3.600z" fill="#111"/><rect x="683" y="1077.4" width="51" height="2.6" fill="#76b9ed"/><path d="M757.600 1046l5.400-3.600h12.200l5.200 3.400v17l-5.400 3.800h-11.800l-5.600-3.600z" fill="none" stroke="#ee6b2a" stroke-width="2.800" stroke-linejoin="round"/><rect x="759.800" y="1045.400" width="19.200" height="18.600" rx="1.500" fill="#141414"/><path d="M763 1040.400l-5 3.200 4.400 3z" fill="#ee6b2a"/><path d="M776.400 1069.400l5-3.200-4.400-3z" fill="#ee6b2a"/><path d="M763.800 1049.600v6.600a5.600 4.600 0 0 0 11.200 0v-6.600h-3.200v6.600a2.400 2 0 0 1-4.800 0v-6.600z" fill="#ee6b2a"/><rect x="824" y="1041.200" width="22.200" height="27" rx="1.400" fill="#ca64ea"/><rect x="838.800" y="1048" width="7.400" height="6.800" fill="#ae4bd5"/><rect x="838.800" y="1054.800" width="7.400" height="6.800" fill="#9332bf"/><rect x="838.800" y="1061.600" width="7.400" height="6.600" fill="#7719aa"/><rect x="817" y="1047.400" width="15" height="15" rx="1.200" fill="#7719aa"/><path d="M821.400 1058.800v-7.800l6.200 7.800v-7.800" stroke="#fff" stroke-width="1.700" fill="none"/><ellipse cx="885.4" cy="1044.400" rx="4.800" ry="3.400" fill="#c9c9c9" stroke="#8e8e8e" stroke-width="0.600" transform="rotate(-28 885.4 1044.400)"/><ellipse cx="902.6" cy="1044.400" rx="4.800" ry="3.400" fill="#c9c9c9" stroke="#8e8e8e" stroke-width="0.600" transform="rotate(28 902.6 1044.400)"/><circle cx="894.0" cy="1041.600" r="1.500" fill="#b5b5b5"/><circle cx="894.0" cy="1055.800" r="11.800" fill="#b9b9b9"/><circle cx="894.0" cy="1055.800" r="9.800" fill="#d4d6d5" stroke="#9c9c9c" stroke-width="0.800"/><path d="M885.0 1060.600h6.600l3.400-8.400h7" stroke="#7a7a7a" stroke-width="3.400" fill="none" stroke-linejoin="round"/><path d="M885.0 1060.600h6.600l3.400-8.400h7" stroke="#efefdc" stroke-width="2" fill="none" stroke-linejoin="round"/><rect x="883.2" y="1067.400" width="21.600" height="2.400" rx="1" fill="#a8a8a8"/><ellipse cx="1256.8" cy="1044.400" rx="4.800" ry="3.400" fill="#c9c9c9" stroke="#8e8e8e" stroke-width="0.600" transform="rotate(-28 1256.8 1044.400)"/><ellipse cx="1274" cy="1044.400" rx="4.800" ry="3.400" fill="#c9c9c9" stroke="#8e8e8e" stroke-width="0.600" transform="rotate(28 1274 1044.400)"/><circle cx="1265.4" cy="1041.600" r="1.500" fill="#b5b5b5"/><circle cx="1265.4" cy="1055.800" r="11.800" fill="#b9b9b9"/><circle cx="1265.4" cy="1055.800" r="9.800" fill="#d4d6d5" stroke="#9c9c9c" stroke-width="0.800"/><path d="M1256.4 1060.600h6.600l3.400-8.400h7" stroke="#7a7a7a" stroke-width="3.400" fill="none" stroke-linejoin="round"/><path d="M1256.4 1060.600h6.600l3.400-8.400h7" stroke="#efefdc" stroke-width="2" fill="none" stroke-linejoin="round"/><rect x="1254.6" y="1067.400" width="21.600" height="2.400" rx="1" fill="#a8a8a8"/><path d="M942.400 1042.600l19.400-1.200 5.600 5.400.6 20-23.600 1z" fill="#ececec" stroke="#a8a8a8" stroke-width="0.800"/><path d="M944 1043.600l1-1.800M947 1043.400l1-1.800M950 1043.200l1-1.800M953 1043l1-1.800M956 1042.800l1-1.800" stroke="#555" stroke-width="0.700"/><path d="M943.600 1066.600l.6-13c5-4 13-5 19.600-1.600l3 1 .4 12.800z" fill="#86c440"/><path d="M943.600 1066.600l.2-6c6 1 16 1 23-1.600l.2 6.800z" fill="#4e9a1e"/><ellipse cx="953" cy="1055.600" rx="6" ry="4.600" fill="#9bd24e" stroke="#3a3a3a" stroke-width="0.800"/><circle cx="956.400" cy="1050" r="2.400" fill="#f4f4f4" stroke="#3a3a3a" stroke-width="0.800"/><path d="M946 1057.400h13M949 1054l8 6M957 1062.400l3 1.600v-4" stroke="#3a3a3a" stroke-width="0.700" fill="none"/><path d="M969.600 1041.600l-8.200 18.800-1 2.600 2.200-1.800 8.200-18.800z" fill="#f2a01e" stroke="#9a5c00" stroke-width="0.500"/><path d="M969.600 1041.600l1.200.8-.8 1.800-1.200-.8z" fill="#d22"/><path d="M1005.400 1042l1.600-1.600 22 3.200.6 23.400-1.600 1.800-21.800-4.400z" fill="#0a64c8"/><path d="M1005.400 1042l21.400 3.200 2.800 1v20.800l-2.600 1.800-21.600-4.400z" fill="#1587e8"/><path d="M1027 1045.200l2.600 1v20.800l-2.600 1.800z" fill="#0a4ea6"/><circle cx="1016.400" cy="1055" r="8.600" fill="#fff"/><path d="M1010 1055l4.600-3v1.800h3.800v-1.800l4.600 3-4.600 3v-1.800h-3.800v1.800z" fill="#1587e8"/><rect x="993" y="1077.4" width="51" height="2.6" fill="#76b9ed"/><path d="M1068 1040.800l23.600 2.600-1.600 17.800-23.800-2.200z" fill="#e4e8ee" stroke="#9aa2ae" stroke-width="0.800"/><defs><linearGradient id="rd" x1="0" y1="0" x2="1" y2="1"><stop offset="0" stop-color="#0a18d8"/><stop offset="0.550" stop-color="#2a4cf0"/><stop offset="1" stop-color="#b8c8ff"/></linearGradient></defs><path d="M1069.800 1042.800l20 2.200-1.400 14.400-20-1.800z" fill="url(#rd)"/><path d="M1080 1043.800l9.800 1.200-1.400 14.400-5-.4z" fill="#fff" opacity="0.400"/><path d="M1076 1060.400h5.600l.6 3h-6.800z" fill="#c4c8ce"/><ellipse cx="1079" cy="1065.600" rx="8" ry="2.800" fill="#e0e2e6" stroke="#a8aab0" stroke-width="0.600"/><circle cx="1087.800" cy="1063" r="6.600" fill="#dcdcdc" stroke="#f6f6f6" stroke-width="1"/><path d="M1084.200 1060.200l2.600 2.800-2.600 2.800M1091.600 1060.200l-2.600 2.800 2.600 2.800" stroke="#2fae2f" stroke-width="1.500" fill="none"/><rect x="1055" y="1077.4" width="51" height="2.6" fill="#76b9ed"/><rect x="1135" y="1041.400" width="21" height="14.600" fill="#0a63b8"/><rect x="1142" y="1041.400" width="7" height="7" fill="#1490df"/><rect x="1149" y="1041.400" width="7" height="7" fill="#28a8ea"/><rect x="1142" y="1048.400" width="7" height="7.600" fill="#0a78d4"/><rect x="1149" y="1048.400" width="7" height="7.600" fill="#50d9ff"/><rect x="1134" y="1054" width="22" height="14.200" rx="0.600" fill="#1b9de2"/><path d="M1134 1054.600l22 13.600h-21.400a.6.600 0 0 1-.6-.6z" fill="#0f7fd0"/><path d="M1156 1054l-14 9 8.600 5.200h4.800a.6.600 0 0 0 .6-.6z" fill="#2aaaf0"/><rect x="1127" y="1047.400" width="15" height="15" rx="1.200" fill="#0f6cbd"/><ellipse cx="1134.5" cy="1054.900" rx="3.500" ry="4" fill="none" stroke="#fff" stroke-width="1.800"/><rect x="1116.8" y="1077.4" width="51.200000000000045" height="2.6" fill="#76b9ed"/><rect x="1157.7" y="1077.4" width="10.299999999999955" height="2.6" fill="#4f84b4"/><rect x="1196" y="1041.200" width="22.200" height="27" rx="1.400" fill="#21a366"/><rect x="1196" y="1041.200" width="11" height="6.800" fill="#21a366"/><rect x="1207" y="1041.200" width="11.200" height="6.800" fill="#33c481"/><rect x="1196" y="1048" width="11" height="6.800" fill="#107c41"/><rect x="1207" y="1048" width="11.200" height="6.800" fill="#21a366"/><rect x="1196" y="1054.800" width="22.200" height="6.800" fill="#107c41"/><rect x="1196" y="1061.600" width="22.200" height="6.600" fill="#185c37"/><rect x="1207" y="1054.800" width="11.200" height="6.800" fill="#10693a"/><rect x="1189" y="1047.400" width="15" height="15" rx="1.200" fill="#107c41"/><path d="M1193.200 1050.800l6.600 8.400M1199.800 1050.800l-6.600 8.400" stroke="#fff" stroke-width="1.800"/><rect x="1179" y="1077.4" width="51.200000000000045" height="2.6" fill="#76b9ed"/><rect x="1236" y="1077.4" width="61" height="2.6" fill="#76b9ed"/><path d="M1318.800 1041.800c3 4 7.600 12.400 14.600 20.200" stroke="#f7941d" stroke-width="2.400" fill="none" stroke-linecap="round"/><path d="M1333.600 1044.600c-6 2.600-12 12-14.400 24.400" stroke="#f7941d" stroke-width="2.200" fill="none" stroke-linecap="round"/><rect x="1303" y="1077.4" width="51" height="2.6" fill="#76b9ed"/><rect x="1382" y="1041.200" width="22.200" height="27" rx="1.400" fill="#41a5ee"/><rect x="1382" y="1048" width="22.200" height="6.800" fill="#2b7cd3"/><rect x="1382" y="1054.800" width="22.200" height="6.800" fill="#185abd"/><rect x="1382" y="1061.600" width="22.200" height="6.600" fill="#103f91"/><rect x="1375" y="1047.400" width="15" height="15" rx="1.200" fill="#185abd"/><path d="M1378 1051l1.900 7.800 2.600-7.800 2.600 7.800 1.900-7.800" stroke="#fff" stroke-width="1.500" fill="none" stroke-linejoin="round"/><rect x="1365" y="1077.4" width="51" height="2.6" fill="#76b9ed"/><rect x="1405.3" y="1077.4" width="10.700000000000045" height="2.6" fill="#4f84b4"/><circle cx="1621.800" cy="1056.500" r="12.400" fill="#1b9fe0" stroke="#fff" stroke-width="1.900"/><path d="M1617.600 1052.400c0-2.800 2-4.400 4.600-4.400 2.800 0 4.600 1.600 4.600 3.900 0 2-1.300 2.900-2.400 3.800-.9.700-1.300 1.300-1.300 2.800" stroke="#fff" stroke-width="2.500" fill="none"/><circle cx="1623" cy="1062.600" r="1.600" fill="#fff"/><circle cx="1631.800" cy="1062.600" r="5.800" fill="#f5a623"/><rect x="1631.100" y="1061.600" width="1.500" height="4.200" fill="#fff"/><rect x="1631.100" y="1059.200" width="1.500" height="1.500" fill="#fff"/><path d="M1649.400 1058.600l7.700-7.600 7.700 7.600" stroke="#fff" stroke-width="1.300" fill="none"/><rect x="1681" y="1050.800" width="14.600" height="9.400" fill="none" stroke="#fff" stroke-width="1.200"/><rect x="1682.600" y="1052.400" width="11.400" height="6.200" fill="#fff"/><rect x="1696" y="1053.600" width="1.400" height="3.800" fill="#fff"/><path d="M1678.200 1048.200v2.600M1681 1048.200v2.600M1677 1050.800h5.200v2.400a2.600 2.600 0 0 1-2 2.400v3.400" stroke="#fff" stroke-width="1.100" fill="none"/><path d="M1710.400 1057.800h16.200v-10.400h-16.400" stroke="#fff" stroke-width="1.200" fill="none"/><path d="M1716.800 1062.400h6.800M1720.200 1057.800v4.600" stroke="#fff" stroke-width="1.200"/><rect x="1707.400" y="1047.400" width="3.600" height="4.800" fill="#1c1f23" stroke="#fff" stroke-width="1.100"/><path d="M1709.200 1052.200v10.600" stroke="#fff" stroke-width="1.100"/><path d="M1708.400 1049h1.600" stroke="#fff" stroke-width="0.800"/><path d="M1737.600 1052.200h2.800l3.600-3.400v12.600l-3.600-3.400h-2.800z" stroke="#fff" stroke-width="1.100" fill="none"/><path d="M1747.600 1051.800l7.400 7.400M1755 1051.800l-7.400 7.400" stroke="#fff" stroke-width="1.200"/><path d="M1869.200 1045.200h19.600v15.600h-8.200l-3.800 3.600v-3.600h-7.600z" fill="#fff"/><path d="M1872.600 1049.400h12.800M1872.600 1052.600h12.800M1872.600 1055.800h9.200" stroke="#1c1f23" stroke-width="1"/><circle cx="1888.400" cy="1064.600" r="9.400" fill="#2a2b2d" stroke="#6a6a6c" stroke-width="1"/><rect x="1914" y="1030.200" width="0.800" height="49.800" fill="#6a6a6a"/></svg>
<div class="t" style="left:1790.31px;top:1033.30px;font-size:15px;line-height:20px;color:#fff;letter-spacing:-0.766px;">12:15</div>
<div class="t" style="left:1769.70px;top:1056.60px;font-size:15px;line-height:20px;color:#fff;letter-spacing:0.057px;">24/05/2021</div>
<div class="t" style="left:1884.71px;top:1055.00px;font-size:15px;line-height:20px;color:#fff;font-weight:bold;">3</div>
</body></html>
